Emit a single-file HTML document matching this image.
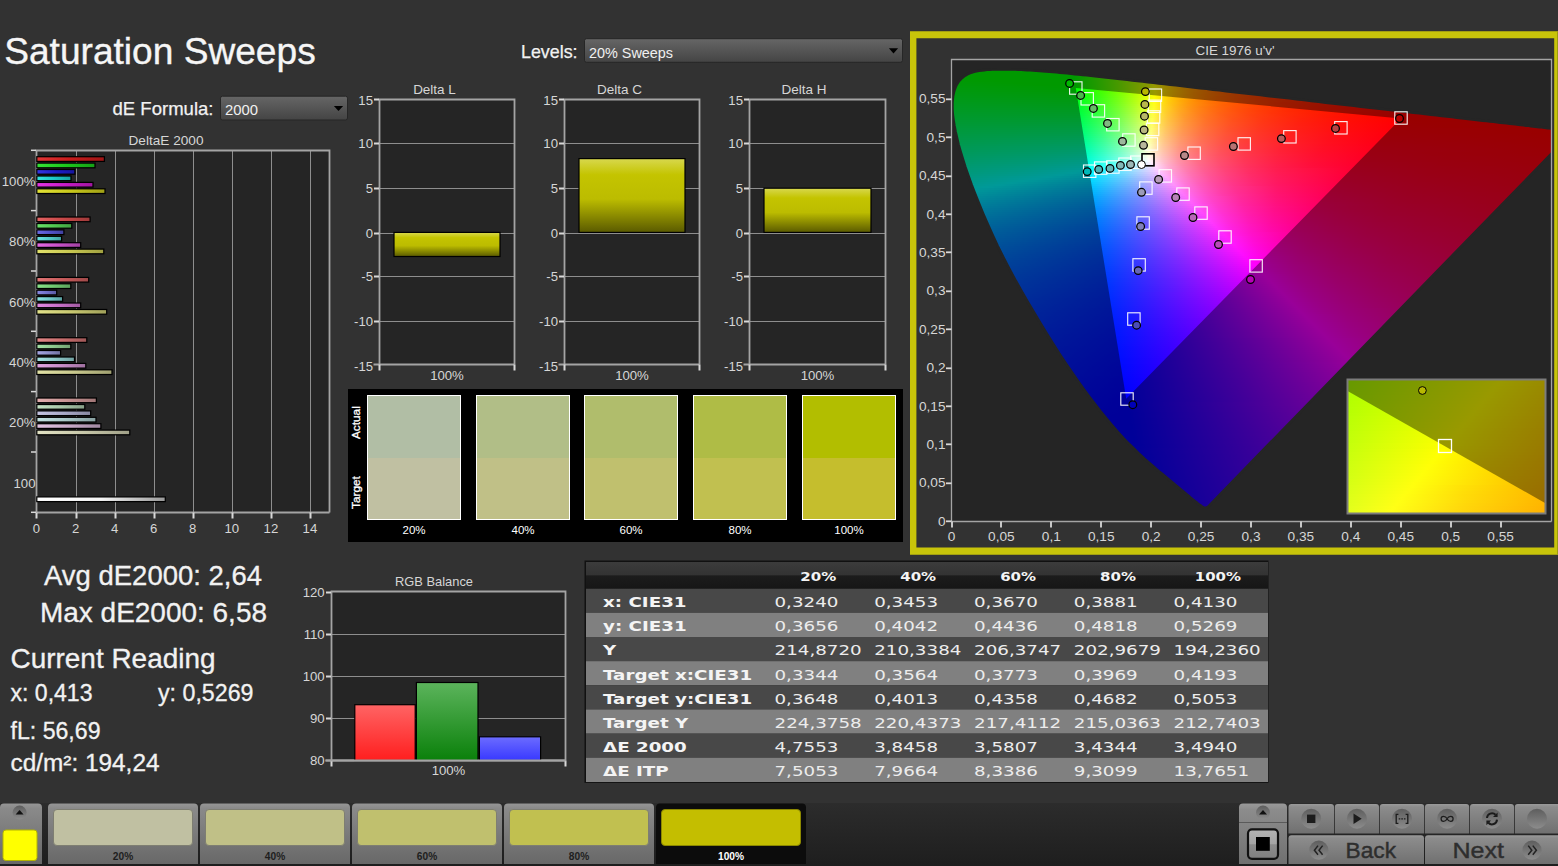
<!DOCTYPE html>
<html lang="en"><head><meta charset="utf-8"><title>Saturation Sweeps</title>
<style>
html,body{margin:0;padding:0;background:#323232;overflow:hidden}
body{width:1558px;height:866px}
svg{display:block;font-family:"Liberation Sans", sans-serif}
</style></head><body>
<svg width="1558" height="866" viewBox="0 0 1558 866">
<defs><linearGradient id="dd" x1="0" y1="0" x2="0" y2="1"><stop offset="0" stop-color="#666"/><stop offset=".5" stop-color="#555"/><stop offset="1" stop-color="#444"/></linearGradient><linearGradient id="b0" x1="0" y1="0" x2="1" y2="0"><stop offset="0" stop-color="#e23636"/><stop offset=".5" stop-color="#c81c1c"/><stop offset="1" stop-color="#a01616"/></linearGradient><linearGradient id="b1" x1="0" y1="0" x2="1" y2="0"><stop offset="0" stop-color="#36e236"/><stop offset=".5" stop-color="#1cc81c"/><stop offset="1" stop-color="#16a016"/></linearGradient><linearGradient id="b2" x1="0" y1="0" x2="1" y2="0"><stop offset="0" stop-color="#3636e2"/><stop offset=".5" stop-color="#1c1cc8"/><stop offset="1" stop-color="#1616a0"/></linearGradient><linearGradient id="b3" x1="0" y1="0" x2="1" y2="0"><stop offset="0" stop-color="#36e2e2"/><stop offset=".5" stop-color="#1cc8c8"/><stop offset="1" stop-color="#16a0a0"/></linearGradient><linearGradient id="b4" x1="0" y1="0" x2="1" y2="0"><stop offset="0" stop-color="#e236e2"/><stop offset=".5" stop-color="#c81cc8"/><stop offset="1" stop-color="#a016a0"/></linearGradient><linearGradient id="b5" x1="0" y1="0" x2="1" y2="0"><stop offset="0" stop-color="#e2e236"/><stop offset=".5" stop-color="#c8c81c"/><stop offset="1" stop-color="#a0a016"/></linearGradient><linearGradient id="b6" x1="0" y1="0" x2="1" y2="0"><stop offset="0" stop-color="#e26262"/><stop offset=".5" stop-color="#c84848"/><stop offset="1" stop-color="#a03a3a"/></linearGradient><linearGradient id="b7" x1="0" y1="0" x2="1" y2="0"><stop offset="0" stop-color="#6be26b"/><stop offset=".5" stop-color="#51c851"/><stop offset="1" stop-color="#41a041"/></linearGradient><linearGradient id="b8" x1="0" y1="0" x2="1" y2="0"><stop offset="0" stop-color="#6b6be2"/><stop offset=".5" stop-color="#5151c8"/><stop offset="1" stop-color="#4141a0"/></linearGradient><linearGradient id="b9" x1="0" y1="0" x2="1" y2="0"><stop offset="0" stop-color="#6be2e2"/><stop offset=".5" stop-color="#51c8c8"/><stop offset="1" stop-color="#41a0a0"/></linearGradient><linearGradient id="b10" x1="0" y1="0" x2="1" y2="0"><stop offset="0" stop-color="#e26be2"/><stop offset=".5" stop-color="#c851c8"/><stop offset="1" stop-color="#a041a0"/></linearGradient><linearGradient id="b11" x1="0" y1="0" x2="1" y2="0"><stop offset="0" stop-color="#e2e26b"/><stop offset=".5" stop-color="#c8c851"/><stop offset="1" stop-color="#a0a041"/></linearGradient><linearGradient id="b12" x1="0" y1="0" x2="1" y2="0"><stop offset="0" stop-color="#e27676"/><stop offset=".5" stop-color="#c85c5c"/><stop offset="1" stop-color="#a04a4a"/></linearGradient><linearGradient id="b13" x1="0" y1="0" x2="1" y2="0"><stop offset="0" stop-color="#8ae28a"/><stop offset=".5" stop-color="#70c870"/><stop offset="1" stop-color="#5aa05a"/></linearGradient><linearGradient id="b14" x1="0" y1="0" x2="1" y2="0"><stop offset="0" stop-color="#8a8ae2"/><stop offset=".5" stop-color="#7070c8"/><stop offset="1" stop-color="#5a5aa0"/></linearGradient><linearGradient id="b15" x1="0" y1="0" x2="1" y2="0"><stop offset="0" stop-color="#8ae2e2"/><stop offset=".5" stop-color="#70c8c8"/><stop offset="1" stop-color="#5aa0a0"/></linearGradient><linearGradient id="b16" x1="0" y1="0" x2="1" y2="0"><stop offset="0" stop-color="#e28ae2"/><stop offset=".5" stop-color="#c870c8"/><stop offset="1" stop-color="#a05aa0"/></linearGradient><linearGradient id="b17" x1="0" y1="0" x2="1" y2="0"><stop offset="0" stop-color="#e2e28a"/><stop offset=".5" stop-color="#c8c870"/><stop offset="1" stop-color="#a0a05a"/></linearGradient><linearGradient id="b18" x1="0" y1="0" x2="1" y2="0"><stop offset="0" stop-color="#e28888"/><stop offset=".5" stop-color="#c86e6e"/><stop offset="1" stop-color="#a05858"/></linearGradient><linearGradient id="b19" x1="0" y1="0" x2="1" y2="0"><stop offset="0" stop-color="#a6e2a6"/><stop offset=".5" stop-color="#8dc88d"/><stop offset="1" stop-color="#71a071"/></linearGradient><linearGradient id="b20" x1="0" y1="0" x2="1" y2="0"><stop offset="0" stop-color="#a6a6e2"/><stop offset=".5" stop-color="#8d8dc8"/><stop offset="1" stop-color="#7171a0"/></linearGradient><linearGradient id="b21" x1="0" y1="0" x2="1" y2="0"><stop offset="0" stop-color="#a6e2e2"/><stop offset=".5" stop-color="#8dc8c8"/><stop offset="1" stop-color="#71a0a0"/></linearGradient><linearGradient id="b22" x1="0" y1="0" x2="1" y2="0"><stop offset="0" stop-color="#e2a6e2"/><stop offset=".5" stop-color="#c88dc8"/><stop offset="1" stop-color="#a071a0"/></linearGradient><linearGradient id="b23" x1="0" y1="0" x2="1" y2="0"><stop offset="0" stop-color="#e2e2a6"/><stop offset=".5" stop-color="#c8c88d"/><stop offset="1" stop-color="#a0a071"/></linearGradient><linearGradient id="b24" x1="0" y1="0" x2="1" y2="0"><stop offset="0" stop-color="#e2aeae"/><stop offset=".5" stop-color="#c89494"/><stop offset="1" stop-color="#a07676"/></linearGradient><linearGradient id="b25" x1="0" y1="0" x2="1" y2="0"><stop offset="0" stop-color="#c4e2c4"/><stop offset=".5" stop-color="#aac8aa"/><stop offset="1" stop-color="#88a088"/></linearGradient><linearGradient id="b26" x1="0" y1="0" x2="1" y2="0"><stop offset="0" stop-color="#c4c4e2"/><stop offset=".5" stop-color="#aaaac8"/><stop offset="1" stop-color="#8888a0"/></linearGradient><linearGradient id="b27" x1="0" y1="0" x2="1" y2="0"><stop offset="0" stop-color="#c4e2e2"/><stop offset=".5" stop-color="#aac8c8"/><stop offset="1" stop-color="#88a0a0"/></linearGradient><linearGradient id="b28" x1="0" y1="0" x2="1" y2="0"><stop offset="0" stop-color="#e2c4e2"/><stop offset=".5" stop-color="#c8aac8"/><stop offset="1" stop-color="#a088a0"/></linearGradient><linearGradient id="b29" x1="0" y1="0" x2="1" y2="0"><stop offset="0" stop-color="#e2e2c4"/><stop offset=".5" stop-color="#c8c8aa"/><stop offset="1" stop-color="#a0a088"/></linearGradient><linearGradient id="bw" x1="0" y1="0" x2="1" y2="0"><stop offset="0" stop-color="#fff"/><stop offset=".5" stop-color="#f4f4f4"/><stop offset="1" stop-color="#9a9a9a"/></linearGradient><linearGradient id="yb" x1="0" y1="0" x2="0" y2="1"><stop offset="0" stop-color="#d8d84e"/><stop offset=".22" stop-color="#c4c400"/><stop offset=".55" stop-color="#bcbc00"/><stop offset="1" stop-color="#5a5a00"/></linearGradient><clipPath id="plotclip"><rect x="952" y="60" width="599.5" height="461"/></clipPath><clipPath id="locus" clip-path="url(#plotclip)"><polygon points="1207.5,507.3 1207.4,507.3 1207.4,507.3 1207.4,507.3 1207.3,507.3 1207.3,507.3 1207.2,507.3 1207.2,507.4 1207.2,507.4 1207.1,507.5 1207.0,507.5 1206.9,507.4 1206.8,507.4 1206.7,507.4 1206.7,507.4 1206.6,507.5 1206.6,507.5 1206.5,507.6 1206.5,507.7 1206.4,507.7 1206.4,507.8 1206.3,507.8 1206.2,507.8 1206.1,507.8 1206.0,507.8 1205.9,507.8 1205.7,507.8 1205.6,507.8 1205.4,507.8 1205.3,507.8 1205.1,507.8 1205.0,507.8 1204.8,507.8 1204.6,507.8 1204.5,507.7 1204.3,507.7 1204.1,507.6 1203.8,507.6 1203.6,507.4 1203.2,507.3 1202.8,507.0 1202.4,506.8 1201.9,506.5 1201.4,506.1 1200.8,505.7 1200.3,505.3 1199.6,504.9 1199.0,504.4 1198.3,503.8 1197.5,503.3 1196.7,502.6 1195.8,501.9 1194.9,501.2 1193.9,500.4 1192.8,499.6 1191.7,498.6 1190.6,497.7 1189.4,496.6 1188.1,495.5 1186.8,494.4 1185.4,493.2 1183.9,492.0 1182.4,490.7 1180.8,489.4 1179.1,488.0 1177.3,486.5 1175.4,484.9 1173.4,483.2 1171.3,481.5 1169.1,479.7 1166.8,477.8 1164.4,475.8 1162.0,473.8 1159.4,471.7 1156.7,469.4 1154.0,467.1 1151.1,464.6 1148.1,462.0 1144.9,459.2 1141.7,456.2 1138.4,453.1 1135.0,449.8 1131.4,446.3 1127.7,442.6 1123.8,438.6 1119.7,434.1 1115.3,429.1 1110.6,423.6 1105.6,417.5 1100.3,411.0 1094.9,404.0 1089.3,396.7 1083.6,388.9 1077.7,380.7 1071.7,372.1 1065.5,363.0 1059.2,353.5 1052.9,343.5 1046.5,333.3 1040.1,322.7 1033.7,312.0 1027.3,301.1 1021.0,290.1 1014.8,279.1 1008.8,267.9 1003.1,256.8 997.6,245.8 992.5,234.9 987.8,224.3 983.3,213.9 979.1,203.8 975.2,194.1 971.6,184.7 968.4,175.7 965.4,167.2 962.9,159.2 960.6,151.6 958.6,144.5 957.0,137.9 955.6,131.7 954.5,126.0 953.6,120.6 952.9,115.6 952.5,111.0 952.4,106.8 952.4,102.9 952.7,99.2 953.1,95.8 953.8,92.6 954.6,89.7 955.6,87.0 956.8,84.5 958.2,82.3 959.7,80.3 961.4,78.5 963.3,76.9 965.2,75.5 967.3,74.3 969.5,73.3 971.7,72.5 974.1,71.7 976.5,71.2 979.0,70.7 981.6,70.4 984.2,70.1 986.9,69.8 989.7,69.7 992.5,69.5 995.3,69.5 998.2,69.4 1001.0,69.4 1003.8,69.4 1006.7,69.4 1009.5,69.4 1012.3,69.5 1015.2,69.5 1018.1,69.6 1021.1,69.8 1024.0,69.9 1027.1,70.1 1030.1,70.2 1033.2,70.4 1036.4,70.7 1039.6,70.9 1042.8,71.1 1046.1,71.4 1049.5,71.7 1052.9,72.0 1056.4,72.3 1059.9,72.6 1063.5,73.0 1067.2,73.3 1071.0,73.7 1074.8,74.1 1078.7,74.5 1082.7,74.9 1086.8,75.3 1090.9,75.8 1095.1,76.2 1099.5,76.7 1103.9,77.2 1108.4,77.7 1113.0,78.2 1117.7,78.7 1122.5,79.2 1127.3,79.8 1132.3,80.4 1137.4,80.9 1142.6,81.5 1147.9,82.1 1153.3,82.7 1158.8,83.4 1164.4,84.0 1170.1,84.7 1175.9,85.3 1181.8,86.0 1187.8,86.7 1194.0,87.4 1200.2,88.1 1206.5,88.8 1212.9,89.6 1219.5,90.3 1226.1,91.1 1232.8,91.9 1239.6,92.6 1246.5,93.4 1253.5,94.2 1260.5,95.0 1267.6,95.9 1274.8,96.7 1282.0,97.5 1289.3,98.3 1296.6,99.2 1303.9,100.0 1311.3,100.9 1318.5,101.7 1325.7,102.6 1332.8,103.4 1339.9,104.2 1346.9,105.0 1353.9,105.8 1360.9,106.6 1367.9,107.4 1374.8,108.2 1381.6,109.0 1388.3,109.7 1394.8,110.5 1401.2,111.2 1407.4,111.9 1413.5,112.6 1419.4,113.3 1425.2,114.0 1430.9,114.6 1436.4,115.2 1441.8,115.9 1447.0,116.5 1452.0,117.0 1456.8,117.6 1461.5,118.1 1466.1,118.7 1470.4,119.2 1474.6,119.7 1478.7,120.1 1482.7,120.6 1486.5,121.0 1490.1,121.4 1493.6,121.8 1497.0,122.2 1500.3,122.6 1503.5,123.0 1506.7,123.3 1509.7,123.7 1512.7,124.0 1515.5,124.3 1518.3,124.7 1521.0,125.0 1523.6,125.3 1526.1,125.6 1528.6,125.8 1530.9,126.1 1533.1,126.4 1535.3,126.6 1537.4,126.9 1539.4,127.1 1541.3,127.3 1543.1,127.5 1544.8,127.7 1546.4,127.9 1547.8,128.1 1549.2,128.2 1550.6,128.4 1551.9,128.5 1553.1,128.7 1554.3,128.8 1555.4,128.9 1556.5,129.1 1557.5,129.2 1558.4,129.3 1559.3,129.4 1560.1,129.5 1560.9,129.6 1561.6,129.6 1562.2,129.7 1562.8,129.8 1563.3,129.8 1563.8,129.9 1564.3,130.0 1564.8,130.0 1565.3,130.1 1565.8,130.1 1566.2,130.2 1566.6,130.2 1567.0,130.3 1567.4,130.3 1567.8,130.4 1568.1,130.4 1568.5,130.4 1568.9,130.5 1569.3,130.5 1569.6,130.6 1570.0,130.6 1570.4,130.7 1570.7,130.7 1571.1,130.7 1571.4,130.8 1571.7,130.8 1572.0,130.8 1572.2,130.9 1572.3,130.9 1572.5,130.9 1572.6,130.9 1572.8,130.9 1572.9,130.9 1573.0,131.0 1573.1,131.0 1573.2,131.0 1573.2,131.0 1573.3,131.0 1573.4,131.0 1573.4,131.0 1573.4,131.0"/></clipPath><linearGradient id="cb" gradientUnits="userSpaceOnUse" x1="952" y1="0" x2="1552" y2="0"/><linearGradient id="c0" href="#cb"><stop offset=".0533" stop-color="#0f0"/><stop offset=".1250" stop-color="#0f0"/></linearGradient><linearGradient id="c1" href="#cb"><stop offset=".0333" stop-color="#0f0"/><stop offset=".1717" stop-color="#0f0"/></linearGradient><linearGradient id="c2" href="#cb"><stop offset=".0233" stop-color="#0f0"/><stop offset=".2017" stop-color="#0f0"/><stop offset=".2050" stop-color="#04ff00"/></linearGradient><linearGradient id="c3" href="#cb"><stop offset=".0183" stop-color="#0f0"/><stop offset=".2017" stop-color="#0f0"/><stop offset=".2367" stop-color="#3f0"/></linearGradient><linearGradient id="c4" href="#cb"><stop offset=".0133" stop-color="#0f0"/><stop offset=".2033" stop-color="#0f0"/><stop offset=".2367" stop-color="#3f0"/><stop offset=".2683" stop-color="#69ff00"/></linearGradient><linearGradient id="c5" href="#cb"><stop offset=".0100" stop-color="#00ff03"/><stop offset=".0467" stop-color="#0f0"/><stop offset=".2033" stop-color="#0f0"/><stop offset=".2517" stop-color="#4bff00"/><stop offset=".2983" stop-color="#a2ff00"/></linearGradient><linearGradient id="c6" href="#cb"><stop offset=".0083" stop-color="#00ff07"/><stop offset=".0817" stop-color="#0f0"/><stop offset=".2050" stop-color="#01ff00"/><stop offset=".2383" stop-color="#34ff00"/><stop offset=".2700" stop-color="#6bff00"/><stop offset=".2983" stop-color="#a2ff00"/><stop offset=".3267" stop-color="#e0ff00"/></linearGradient><linearGradient id="c7" href="#cb"><stop offset=".0067" stop-color="#00ff0b"/><stop offset=".1167" stop-color="#0f0"/><stop offset=".2050" stop-color="#0f0"/><stop offset=".2417" stop-color="#39ff00"/><stop offset=".2767" stop-color="#78ff00"/><stop offset=".3083" stop-color="#b7ff00"/><stop offset=".3383" stop-color="#fcff00"/><stop offset=".3400" stop-color="#fffe00"/><stop offset=".3567" stop-color="#ffda00"/></linearGradient><linearGradient id="c8" href="#cb"><stop offset=".0050" stop-color="#00ff0e"/><stop offset=".1533" stop-color="#0f0"/><stop offset=".2050" stop-color="#0f0"/><stop offset=".2383" stop-color="#3f0"/><stop offset=".2750" stop-color="#74ff00"/><stop offset=".3050" stop-color="#b0ff00"/><stop offset=".3400" stop-color="#fffd00"/><stop offset=".3617" stop-color="#ffd000"/><stop offset=".3850" stop-color="#ffab00"/></linearGradient><linearGradient id="c9" href="#cb"><stop offset=".0033" stop-color="#00ff12"/><stop offset=".2067" stop-color="#01ff00"/><stop offset=".2433" stop-color="#3bff00"/><stop offset=".2767" stop-color="#7f0"/><stop offset=".3083" stop-color="#b8ff00"/><stop offset=".3383" stop-color="#fdff00"/><stop offset=".3567" stop-color="#ffd900"/><stop offset=".3733" stop-color="#ffbc00"/><stop offset=".3933" stop-color="#ffa000"/><stop offset=".4150" stop-color="#f80"/></linearGradient><linearGradient id="c10" href="#cb"><stop offset=".0017" stop-color="#00ff16"/><stop offset=".2058" stop-color="#00ff02"/><stop offset=".2058" stop-color="#00ff02"/><stop offset=".2242" stop-color="#1aff00"/><stop offset=".2242" stop-color="#1cff00"/><stop offset=".2550" stop-color="#4fff00"/><stop offset=".2850" stop-color="#87ff00"/><stop offset=".3117" stop-color="#bfff00"/><stop offset=".3383" stop-color="#feff00"/><stop offset=".3600" stop-color="#ffd100"/><stop offset=".3833" stop-color="#ffac00"/><stop offset=".4117" stop-color="#ff8a00"/><stop offset=".4433" stop-color="#ff6e00"/></linearGradient><linearGradient id="c11" href="#cb"><stop offset=".0000" stop-color="#00ff19"/><stop offset=".2075" stop-color="#00ff07"/><stop offset=".2075" stop-color="#02ff07"/><stop offset=".2592" stop-color="#5f0"/><stop offset=".2592" stop-color="#58ff00"/><stop offset=".3000" stop-color="#a6ff00"/><stop offset=".3383" stop-color="#ff0"/><stop offset=".3633" stop-color="#ffcb00"/><stop offset=".3933" stop-color="#ff9e00"/><stop offset=".4283" stop-color="#ff7900"/><stop offset=".4717" stop-color="#ff5900"/></linearGradient><linearGradient id="c12" href="#cb"><stop offset=".0000" stop-color="#00ff1d"/><stop offset=".2075" stop-color="#00ff0c"/><stop offset=".2075" stop-color="#01ff0c"/><stop offset=".2533" stop-color="#4bff06"/><stop offset=".2958" stop-color="#9cff00"/><stop offset=".2958" stop-color="#9fff00"/><stop offset=".3383" stop-color="#fffe00"/><stop offset=".3533" stop-color="#fd0"/><stop offset=".3683" stop-color="#ffc100"/><stop offset=".4033" stop-color="#ff9100"/><stop offset=".4483" stop-color="#ff6800"/><stop offset=".5017" stop-color="#ff4800"/></linearGradient><linearGradient id="c13" href="#cb"><stop offset=".0000" stop-color="#00ff20"/><stop offset=".2075" stop-color="#0f1"/><stop offset=".2075" stop-color="#00ff10"/><stop offset=".2417" stop-color="#36ff0d"/><stop offset=".2733" stop-color="#70ff09"/><stop offset=".3017" stop-color="#aaff05"/><stop offset=".3308" stop-color="#ecff00"/><stop offset=".3308" stop-color="#f0ff00"/><stop offset=".3383" stop-color="#fffe00"/><stop offset=".3533" stop-color="#ffdc00"/><stop offset=".3717" stop-color="#fb0"/><stop offset=".3917" stop-color="#ff9e00"/><stop offset=".4150" stop-color="#ff8400"/><stop offset=".4667" stop-color="#ff5b00"/><stop offset=".5300" stop-color="#ff3b00"/></linearGradient><linearGradient id="c14" href="#cb"><stop offset=".0000" stop-color="#00ff24"/><stop offset=".2092" stop-color="#00ff15"/><stop offset=".2092" stop-color="#02ff15"/><stop offset=".2450" stop-color="#3bff11"/><stop offset=".2767" stop-color="#76ff0e"/><stop offset=".3083" stop-color="#b9ff09"/><stop offset=".3367" stop-color="#fdff05"/><stop offset=".3675" stop-color="#ffc200"/><stop offset=".3675" stop-color="#ffbf00"/><stop offset=".4033" stop-color="#ff9000"/><stop offset=".4450" stop-color="#ff6900"/><stop offset=".4967" stop-color="#ff4900"/><stop offset=".5600" stop-color="#ff2f00"/></linearGradient><linearGradient id="c15" href="#cb"><stop offset=".0000" stop-color="#00ff28"/><stop offset=".2092" stop-color="#00ff1a"/><stop offset=".2092" stop-color="#01ff1a"/><stop offset=".2450" stop-color="#3bff17"/><stop offset=".2767" stop-color="#76ff13"/><stop offset=".3083" stop-color="#b9ff0f"/><stop offset=".3367" stop-color="#feff0b"/><stop offset=".3517" stop-color="#ffde08"/><stop offset=".3667" stop-color="#ffc105"/><stop offset=".4025" stop-color="#ff9100"/><stop offset=".4025" stop-color="#ff8f00"/><stop offset=".4383" stop-color="#ff6e00"/><stop offset=".4800" stop-color="#ff5200"/><stop offset=".5300" stop-color="#ff3900"/><stop offset=".5883" stop-color="#ff2500"/></linearGradient><linearGradient id="c16" href="#cb"><stop offset=".0000" stop-color="#00ff2b"/><stop offset=".2092" stop-color="#00ff1f"/><stop offset=".2092" stop-color="#00ff1f"/><stop offset=".2450" stop-color="#3aff1c"/><stop offset=".2767" stop-color="#76ff19"/><stop offset=".3083" stop-color="#baff15"/><stop offset=".3367" stop-color="#ffff12"/><stop offset=".3567" stop-color="#ffd30c"/><stop offset=".3800" stop-color="#ffac08"/><stop offset=".4067" stop-color="#ff8a04"/><stop offset=".4375" stop-color="#ff6e00"/><stop offset=".4375" stop-color="#ff6d00"/><stop offset=".4733" stop-color="#f50"/><stop offset=".5150" stop-color="#ff3f00"/><stop offset=".6167" stop-color="#ff1d00"/></linearGradient><linearGradient id="c17" href="#cb"><stop offset=".0000" stop-color="#00ff2f"/><stop offset=".2108" stop-color="#00ff24"/><stop offset=".2108" stop-color="#02ff24"/><stop offset=".2467" stop-color="#3dff21"/><stop offset=".2783" stop-color="#79ff1e"/><stop offset=".3083" stop-color="#baff1b"/><stop offset=".3367" stop-color="#ffff18"/><stop offset=".3617" stop-color="#ffc810"/><stop offset=".3933" stop-color="#ff990a"/><stop offset=".4300" stop-color="#ff7304"/><stop offset=".4742" stop-color="#ff5400"/><stop offset=".4742" stop-color="#ff5300"/><stop offset=".5500" stop-color="#ff3000"/><stop offset=".6467" stop-color="#ff1500"/></linearGradient><linearGradient id="c18" href="#cb"><stop offset=".0000" stop-color="#0f3"/><stop offset=".2108" stop-color="#00ff29"/><stop offset=".2108" stop-color="#01ff29"/><stop offset=".2450" stop-color="#39ff27"/><stop offset=".2767" stop-color="#76ff24"/><stop offset=".3050" stop-color="#b3ff22"/><stop offset=".3367" stop-color="#fffe1e"/><stop offset=".3517" stop-color="#ffdb19"/><stop offset=".3667" stop-color="#ffbf14"/><stop offset=".3850" stop-color="#ffa310"/><stop offset=".4050" stop-color="#ff8b0c"/><stop offset=".4517" stop-color="#ff6105"/><stop offset=".5092" stop-color="#ff4100"/><stop offset=".5092" stop-color="#ff4000"/><stop offset=".5833" stop-color="#ff2500"/><stop offset=".6750" stop-color="#ff0f00"/></linearGradient><linearGradient id="c19" href="#cb"><stop offset=".0000" stop-color="#00ff37"/><stop offset=".2108" stop-color="#00ff2e"/><stop offset=".2108" stop-color="#00ff2e"/><stop offset=".2450" stop-color="#39ff2c"/><stop offset=".2767" stop-color="#75ff2a"/><stop offset=".3050" stop-color="#b3ff28"/><stop offset=".3367" stop-color="#fffd25"/><stop offset=".3533" stop-color="#ffd71e"/><stop offset=".3717" stop-color="#ffb618"/><stop offset=".3917" stop-color="#ff9913"/><stop offset=".4150" stop-color="#ff7f0e"/><stop offset=".4417" stop-color="#ff680a"/><stop offset=".4717" stop-color="#ff5406"/><stop offset=".5442" stop-color="#ff3200"/><stop offset=".5442" stop-color="#ff3100"/><stop offset=".6167" stop-color="#ff1b00"/><stop offset=".7050" stop-color="#ff0900"/></linearGradient><linearGradient id="c20" href="#cb"><stop offset=".0000" stop-color="#00ff3b"/><stop offset=".2125" stop-color="#0f3"/><stop offset=".2125" stop-color="#02ff33"/><stop offset=".2467" stop-color="#3bff32"/><stop offset=".2767" stop-color="#75ff30"/><stop offset=".3033" stop-color="#afff2e"/><stop offset=".3350" stop-color="#fdff2c"/><stop offset=".3367" stop-color="#fffc2b"/><stop offset=".3550" stop-color="#ffd223"/><stop offset=".3750" stop-color="#ffb01c"/><stop offset=".3983" stop-color="#ff9016"/><stop offset=".4267" stop-color="#ff7410"/><stop offset=".4583" stop-color="#ff5b0b"/><stop offset=".4933" stop-color="#ff4707"/><stop offset=".5808" stop-color="#ff2500"/><stop offset=".5808" stop-color="#ff2400"/><stop offset=".6517" stop-color="#ff1300"/><stop offset=".7333" stop-color="#ff0400"/></linearGradient><linearGradient id="c21" href="#cb"><stop offset=".0000" stop-color="#00ff3e"/><stop offset=".2125" stop-color="#00ff39"/><stop offset=".2125" stop-color="#01ff39"/><stop offset=".2467" stop-color="#3bff37"/><stop offset=".2783" stop-color="#79ff36"/><stop offset=".3083" stop-color="#bbff34"/><stop offset=".3350" stop-color="#feff33"/><stop offset=".3550" stop-color="#ffd229"/><stop offset=".3783" stop-color="#ffaa20"/><stop offset=".4050" stop-color="#ff8818"/><stop offset=".4350" stop-color="#ff6c12"/><stop offset=".4700" stop-color="#ff530d"/><stop offset=".5117" stop-color="#ff3d08"/><stop offset=".5600" stop-color="#ff2a04"/><stop offset=".6158" stop-color="#ff1b00"/><stop offset=".6158" stop-color="#ff1a00"/><stop offset=".7633" stop-color="#f00"/></linearGradient><linearGradient id="c22" href="#cb"><stop offset=".0000" stop-color="#00ff42"/><stop offset=".2125" stop-color="#00ff3e"/><stop offset=".2125" stop-color="#00ff3e"/><stop offset=".2467" stop-color="#3aff3d"/><stop offset=".2783" stop-color="#78ff3c"/><stop offset=".3067" stop-color="#b7ff3b"/><stop offset=".3350" stop-color="#ffff3a"/><stop offset=".3567" stop-color="#ffcd2e"/><stop offset=".3817" stop-color="#ffa424"/><stop offset=".4100" stop-color="#ff821b"/><stop offset=".4450" stop-color="#ff6314"/><stop offset=".4850" stop-color="#ff4a0e"/><stop offset=".5317" stop-color="#ff3408"/><stop offset=".5867" stop-color="#ff2204"/><stop offset=".6525" stop-color="#ff1200"/><stop offset=".6525" stop-color="#f10"/><stop offset=".7567" stop-color="#f00"/><stop offset=".7917" stop-color="#f00"/></linearGradient><linearGradient id="c23" href="#cb"><stop offset=".0000" stop-color="#00ff46"/><stop offset=".2142" stop-color="#00ff43"/><stop offset=".2142" stop-color="#02ff43"/><stop offset=".2483" stop-color="#3dff43"/><stop offset=".2783" stop-color="#78ff42"/><stop offset=".3067" stop-color="#b8ff42"/><stop offset=".3350" stop-color="#fffe41"/><stop offset=".3583" stop-color="#ffc933"/><stop offset=".3850" stop-color="#ff9e27"/><stop offset=".4167" stop-color="#ff7a1e"/><stop offset=".4533" stop-color="#ff5c16"/><stop offset=".4983" stop-color="#ff420f"/><stop offset=".5500" stop-color="#ff2d09"/><stop offset=".6133" stop-color="#ff1a04"/><stop offset=".6875" stop-color="#ff0a00"/><stop offset=".6875" stop-color="#ff0a00"/><stop offset=".7533" stop-color="#f00"/><stop offset=".8200" stop-color="#f00"/></linearGradient><linearGradient id="c24" href="#cb"><stop offset=".0000" stop-color="#00ff4a"/><stop offset=".2142" stop-color="#00ff49"/><stop offset=".2142" stop-color="#01ff49"/><stop offset=".2467" stop-color="#39ff49"/><stop offset=".2767" stop-color="#74ff48"/><stop offset=".3033" stop-color="#b0ff48"/><stop offset=".3350" stop-color="#fffd47"/><stop offset=".3583" stop-color="#ffc838"/><stop offset=".3867" stop-color="#ff9b2b"/><stop offset=".4200" stop-color="#ff7621"/><stop offset=".4617" stop-color="#ff5617"/><stop offset=".5100" stop-color="#ff3c10"/><stop offset=".5683" stop-color="#ff260a"/><stop offset=".6383" stop-color="#ff1304"/><stop offset=".7225" stop-color="#ff0400"/><stop offset=".7225" stop-color="#ff0400"/><stop offset=".7517" stop-color="#f00"/><stop offset=".8500" stop-color="#f00"/></linearGradient><linearGradient id="c25" href="#cb"><stop offset=".0000" stop-color="#00ff4e"/><stop offset=".2142" stop-color="#00ff4f"/><stop offset=".2142" stop-color="#00ff4f"/><stop offset=".2467" stop-color="#38ff4f"/><stop offset=".2767" stop-color="#74ff4f"/><stop offset=".3033" stop-color="#b0ff4f"/><stop offset=".3333" stop-color="#fdff4f"/><stop offset=".3350" stop-color="#fffc4e"/><stop offset=".3467" stop-color="#ffe045"/><stop offset=".3600" stop-color="#ffc43d"/><stop offset=".3900" stop-color="#ff962f"/><stop offset=".4250" stop-color="#ff7123"/><stop offset=".4683" stop-color="#ff5119"/><stop offset=".5200" stop-color="#ff3711"/><stop offset=".5817" stop-color="#ff210b"/><stop offset=".6567" stop-color="#ff0f05"/><stop offset=".7475" stop-color="#ff0001"/><stop offset=".7475" stop-color="#f00"/><stop offset=".8783" stop-color="#f00"/></linearGradient><linearGradient id="c26" href="#cb"><stop offset=".0000" stop-color="#00ff52"/><stop offset=".2158" stop-color="#00ff54"/><stop offset=".2158" stop-color="#02ff54"/><stop offset=".2483" stop-color="#3bff55"/><stop offset=".2767" stop-color="#74ff55"/><stop offset=".3067" stop-color="#b9ff56"/><stop offset=".3333" stop-color="#feff56"/><stop offset=".3350" stop-color="#fffb55"/><stop offset=".3467" stop-color="#ffdf4c"/><stop offset=".3600" stop-color="#ffc343"/><stop offset=".3883" stop-color="#ff9734"/><stop offset=".4233" stop-color="#ff7128"/><stop offset=".4667" stop-color="#ff511d"/><stop offset=".5183" stop-color="#ff3714"/><stop offset=".5800" stop-color="#ff210d"/><stop offset=".6533" stop-color="#ff0f07"/><stop offset=".7442" stop-color="#ff0002"/><stop offset=".7442" stop-color="#ff0002"/><stop offset=".9083" stop-color="#f00"/></linearGradient><linearGradient id="c27" href="#cb"><stop offset=".0000" stop-color="#00ff56"/><stop offset=".2158" stop-color="#00ff5a"/><stop offset=".2158" stop-color="#01ff5a"/><stop offset=".2483" stop-color="#3aff5b"/><stop offset=".2783" stop-color="#77ff5c"/><stop offset=".3067" stop-color="#b9ff5d"/><stop offset=".3333" stop-color="#ffff5e"/><stop offset=".3450" stop-color="#ffe253"/><stop offset=".3583" stop-color="#ffc64a"/><stop offset=".3867" stop-color="#ff993a"/><stop offset=".4217" stop-color="#ff722c"/><stop offset=".4633" stop-color="#ff5321"/><stop offset=".5150" stop-color="#ff3817"/><stop offset=".5767" stop-color="#ff2110"/><stop offset=".6500" stop-color="#ff0f09"/><stop offset=".7408" stop-color="#ff0004"/><stop offset=".7408" stop-color="#ff0004"/><stop offset=".9367" stop-color="#f00"/></linearGradient><linearGradient id="c28" href="#cb"><stop offset=".0017" stop-color="#00ff5a"/><stop offset=".2158" stop-color="#00ff60"/><stop offset=".2158" stop-color="#01ff60"/><stop offset=".2483" stop-color="#3aff61"/><stop offset=".2783" stop-color="#77ff62"/><stop offset=".3050" stop-color="#b5ff64"/><stop offset=".3333" stop-color="#fffe65"/><stop offset=".3450" stop-color="#ffe15a"/><stop offset=".3583" stop-color="#ffc54f"/><stop offset=".3867" stop-color="#ff983e"/><stop offset=".4217" stop-color="#ff7130"/><stop offset=".4633" stop-color="#ff5224"/><stop offset=".5133" stop-color="#ff381a"/><stop offset=".5750" stop-color="#ff2112"/><stop offset=".6483" stop-color="#ff0f0b"/><stop offset=".7375" stop-color="#ff0006"/><stop offset=".7375" stop-color="#ff0005"/><stop offset=".9650" stop-color="#f00"/></linearGradient><linearGradient id="c29" href="#cb"><stop offset=".0017" stop-color="#00ff5f"/><stop offset=".2175" stop-color="#0f6"/><stop offset=".2175" stop-color="#02ff66"/><stop offset=".2500" stop-color="#3cff67"/><stop offset=".2783" stop-color="#77ff69"/><stop offset=".3050" stop-color="#b5ff6b"/><stop offset=".3333" stop-color="#fffd6c"/><stop offset=".3567" stop-color="#ffc757"/><stop offset=".3850" stop-color="#f94"/><stop offset=".4200" stop-color="#ff7235"/><stop offset=".4617" stop-color="#ff5228"/><stop offset=".5117" stop-color="#ff381d"/><stop offset=".5717" stop-color="#ff2215"/><stop offset=".6450" stop-color="#ff0f0d"/><stop offset=".7342" stop-color="#ff0007"/><stop offset=".7342" stop-color="#ff0007"/><stop offset=".9000" stop-color="#f00"/><stop offset=".9950" stop-color="#f00"/></linearGradient><linearGradient id="c30" href="#cb"><stop offset=".0017" stop-color="#00ff63"/><stop offset=".2175" stop-color="#00ff6c"/><stop offset=".2175" stop-color="#02ff6c"/><stop offset=".2483" stop-color="#39ff6e"/><stop offset=".2767" stop-color="#73ff70"/><stop offset=".3017" stop-color="#adff72"/><stop offset=".3333" stop-color="#fffd74"/><stop offset=".3567" stop-color="#ffc65d"/><stop offset=".3850" stop-color="#ff9849"/><stop offset=".4200" stop-color="#ff7139"/><stop offset=".4617" stop-color="#ff512b"/><stop offset=".5117" stop-color="#ff3720"/><stop offset=".5717" stop-color="#ff2117"/><stop offset=".6433" stop-color="#ff0f0f"/><stop offset=".7308" stop-color="#ff0009"/><stop offset=".7308" stop-color="#ff0009"/><stop offset="1.0000" stop-color="#f00"/></linearGradient><linearGradient id="c31" href="#cb"><stop offset=".0033" stop-color="#00ff67"/><stop offset=".2175" stop-color="#00ff72"/><stop offset=".2175" stop-color="#01ff72"/><stop offset=".2483" stop-color="#38ff74"/><stop offset=".2767" stop-color="#73ff77"/><stop offset=".3050" stop-color="#b6ff7a"/><stop offset=".3317" stop-color="#feff7d"/><stop offset=".3333" stop-color="#fffc7b"/><stop offset=".3450" stop-color="#ffde6e"/><stop offset=".3567" stop-color="#ffc563"/><stop offset=".3850" stop-color="#ff974e"/><stop offset=".4183" stop-color="#ff723d"/><stop offset=".4600" stop-color="#ff512f"/><stop offset=".5100" stop-color="#ff3723"/><stop offset=".5683" stop-color="#ff211a"/><stop offset=".6400" stop-color="#ff0f11"/><stop offset=".7275" stop-color="#ff000b"/><stop offset=".7275" stop-color="#ff000b"/><stop offset="1.0000" stop-color="#f00"/></linearGradient><linearGradient id="c32" href="#cb"><stop offset=".0033" stop-color="#00ff6b"/><stop offset=".2192" stop-color="#00ff78"/><stop offset=".2192" stop-color="#03ff78"/><stop offset=".2517" stop-color="#3eff7b"/><stop offset=".2800" stop-color="#7aff7e"/><stop offset=".3067" stop-color="#baff81"/><stop offset=".3317" stop-color="#feff85"/><stop offset=".3550" stop-color="#ffc76a"/><stop offset=".3833" stop-color="#ff9854"/><stop offset=".4167" stop-color="#ff7242"/><stop offset=".4583" stop-color="#ff5233"/><stop offset=".5067" stop-color="#ff3827"/><stop offset=".5667" stop-color="#ff211c"/><stop offset=".6383" stop-color="#ff0f14"/><stop offset=".7242" stop-color="#ff000d"/><stop offset=".7242" stop-color="#ff000c"/><stop offset="1.0000" stop-color="#f00"/></linearGradient><linearGradient id="c33" href="#cb"><stop offset=".0050" stop-color="#00ff70"/><stop offset=".2192" stop-color="#00ff7e"/><stop offset=".2192" stop-color="#02ff7e"/><stop offset=".2500" stop-color="#3aff82"/><stop offset=".2783" stop-color="#76ff85"/><stop offset=".3050" stop-color="#b6ff89"/><stop offset=".3317" stop-color="#ffff8c"/><stop offset=".3433" stop-color="#ffe07d"/><stop offset=".3550" stop-color="#ffc671"/><stop offset=".3833" stop-color="#ff9759"/><stop offset=".4167" stop-color="#ff7146"/><stop offset=".4567" stop-color="#ff5237"/><stop offset=".5050" stop-color="#ff382a"/><stop offset=".5633" stop-color="#ff221f"/><stop offset=".6350" stop-color="#ff0f16"/><stop offset=".7208" stop-color="#ff000e"/><stop offset=".7208" stop-color="#ff000e"/><stop offset="1.0000" stop-color="#ff0001"/></linearGradient><linearGradient id="c34" href="#cb"><stop offset=".0050" stop-color="#00ff74"/><stop offset=".2192" stop-color="#00ff85"/><stop offset=".2192" stop-color="#01ff85"/><stop offset=".2500" stop-color="#39ff88"/><stop offset=".2783" stop-color="#76ff8c"/><stop offset=".3033" stop-color="#b2ff90"/><stop offset=".3317" stop-color="#fffe94"/><stop offset=".3433" stop-color="#ffdf84"/><stop offset=".3550" stop-color="#ffc577"/><stop offset=".3817" stop-color="#ff9960"/><stop offset=".4150" stop-color="#ff724c"/><stop offset=".4550" stop-color="#ff523b"/><stop offset=".5033" stop-color="#ff382d"/><stop offset=".5617" stop-color="#f22"/><stop offset=".6317" stop-color="#ff0f18"/><stop offset=".7175" stop-color="#ff0010"/><stop offset=".7175" stop-color="#ff0010"/><stop offset="1.0000" stop-color="#ff0002"/></linearGradient><linearGradient id="c35" href="#cb"><stop offset=".0050" stop-color="#00ff78"/><stop offset=".2208" stop-color="#00ff8b"/><stop offset=".2208" stop-color="#03ff8b"/><stop offset=".2517" stop-color="#3cff90"/><stop offset=".2783" stop-color="#76ff94"/><stop offset=".3033" stop-color="#b3ff98"/><stop offset=".3317" stop-color="#fffd9c"/><stop offset=".3433" stop-color="#ffde8b"/><stop offset=".3550" stop-color="#ffc47d"/><stop offset=".3817" stop-color="#ff9865"/><stop offset=".4150" stop-color="#ff7150"/><stop offset=".4550" stop-color="#ff513e"/><stop offset=".5033" stop-color="#ff3730"/><stop offset=".5600" stop-color="#ff2224"/><stop offset=".6300" stop-color="#ff0f1a"/><stop offset=".7142" stop-color="#ff0012"/><stop offset=".7142" stop-color="#ff0012"/><stop offset="1.0000" stop-color="#ff0003"/></linearGradient><linearGradient id="c36" href="#cb"><stop offset=".0067" stop-color="#00ff7d"/><stop offset=".2208" stop-color="#00ff92"/><stop offset=".2208" stop-color="#02ff92"/><stop offset=".2500" stop-color="#38ff96"/><stop offset=".2767" stop-color="#72ff9b"/><stop offset=".3000" stop-color="#aaff9f"/><stop offset=".3300" stop-color="#fdffa6"/><stop offset=".3317" stop-color="#fffca4"/><stop offset=".3433" stop-color="#ffdd92"/><stop offset=".3550" stop-color="#ffc384"/><stop offset=".3817" stop-color="#ff976a"/><stop offset=".4150" stop-color="#ff7054"/><stop offset=".4533" stop-color="#ff5243"/><stop offset=".5017" stop-color="#ff3733"/><stop offset=".5583" stop-color="#ff2127"/><stop offset=".6267" stop-color="#ff0f1d"/><stop offset=".7108" stop-color="#ff0014"/><stop offset=".7108" stop-color="#ff0014"/><stop offset="1.0000" stop-color="#ff0004"/></linearGradient><linearGradient id="c37" href="#cb"><stop offset=".0067" stop-color="#00ff81"/><stop offset=".2208" stop-color="#00ff98"/><stop offset=".2208" stop-color="#01ff99"/><stop offset=".2517" stop-color="#3bff9e"/><stop offset=".2800" stop-color="#79ffa3"/><stop offset=".3050" stop-color="#b8ffa8"/><stop offset=".3300" stop-color="#feffae"/><stop offset=".3533" stop-color="#ffc68c"/><stop offset=".3800" stop-color="#ff9871"/><stop offset=".4133" stop-color="#ff7159"/><stop offset=".4517" stop-color="#ff5247"/><stop offset=".4983" stop-color="#ff3837"/><stop offset=".5550" stop-color="#ff222a"/><stop offset=".6233" stop-color="#ff101f"/><stop offset=".7075" stop-color="#ff0016"/><stop offset=".7075" stop-color="#ff0016"/><stop offset="1.0000" stop-color="#ff0005"/></linearGradient><linearGradient id="c38" href="#cb"><stop offset=".0083" stop-color="#00ff86"/><stop offset=".2225" stop-color="#00ff9f"/><stop offset=".2225" stop-color="#03ffa0"/><stop offset=".2533" stop-color="#3effa5"/><stop offset=".2800" stop-color="#79ffab"/><stop offset=".3050" stop-color="#b8ffb0"/><stop offset=".3300" stop-color="#ffffb7"/><stop offset=".3517" stop-color="#ffc895"/><stop offset=".3783" stop-color="#ff9a78"/><stop offset=".4100" stop-color="#ff7360"/><stop offset=".4500" stop-color="#ff524b"/><stop offset=".4967" stop-color="#ff383b"/><stop offset=".5533" stop-color="#ff222d"/><stop offset=".6217" stop-color="#ff0f21"/><stop offset=".7042" stop-color="#ff0018"/><stop offset=".7042" stop-color="#ff0018"/><stop offset="1.0000" stop-color="#ff0006"/></linearGradient><linearGradient id="c39" href="#cb"><stop offset=".0100" stop-color="#00ff8b"/><stop offset=".2225" stop-color="#00ffa6"/><stop offset=".2225" stop-color="#02ffa6"/><stop offset=".2517" stop-color="#3affac"/><stop offset=".2783" stop-color="#75ffb2"/><stop offset=".3033" stop-color="#b4ffb8"/><stop offset=".3300" stop-color="#fffebf"/><stop offset=".3400" stop-color="#ffe2ad"/><stop offset=".3517" stop-color="#ffc79c"/><stop offset=".3783" stop-color="#ff987d"/><stop offset=".4100" stop-color="#ff7264"/><stop offset=".4500" stop-color="#ff514f"/><stop offset=".4967" stop-color="#ff373e"/><stop offset=".5533" stop-color="#ff212f"/><stop offset=".6200" stop-color="#ff0f24"/><stop offset=".7025" stop-color="#ff001a"/><stop offset=".7025" stop-color="#ff001a"/><stop offset="1.0000" stop-color="#ff0007"/></linearGradient><linearGradient id="c40" href="#cb"><stop offset=".0100" stop-color="#00ff8f"/><stop offset=".1250" stop-color="#00ff9d"/><stop offset=".2225" stop-color="#00ffad"/><stop offset=".2225" stop-color="#01ffad"/><stop offset=".2517" stop-color="#39ffb3"/><stop offset=".2783" stop-color="#75ffba"/><stop offset=".3017" stop-color="#b0ffc0"/><stop offset=".3300" stop-color="#fffdc8"/><stop offset=".3400" stop-color="#ffe1b5"/><stop offset=".3517" stop-color="#ffc6a2"/><stop offset=".3783" stop-color="#ff9783"/><stop offset=".4100" stop-color="#ff7169"/><stop offset=".4483" stop-color="#ff5253"/><stop offset=".4950" stop-color="#ff3741"/><stop offset=".5500" stop-color="#ff2132"/><stop offset=".6167" stop-color="#ff0f26"/><stop offset=".6992" stop-color="#ff001c"/><stop offset=".6992" stop-color="#ff001c"/><stop offset="1.0000" stop-color="#ff0008"/></linearGradient><linearGradient id="c41" href="#cb"><stop offset=".0117" stop-color="#00ff94"/><stop offset=".1267" stop-color="#00ffa3"/><stop offset=".2242" stop-color="#00ffb4"/><stop offset=".2242" stop-color="#03ffb5"/><stop offset=".2517" stop-color="#38ffbb"/><stop offset=".2783" stop-color="#75ffc2"/><stop offset=".3000" stop-color="#abffc8"/><stop offset=".3283" stop-color="#fdffd2"/><stop offset=".3300" stop-color="#fffcd0"/><stop offset=".3400" stop-color="#ffe0bc"/><stop offset=".3517" stop-color="#ffc5a9"/><stop offset=".3783" stop-color="#ff9688"/><stop offset=".4100" stop-color="#ff706d"/><stop offset=".4483" stop-color="#ff5157"/><stop offset=".4933" stop-color="#ff3745"/><stop offset=".5483" stop-color="#ff2135"/><stop offset=".6150" stop-color="#ff0f28"/><stop offset=".6958" stop-color="#ff001e"/><stop offset=".6958" stop-color="#ff001e"/><stop offset="1.0000" stop-color="#ff0009"/></linearGradient><linearGradient id="c42" href="#cb"><stop offset=".0117" stop-color="#0f9"/><stop offset=".1267" stop-color="#00ffa9"/><stop offset=".2242" stop-color="#0fb"/><stop offset=".2242" stop-color="#02ffbc"/><stop offset=".2517" stop-color="#38ffc3"/><stop offset=".2783" stop-color="#74ffca"/><stop offset=".3033" stop-color="#b5ffd2"/><stop offset=".3283" stop-color="#feffdb"/><stop offset=".3300" stop-color="#fffbd9"/><stop offset=".3400" stop-color="#ffdfc4"/><stop offset=".3517" stop-color="#ffc4b0"/><stop offset=".3783" stop-color="#ff958e"/><stop offset=".4100" stop-color="#ff6f72"/><stop offset=".4467" stop-color="#ff515c"/><stop offset=".4917" stop-color="#ff3748"/><stop offset=".5467" stop-color="#ff2138"/><stop offset=".6117" stop-color="#ff0f2b"/><stop offset=".6925" stop-color="#ff0020"/><stop offset=".6925" stop-color="#ff0020"/><stop offset=".8267" stop-color="#ff0014"/><stop offset="1.0000" stop-color="#ff000a"/></linearGradient><linearGradient id="c43" href="#cb"><stop offset=".0133" stop-color="#00ff9e"/><stop offset=".1283" stop-color="#00ffaf"/><stop offset=".2242" stop-color="#00ffc3"/><stop offset=".2242" stop-color="#01ffc3"/><stop offset=".2533" stop-color="#3bffcb"/><stop offset=".2800" stop-color="#78ffd3"/><stop offset=".3050" stop-color="#baffdc"/><stop offset=".3283" stop-color="#ffffe5"/><stop offset=".3383" stop-color="#ffe2cf"/><stop offset=".3500" stop-color="#ffc6ba"/><stop offset=".3750" stop-color="#ff9997"/><stop offset=".4067" stop-color="#ff7279"/><stop offset=".4433" stop-color="#ff5261"/><stop offset=".4883" stop-color="#ff384d"/><stop offset=".5433" stop-color="#ff223c"/><stop offset=".6083" stop-color="#ff0f2e"/><stop offset=".6892" stop-color="#f02"/><stop offset=".6892" stop-color="#f02"/><stop offset=".8250" stop-color="#ff0015"/><stop offset="1.0000" stop-color="#ff000b"/></linearGradient><linearGradient id="c44" href="#cb"><stop offset=".0133" stop-color="#00ffa3"/><stop offset=".1283" stop-color="#00ffb5"/><stop offset=".2242" stop-color="#00ffca"/><stop offset=".2242" stop-color="#00ffca"/><stop offset=".2533" stop-color="#3affd3"/><stop offset=".2800" stop-color="#78ffdb"/><stop offset=".3033" stop-color="#b5ffe4"/><stop offset=".3283" stop-color="#fffeee"/><stop offset=".3383" stop-color="#ffe1d7"/><stop offset=".3500" stop-color="#ffc5c1"/><stop offset=".3750" stop-color="#ff989d"/><stop offset=".4067" stop-color="#ff717e"/><stop offset=".4433" stop-color="#ff5265"/><stop offset=".4883" stop-color="#ff3750"/><stop offset=".5417" stop-color="#ff213f"/><stop offset=".6067" stop-color="#ff0f30"/><stop offset=".6858" stop-color="#ff0024"/><stop offset=".6858" stop-color="#ff0024"/><stop offset=".8233" stop-color="#ff0017"/><stop offset=".9983" stop-color="#ff000d"/></linearGradient><linearGradient id="c45" href="#cb"><stop offset=".0150" stop-color="#00ffa8"/><stop offset=".1300" stop-color="#0fb"/><stop offset=".2258" stop-color="#00ffd2"/><stop offset=".2258" stop-color="#02ffd2"/><stop offset=".2533" stop-color="#39ffdb"/><stop offset=".2800" stop-color="#78ffe4"/><stop offset=".3017" stop-color="#b1ffed"/><stop offset=".3283" stop-color="#fffdf7"/><stop offset=".3383" stop-color="#ffe0df"/><stop offset=".3500" stop-color="#ffc4c8"/><stop offset=".3750" stop-color="#ff97a3"/><stop offset=".4050" stop-color="#ff7284"/><stop offset=".4417" stop-color="#ff526a"/><stop offset=".4867" stop-color="#ff3754"/><stop offset=".5400" stop-color="#ff2142"/><stop offset=".6050" stop-color="#ff0f33"/><stop offset=".6825" stop-color="#ff0026"/><stop offset=".6825" stop-color="#ff0026"/><stop offset=".8183" stop-color="#ff0018"/><stop offset=".9950" stop-color="#ff000e"/></linearGradient><linearGradient id="c46" href="#cb"><stop offset=".0167" stop-color="#00ffad"/><stop offset=".1300" stop-color="#00ffc1"/><stop offset=".2258" stop-color="#00ffd9"/><stop offset=".2258" stop-color="#01ffda"/><stop offset=".2517" stop-color="#35ffe2"/><stop offset=".2750" stop-color="#6bffeb"/><stop offset=".2983" stop-color="#a8fff5"/><stop offset=".3200" stop-color="#e7ffff"/><stop offset=".3283" stop-color="#fefbff"/><stop offset=".3300" stop-color="#fff7fc"/><stop offset=".3400" stop-color="#ffdbe4"/><stop offset=".3517" stop-color="#ffc0cc"/><stop offset=".3767" stop-color="#ff94a7"/><stop offset=".4067" stop-color="#ff6f87"/><stop offset=".4433" stop-color="#ff506d"/><stop offset=".4867" stop-color="#ff3657"/><stop offset=".5400" stop-color="#ff2144"/><stop offset=".6033" stop-color="#ff0f35"/><stop offset=".6792" stop-color="#ff0029"/><stop offset=".6792" stop-color="#ff0028"/><stop offset=".8150" stop-color="#ff001a"/><stop offset=".9917" stop-color="#ff000f"/></linearGradient><linearGradient id="c47" href="#cb"><stop offset=".0167" stop-color="#00ffb2"/><stop offset=".1300" stop-color="#00ffc7"/><stop offset=".2258" stop-color="#00ffe1"/><stop offset=".2258" stop-color="#00ffe2"/><stop offset=".2650" stop-color="#53fff0"/><stop offset=".3000" stop-color="#adffff"/><stop offset=".3317" stop-color="#fef0ff"/><stop offset=".3333" stop-color="#ffecfc"/><stop offset=".3550" stop-color="#ffb8cd"/><stop offset=".3800" stop-color="#ff8ea8"/><stop offset=".4100" stop-color="#ff6b89"/><stop offset=".4450" stop-color="#ff4e70"/><stop offset=".4883" stop-color="#ff3559"/><stop offset=".5400" stop-color="#ff2047"/><stop offset=".6017" stop-color="#ff0e38"/><stop offset=".6758" stop-color="#ff002b"/><stop offset=".6758" stop-color="#ff002b"/><stop offset=".8117" stop-color="#ff001c"/><stop offset=".9883" stop-color="#ff0010"/></linearGradient><linearGradient id="c48" href="#cb"><stop offset=".0183" stop-color="#00ffb8"/><stop offset=".1317" stop-color="#00ffce"/><stop offset=".2275" stop-color="#00ffe9"/><stop offset=".2275" stop-color="#02ffea"/><stop offset=".2550" stop-color="#3bfff4"/><stop offset=".2800" stop-color="#7ff"/><stop offset=".3350" stop-color="#fee5ff"/><stop offset=".3367" stop-color="#ffe2fc"/><stop offset=".3583" stop-color="#ffb0cf"/><stop offset=".3833" stop-color="#f8a"/><stop offset=".4133" stop-color="#ff668b"/><stop offset=".4483" stop-color="#ff4b71"/><stop offset=".4900" stop-color="#ff335c"/><stop offset=".5400" stop-color="#ff1f4a"/><stop offset=".6000" stop-color="#ff0e3a"/><stop offset=".6725" stop-color="#ff002d"/><stop offset=".6725" stop-color="#ff002d"/><stop offset=".8083" stop-color="#ff001d"/><stop offset=".9850" stop-color="#f01"/></linearGradient><linearGradient id="c49" href="#cb"><stop offset=".0200" stop-color="#00ffbd"/><stop offset=".1333" stop-color="#00ffd5"/><stop offset=".2275" stop-color="#00fff1"/><stop offset=".2275" stop-color="#01fff2"/><stop offset=".2617" stop-color="#4afeff"/><stop offset=".3000" stop-color="#a1edff"/><stop offset=".3383" stop-color="#fedbff"/><stop offset=".3400" stop-color="#ffd8fc"/><stop offset=".3600" stop-color="#ffacd3"/><stop offset=".3850" stop-color="#ff85ae"/><stop offset=".4150" stop-color="#ff648e"/><stop offset=".4500" stop-color="#ff4874"/><stop offset=".4917" stop-color="#ff315e"/><stop offset=".5400" stop-color="#ff1e4c"/><stop offset=".5983" stop-color="#ff0e3d"/><stop offset=".6692" stop-color="#ff0030"/><stop offset=".6692" stop-color="#ff002f"/><stop offset=".8050" stop-color="#ff001f"/><stop offset=".9817" stop-color="#ff0013"/></linearGradient><linearGradient id="c50" href="#cb"><stop offset=".0200" stop-color="#00ffc2"/><stop offset=".1333" stop-color="#00ffdb"/><stop offset=".2275" stop-color="#00fff9"/><stop offset=".2275" stop-color="#00fffa"/><stop offset=".2517" stop-color="#31faff"/><stop offset=".2967" stop-color="#94e6ff"/><stop offset=".3417" stop-color="#fed1ff"/><stop offset=".3433" stop-color="#ffcefc"/><stop offset=".3633" stop-color="#ffa5d3"/><stop offset=".3883" stop-color="#ff80af"/><stop offset=".4167" stop-color="#ff6191"/><stop offset=".4517" stop-color="#ff4777"/><stop offset=".4917" stop-color="#ff3162"/><stop offset=".5400" stop-color="#ff1e4f"/><stop offset=".6658" stop-color="#ff0032"/><stop offset=".6658" stop-color="#ff0032"/><stop offset=".8017" stop-color="#ff0021"/><stop offset=".9783" stop-color="#ff0014"/></linearGradient><linearGradient id="c51" href="#cb"><stop offset=".0217" stop-color="#00ffc8"/><stop offset=".1200" stop-color="#00ffde"/><stop offset=".2200" stop-color="#0ff"/><stop offset=".2292" stop-color="#00fcff"/><stop offset=".2292" stop-color="#02fbff"/><stop offset=".2817" stop-color="#6ee5ff"/><stop offset=".3450" stop-color="#fec8ff"/><stop offset=".3467" stop-color="#ffc5fc"/><stop offset=".3667" stop-color="#ff9ed4"/><stop offset=".3917" stop-color="#ff7ab0"/><stop offset=".4200" stop-color="#ff5d93"/><stop offset=".4550" stop-color="#ff4379"/><stop offset=".4950" stop-color="#ff2e63"/><stop offset=".5417" stop-color="#ff1c51"/><stop offset=".6625" stop-color="#ff0035"/><stop offset=".6625" stop-color="#ff0034"/><stop offset=".7983" stop-color="#ff0023"/><stop offset=".9750" stop-color="#ff0015"/></linearGradient><linearGradient id="c52" href="#cb"><stop offset=".0233" stop-color="#00ffcd"/><stop offset=".1183" stop-color="#00ffe4"/><stop offset=".2000" stop-color="#0ff"/><stop offset=".2292" stop-color="#00f4ff"/><stop offset=".2292" stop-color="#01f3ff"/><stop offset=".2833" stop-color="#6eddff"/><stop offset=".3483" stop-color="#febfff"/><stop offset=".3500" stop-color="#ffbdfc"/><stop offset=".3700" stop-color="#ff97d5"/><stop offset=".3950" stop-color="#ff75b2"/><stop offset=".4233" stop-color="#ff5995"/><stop offset=".4567" stop-color="#ff427c"/><stop offset=".4950" stop-color="#ff2d66"/><stop offset=".5417" stop-color="#ff1c54"/><stop offset=".6592" stop-color="#ff0037"/><stop offset=".6592" stop-color="#ff0037"/><stop offset=".7950" stop-color="#ff0024"/><stop offset=".9717" stop-color="#ff0016"/></linearGradient><linearGradient id="c53" href="#cb"><stop offset=".0233" stop-color="#00ffd3"/><stop offset=".1067" stop-color="#00ffe7"/><stop offset=".1800" stop-color="#0ff"/><stop offset=".2292" stop-color="#00ecff"/><stop offset=".2292" stop-color="#00ecff"/><stop offset=".2850" stop-color="#6ed5ff"/><stop offset=".3517" stop-color="#feb7ff"/><stop offset=".3533" stop-color="#ffb4fc"/><stop offset=".3733" stop-color="#ff91d6"/><stop offset=".3983" stop-color="#ff71b3"/><stop offset=".4267" stop-color="#ff5696"/><stop offset=".4583" stop-color="#ff407e"/><stop offset=".4967" stop-color="#ff2c69"/><stop offset=".5417" stop-color="#ff1b57"/><stop offset=".6558" stop-color="#ff003a"/><stop offset=".6558" stop-color="#ff0039"/><stop offset=".7917" stop-color="#ff0026"/><stop offset=".9683" stop-color="#ff0018"/></linearGradient><linearGradient id="c54" href="#cb"><stop offset=".0250" stop-color="#00ffd9"/><stop offset=".1600" stop-color="#0ff"/><stop offset=".2308" stop-color="#00e5ff"/><stop offset=".2308" stop-color="#02e4ff"/><stop offset=".2883" stop-color="#71cdff"/><stop offset=".3567" stop-color="#ffacfd"/><stop offset=".3767" stop-color="#ff8bd7"/><stop offset=".4017" stop-color="#ff6cb4"/><stop offset=".4300" stop-color="#ff5298"/><stop offset=".4617" stop-color="#ff3d80"/><stop offset=".5000" stop-color="#ff2a6a"/><stop offset=".5433" stop-color="#ff1a59"/><stop offset=".6525" stop-color="#ff003c"/><stop offset=".6525" stop-color="#ff003c"/><stop offset=".7883" stop-color="#ff0028"/><stop offset=".9650" stop-color="#ff0019"/></linearGradient><linearGradient id="c55" href="#cb"><stop offset=".0267" stop-color="#00ffdf"/><stop offset=".1400" stop-color="#0ff"/><stop offset=".2308" stop-color="#00deff"/><stop offset=".2308" stop-color="#01ddff"/><stop offset=".2900" stop-color="#70c5ff"/><stop offset=".3600" stop-color="#ffa5fd"/><stop offset=".3800" stop-color="#ff85d8"/><stop offset=".4033" stop-color="#ff69b8"/><stop offset=".4317" stop-color="#ff509a"/><stop offset=".4633" stop-color="#ff3b82"/><stop offset=".5000" stop-color="#ff296e"/><stop offset=".5417" stop-color="#ff1a5c"/><stop offset=".6492" stop-color="#ff003f"/><stop offset=".6492" stop-color="#ff003e"/><stop offset=".7850" stop-color="#ff002a"/><stop offset=".9617" stop-color="#ff001a"/></linearGradient><linearGradient id="c56" href="#cb"><stop offset=".0267" stop-color="#00ffe4"/><stop offset=".1200" stop-color="#0ff"/><stop offset=".2308" stop-color="#00d7ff"/><stop offset=".2308" stop-color="#00d7ff"/><stop offset=".2917" stop-color="#70bfff"/><stop offset=".3633" stop-color="#ff9efd"/><stop offset=".3833" stop-color="#ff7fd8"/><stop offset=".4067" stop-color="#ff65b9"/><stop offset=".4333" stop-color="#ff4e9d"/><stop offset=".4650" stop-color="#ff3985"/><stop offset=".5000" stop-color="#ff2871"/><stop offset=".5417" stop-color="#ff195f"/><stop offset=".6458" stop-color="#ff0041"/><stop offset=".6458" stop-color="#ff0041"/><stop offset=".7800" stop-color="#ff002c"/><stop offset=".9583" stop-color="#ff001c"/></linearGradient><linearGradient id="c57" href="#cb"><stop offset=".0283" stop-color="#00ffea"/><stop offset=".1000" stop-color="#0ff"/><stop offset=".2325" stop-color="#00d0ff"/><stop offset=".2325" stop-color="#02d0ff"/><stop offset=".2950" stop-color="#73b7ff"/><stop offset=".3667" stop-color="#ff97fd"/><stop offset=".3867" stop-color="#ff7ad9"/><stop offset=".4100" stop-color="#ff60ba"/><stop offset=".4367" stop-color="#ff4a9f"/><stop offset=".4667" stop-color="#ff3788"/><stop offset=".5017" stop-color="#ff2773"/><stop offset=".5417" stop-color="#ff1861"/><stop offset=".6425" stop-color="#f04"/><stop offset=".6425" stop-color="#f04"/><stop offset=".7767" stop-color="#ff002e"/><stop offset=".9550" stop-color="#ff001d"/></linearGradient><linearGradient id="c58" href="#cb"><stop offset=".0300" stop-color="#00fff0"/><stop offset=".0800" stop-color="#0ff"/><stop offset=".2325" stop-color="#00caff"/><stop offset=".2325" stop-color="#01caff"/><stop offset=".2967" stop-color="#73b1ff"/><stop offset=".3700" stop-color="#ff90fd"/><stop offset=".3900" stop-color="#ff75da"/><stop offset=".4133" stop-color="#ff5cbb"/><stop offset=".4383" stop-color="#ff48a2"/><stop offset=".4683" stop-color="#ff358a"/><stop offset=".5033" stop-color="#ff2575"/><stop offset=".5417" stop-color="#ff1764"/><stop offset=".6392" stop-color="#ff0047"/><stop offset=".6392" stop-color="#ff0047"/><stop offset=".7733" stop-color="#ff0030"/><stop offset=".9517" stop-color="#ff001e"/></linearGradient><linearGradient id="c59" href="#cb"><stop offset=".0317" stop-color="#00fff7"/><stop offset=".0600" stop-color="#0ff"/><stop offset=".2325" stop-color="#00c5ff"/><stop offset=".2325" stop-color="#00c4ff"/><stop offset=".2983" stop-color="#72abff"/><stop offset=".3733" stop-color="#ff8afd"/><stop offset=".3933" stop-color="#ff70db"/><stop offset=".4150" stop-color="#ff5abe"/><stop offset=".4400" stop-color="#ff46a4"/><stop offset=".4700" stop-color="#ff348d"/><stop offset=".5417" stop-color="#ff1767"/><stop offset=".6358" stop-color="#ff004a"/><stop offset=".6358" stop-color="#ff0049"/><stop offset=".7700" stop-color="#ff0032"/><stop offset=".9483" stop-color="#ff0020"/></linearGradient><linearGradient id="c60" href="#cb"><stop offset=".0317" stop-color="#00fffd"/><stop offset=".1017" stop-color="#00ecff"/><stop offset=".2342" stop-color="#00beff"/><stop offset=".2342" stop-color="#02beff"/><stop offset=".3000" stop-color="#72a5ff"/><stop offset=".3767" stop-color="#ff84fd"/><stop offset=".3967" stop-color="#ff6bdb"/><stop offset=".4183" stop-color="#ff56bf"/><stop offset=".4433" stop-color="#ff43a6"/><stop offset=".4717" stop-color="#ff328f"/><stop offset=".5417" stop-color="#ff166a"/><stop offset=".6325" stop-color="#ff004d"/><stop offset=".6325" stop-color="#ff004c"/><stop offset=".7667" stop-color="#ff0034"/><stop offset=".9467" stop-color="#ff0021"/></linearGradient><linearGradient id="c61" href="#cb"><stop offset=".0333" stop-color="#00fbff"/><stop offset=".2342" stop-color="#00b9ff"/><stop offset=".2342" stop-color="#01b9ff"/><stop offset=".3017" stop-color="#729fff"/><stop offset=".3800" stop-color="#ff7efd"/><stop offset=".4000" stop-color="#ff66dc"/><stop offset=".4217" stop-color="#ff52c0"/><stop offset=".4467" stop-color="#ff3fa7"/><stop offset=".4733" stop-color="#ff3092"/><stop offset=".5417" stop-color="#ff156c"/><stop offset=".6292" stop-color="#ff0050"/><stop offset=".6292" stop-color="#ff004f"/><stop offset=".7633" stop-color="#ff0036"/><stop offset=".9433" stop-color="#f02"/></linearGradient><linearGradient id="c62" href="#cb"><stop offset=".0350" stop-color="#00f5ff"/><stop offset=".2342" stop-color="#00b4ff"/><stop offset=".2342" stop-color="#00b4ff"/><stop offset=".3050" stop-color="#7499ff"/><stop offset=".3833" stop-color="#ff78fd"/><stop offset=".4017" stop-color="#ff63df"/><stop offset=".4233" stop-color="#ff4fc3"/><stop offset=".4483" stop-color="#ff3da9"/><stop offset=".4750" stop-color="#ff2e94"/><stop offset=".5417" stop-color="#ff146f"/><stop offset=".6258" stop-color="#ff0053"/><stop offset=".6258" stop-color="#ff0052"/><stop offset=".7600" stop-color="#ff0038"/><stop offset=".9400" stop-color="#ff0024"/></linearGradient><linearGradient id="c63" href="#cb"><stop offset=".0367" stop-color="#00efff"/><stop offset=".2358" stop-color="#00afff"/><stop offset=".2358" stop-color="#02aeff"/><stop offset=".3067" stop-color="#7494ff"/><stop offset=".3867" stop-color="#ff73fd"/><stop offset=".4050" stop-color="#ff5fdf"/><stop offset=".4267" stop-color="#ff4cc4"/><stop offset=".4500" stop-color="#ff3bac"/><stop offset=".4767" stop-color="#ff2d97"/><stop offset=".5400" stop-color="#ff1473"/><stop offset=".6225" stop-color="#ff0056"/><stop offset=".6225" stop-color="#f05"/><stop offset=".7567" stop-color="#ff003a"/><stop offset=".9367" stop-color="#ff0025"/></linearGradient><linearGradient id="c64" href="#cb"><stop offset=".0367" stop-color="#00e9ff"/><stop offset=".2358" stop-color="#0af"/><stop offset=".2358" stop-color="#01a9ff"/><stop offset=".3083" stop-color="#738fff"/><stop offset=".3900" stop-color="#ff6efd"/><stop offset=".4083" stop-color="#ff5ae0"/><stop offset=".4300" stop-color="#ff48c5"/><stop offset=".4783" stop-color="#ff2b99"/><stop offset=".5400" stop-color="#ff1375"/><stop offset=".6192" stop-color="#ff0059"/><stop offset=".6192" stop-color="#ff0058"/><stop offset=".7533" stop-color="#ff003c"/><stop offset=".9333" stop-color="#ff0027"/></linearGradient><linearGradient id="c65" href="#cb"><stop offset=".0383" stop-color="#00e4ff"/><stop offset=".2358" stop-color="#00a5ff"/><stop offset=".2358" stop-color="#00a5ff"/><stop offset=".3100" stop-color="#738aff"/><stop offset=".3933" stop-color="#ff69fd"/><stop offset=".4117" stop-color="#ff56e1"/><stop offset=".4317" stop-color="#ff46c7"/><stop offset=".4800" stop-color="#ff299b"/><stop offset=".5400" stop-color="#ff1378"/><stop offset=".6175" stop-color="#ff005c"/><stop offset=".6175" stop-color="#ff005b"/><stop offset=".7517" stop-color="#ff003e"/><stop offset=".9300" stop-color="#ff0028"/></linearGradient><linearGradient id="c66" href="#cb"><stop offset=".0400" stop-color="#00deff"/><stop offset=".2375" stop-color="#00a1ff"/><stop offset=".2375" stop-color="#02a0ff"/><stop offset=".3133" stop-color="#7585ff"/><stop offset=".3967" stop-color="#ff64fd"/><stop offset=".4150" stop-color="#ff52e1"/><stop offset=".4350" stop-color="#ff42c8"/><stop offset=".4817" stop-color="#ff289e"/><stop offset=".5400" stop-color="#ff127b"/><stop offset=".6142" stop-color="#ff005f"/><stop offset=".6142" stop-color="#ff005e"/><stop offset=".7483" stop-color="#ff0040"/><stop offset=".9267" stop-color="#ff002a"/></linearGradient><linearGradient id="c67" href="#cb"><stop offset=".0417" stop-color="#00d9ff"/><stop offset=".2375" stop-color="#009cff"/><stop offset=".2375" stop-color="#019cff"/><stop offset=".3150" stop-color="#7581ff"/><stop offset=".4000" stop-color="#ff5ffd"/><stop offset=".4167" stop-color="#ff4fe4"/><stop offset=".4367" stop-color="#ff40cb"/><stop offset=".4833" stop-color="#ff26a0"/><stop offset=".5400" stop-color="#ff117e"/><stop offset=".6108" stop-color="#ff0062"/><stop offset=".6108" stop-color="#ff0062"/><stop offset=".7433" stop-color="#ff0042"/><stop offset=".9233" stop-color="#ff002b"/></linearGradient><linearGradient id="c68" href="#cb"><stop offset=".0433" stop-color="#00d4ff"/><stop offset=".2375" stop-color="#0098ff"/><stop offset=".2375" stop-color="#0198ff"/><stop offset=".3167" stop-color="#757cff"/><stop offset=".4033" stop-color="#ff5bfe"/><stop offset=".4400" stop-color="#ff3dcc"/><stop offset=".4850" stop-color="#ff24a2"/><stop offset=".5400" stop-color="#ff1081"/><stop offset=".6075" stop-color="#ff0065"/><stop offset=".6075" stop-color="#ff0065"/><stop offset=".7400" stop-color="#ff0045"/><stop offset=".9200" stop-color="#ff002d"/></linearGradient><linearGradient id="c69" href="#cb"><stop offset=".0450" stop-color="#00cfff"/><stop offset=".2392" stop-color="#0094ff"/><stop offset=".2392" stop-color="#0293ff"/><stop offset=".3200" stop-color="#77f"/><stop offset=".4067" stop-color="#ff56fe"/><stop offset=".4433" stop-color="#ff3acc"/><stop offset=".4867" stop-color="#ff23a5"/><stop offset=".5400" stop-color="#ff1084"/><stop offset=".6042" stop-color="#ff0069"/><stop offset=".6042" stop-color="#ff0068"/><stop offset=".6650" stop-color="#ff0057"/><stop offset=".7367" stop-color="#ff0047"/><stop offset=".9167" stop-color="#ff002e"/></linearGradient><linearGradient id="c70" href="#cb"><stop offset=".0450" stop-color="#00caff"/><stop offset=".2392" stop-color="#0090ff"/><stop offset=".2392" stop-color="#018fff"/><stop offset=".3217" stop-color="#7773ff"/><stop offset=".4100" stop-color="#ff52fe"/><stop offset=".4450" stop-color="#ff38cf"/><stop offset=".4867" stop-color="#ff22a8"/><stop offset=".5383" stop-color="#ff0f87"/><stop offset=".6008" stop-color="#ff006c"/><stop offset=".6008" stop-color="#ff006c"/><stop offset=".6617" stop-color="#ff0059"/><stop offset=".7333" stop-color="#ff0049"/><stop offset=".9133" stop-color="#ff0030"/></linearGradient><linearGradient id="c71" href="#cb"><stop offset=".0467" stop-color="#00c6ff"/><stop offset=".2392" stop-color="#008cff"/><stop offset=".2392" stop-color="#018cff"/><stop offset=".3233" stop-color="#766fff"/><stop offset=".4133" stop-color="#ff4efe"/><stop offset=".4467" stop-color="#ff35d1"/><stop offset=".4883" stop-color="#ff20ab"/><stop offset=".5383" stop-color="#ff0e8a"/><stop offset=".5975" stop-color="#ff0070"/><stop offset=".5975" stop-color="#ff006f"/><stop offset=".6583" stop-color="#ff005c"/><stop offset=".7300" stop-color="#ff004c"/><stop offset=".9100" stop-color="#ff0031"/></linearGradient><linearGradient id="c72" href="#cb"><stop offset=".0483" stop-color="#00c1ff"/><stop offset=".2408" stop-color="#08f"/><stop offset=".2408" stop-color="#0288ff"/><stop offset=".3250" stop-color="#766cff"/><stop offset=".4167" stop-color="#ff4afe"/><stop offset=".4500" stop-color="#ff32d2"/><stop offset=".4900" stop-color="#ff1fad"/><stop offset=".5367" stop-color="#ff0e8e"/><stop offset=".5942" stop-color="#ff0074"/><stop offset=".5942" stop-color="#ff0073"/><stop offset=".6550" stop-color="#ff005f"/><stop offset=".7267" stop-color="#ff004e"/><stop offset=".9067" stop-color="#f03"/></linearGradient><linearGradient id="c73" href="#cb"><stop offset=".0500" stop-color="#00bdff"/><stop offset=".2408" stop-color="#0085ff"/><stop offset=".2408" stop-color="#0184ff"/><stop offset=".3283" stop-color="#7867ff"/><stop offset=".4200" stop-color="#ff46fe"/><stop offset=".4533" stop-color="#ff2fd3"/><stop offset=".4917" stop-color="#ff1daf"/><stop offset=".5367" stop-color="#ff0d91"/><stop offset=".5908" stop-color="#f07"/><stop offset=".5908" stop-color="#f07"/><stop offset=".6517" stop-color="#ff0062"/><stop offset=".7233" stop-color="#ff0050"/><stop offset=".9033" stop-color="#ff0034"/></linearGradient><linearGradient id="c74" href="#cb"><stop offset=".0517" stop-color="#00b8ff"/><stop offset=".2408" stop-color="#0082ff"/><stop offset=".2408" stop-color="#0181ff"/><stop offset=".3300" stop-color="#7864ff"/><stop offset=".4233" stop-color="#ff42fe"/><stop offset=".4550" stop-color="#ff2ed5"/><stop offset=".4917" stop-color="#ff1cb3"/><stop offset=".5350" stop-color="#ff0d95"/><stop offset=".5875" stop-color="#ff007b"/><stop offset=".5875" stop-color="#ff007b"/><stop offset=".6483" stop-color="#ff0065"/><stop offset=".7200" stop-color="#ff0053"/><stop offset=".9000" stop-color="#ff0036"/></linearGradient><linearGradient id="c75" href="#cb"><stop offset=".0533" stop-color="#00b4ff"/><stop offset=".2425" stop-color="#007eff"/><stop offset=".2425" stop-color="#027dff"/><stop offset=".3317" stop-color="#7761ff"/><stop offset=".4267" stop-color="#ff3ffe"/><stop offset=".4567" stop-color="#ff2cd7"/><stop offset=".4933" stop-color="#ff1bb5"/><stop offset=".5350" stop-color="#ff0c98"/><stop offset=".5842" stop-color="#ff007f"/><stop offset=".5842" stop-color="#ff007f"/><stop offset=".6450" stop-color="#ff0068"/><stop offset=".7167" stop-color="#f05"/><stop offset=".8967" stop-color="#ff0038"/></linearGradient><linearGradient id="c76" href="#cb"><stop offset=".0533" stop-color="#00b1ff"/><stop offset=".2425" stop-color="#007bff"/><stop offset=".2425" stop-color="#017aff"/><stop offset=".3333" stop-color="#775dff"/><stop offset=".4300" stop-color="#ff3bfe"/><stop offset=".4600" stop-color="#ff29d8"/><stop offset=".4933" stop-color="#ff1ab8"/><stop offset=".5333" stop-color="#ff0c9c"/><stop offset=".5808" stop-color="#ff0083"/><stop offset=".5808" stop-color="#ff0083"/><stop offset=".6417" stop-color="#ff006c"/><stop offset=".7117" stop-color="#ff0058"/><stop offset=".7950" stop-color="#ff0048"/><stop offset=".8933" stop-color="#ff0039"/></linearGradient><linearGradient id="c77" href="#cb"><stop offset=".0550" stop-color="#00adff"/><stop offset=".2425" stop-color="#0078ff"/><stop offset=".2425" stop-color="#0177ff"/><stop offset=".3350" stop-color="#775aff"/><stop offset=".4333" stop-color="#ff38fe"/><stop offset=".4617" stop-color="#ff27da"/><stop offset=".4950" stop-color="#ff18ba"/><stop offset=".5333" stop-color="#ff0b9f"/><stop offset=".5775" stop-color="#ff0087"/><stop offset=".5775" stop-color="#ff0087"/><stop offset=".6383" stop-color="#ff006f"/><stop offset=".7083" stop-color="#ff005b"/><stop offset=".7917" stop-color="#ff004a"/><stop offset=".8900" stop-color="#ff003b"/></linearGradient><linearGradient id="c78" href="#cb"><stop offset=".0567" stop-color="#00a9ff"/><stop offset=".2442" stop-color="#0074ff"/><stop offset=".2442" stop-color="#0274ff"/><stop offset=".3383" stop-color="#7856ff"/><stop offset=".4367" stop-color="#ff34fe"/><stop offset=".4650" stop-color="#ff24db"/><stop offset=".4967" stop-color="#ff17bd"/><stop offset=".5317" stop-color="#ff0ba3"/><stop offset=".5742" stop-color="#ff008c"/><stop offset=".5742" stop-color="#ff008b"/><stop offset=".6350" stop-color="#ff0072"/><stop offset=".7067" stop-color="#ff005d"/><stop offset=".7900" stop-color="#ff004b"/><stop offset=".8883" stop-color="#ff003d"/></linearGradient><linearGradient id="c79" href="#cb"><stop offset=".0583" stop-color="#00a5ff"/><stop offset=".2442" stop-color="#0071ff"/><stop offset=".2442" stop-color="#0171ff"/><stop offset=".3400" stop-color="#7853ff"/><stop offset=".4400" stop-color="#ff31fe"/><stop offset=".4667" stop-color="#f2d"/><stop offset=".4967" stop-color="#ff16c0"/><stop offset=".5317" stop-color="#ff0aa6"/><stop offset=".5708" stop-color="#ff0090"/><stop offset=".5708" stop-color="#ff008f"/><stop offset=".6317" stop-color="#ff0076"/><stop offset=".7017" stop-color="#ff0060"/><stop offset=".7850" stop-color="#ff004e"/><stop offset=".8850" stop-color="#ff003e"/></linearGradient><linearGradient id="c80" href="#cb"><stop offset=".0600" stop-color="#00a1ff"/><stop offset=".2442" stop-color="#006fff"/><stop offset=".2442" stop-color="#016eff"/><stop offset=".3417" stop-color="#7850ff"/><stop offset=".4433" stop-color="#ff2efe"/><stop offset=".4683" stop-color="#ff21df"/><stop offset=".4983" stop-color="#ff14c2"/><stop offset=".5300" stop-color="#ff0aaa"/><stop offset=".5675" stop-color="#ff0094"/><stop offset=".5675" stop-color="#ff0093"/><stop offset=".6283" stop-color="#ff0079"/><stop offset=".6983" stop-color="#ff0063"/><stop offset=".7817" stop-color="#ff0050"/><stop offset=".8817" stop-color="#ff0040"/></linearGradient><linearGradient id="c81" href="#cb"><stop offset=".0617" stop-color="#009eff"/><stop offset=".2442" stop-color="#006cff"/><stop offset=".2442" stop-color="#006cff"/><stop offset=".3433" stop-color="#774dff"/><stop offset=".4467" stop-color="#ff2bfe"/><stop offset=".4717" stop-color="#ff1ee0"/><stop offset=".4983" stop-color="#ff13c6"/><stop offset=".5283" stop-color="#ff09ae"/><stop offset=".5642" stop-color="#f09"/><stop offset=".5642" stop-color="#ff0098"/><stop offset=".6250" stop-color="#ff007c"/><stop offset=".6950" stop-color="#f06"/><stop offset=".7783" stop-color="#ff0052"/><stop offset=".8783" stop-color="#ff0042"/></linearGradient><linearGradient id="c82" href="#cb"><stop offset=".0633" stop-color="#009aff"/><stop offset=".2458" stop-color="#0069ff"/><stop offset=".2458" stop-color="#0168ff"/><stop offset=".3467" stop-color="#794aff"/><stop offset=".4500" stop-color="#ff28fe"/><stop offset=".4733" stop-color="#ff1ce2"/><stop offset=".4983" stop-color="#ff12c9"/><stop offset=".5608" stop-color="#ff009e"/><stop offset=".5608" stop-color="#ff009d"/><stop offset=".6217" stop-color="#ff0080"/><stop offset=".6917" stop-color="#ff0068"/><stop offset=".7750" stop-color="#f05"/><stop offset=".8750" stop-color="#f04"/></linearGradient><linearGradient id="c83" href="#cb"><stop offset=".0650" stop-color="#0097ff"/><stop offset=".2458" stop-color="#06f"/><stop offset=".2458" stop-color="#0166ff"/><stop offset=".3483" stop-color="#7947ff"/><stop offset=".4533" stop-color="#ff25fe"/><stop offset=".4750" stop-color="#ff1be4"/><stop offset=".5000" stop-color="#ff11cb"/><stop offset=".5575" stop-color="#ff00a2"/><stop offset=".5575" stop-color="#ff00a1"/><stop offset=".6183" stop-color="#ff0084"/><stop offset=".6883" stop-color="#ff006b"/><stop offset=".7717" stop-color="#ff0057"/><stop offset=".8717" stop-color="#ff0045"/></linearGradient><linearGradient id="c84" href="#cb"><stop offset=".0667" stop-color="#0094ff"/><stop offset=".2458" stop-color="#0064ff"/><stop offset=".2458" stop-color="#0064ff"/><stop offset=".3500" stop-color="#7945ff"/><stop offset=".4567" stop-color="#ff22fe"/><stop offset=".5000" stop-color="#ff10cf"/><stop offset=".5542" stop-color="#ff00a7"/><stop offset=".5542" stop-color="#ff00a6"/><stop offset=".6150" stop-color="#ff0087"/><stop offset=".6850" stop-color="#ff006e"/><stop offset=".7683" stop-color="#ff0059"/><stop offset=".8683" stop-color="#ff0047"/></linearGradient><linearGradient id="c85" href="#cb"><stop offset=".0667" stop-color="#0091ff"/><stop offset=".2475" stop-color="#0061ff"/><stop offset=".2475" stop-color="#0161ff"/><stop offset=".3533" stop-color="#7a42ff"/><stop offset=".4600" stop-color="#ff20fe"/><stop offset=".5017" stop-color="#ff0ed1"/><stop offset=".5508" stop-color="#ff00ac"/><stop offset=".5508" stop-color="#ff00ab"/><stop offset=".6117" stop-color="#ff008b"/><stop offset=".6817" stop-color="#ff0071"/><stop offset=".7650" stop-color="#ff005b"/><stop offset=".8650" stop-color="#ff0049"/></linearGradient><linearGradient id="c86" href="#cb"><stop offset=".0683" stop-color="#008eff"/><stop offset=".2475" stop-color="#005fff"/><stop offset=".2475" stop-color="#015eff"/><stop offset=".3550" stop-color="#7a3fff"/><stop offset=".4633" stop-color="#ff1dfe"/><stop offset=".5017" stop-color="#ff0dd5"/><stop offset=".5475" stop-color="#ff00b1"/><stop offset=".5475" stop-color="#ff00b0"/><stop offset=".6067" stop-color="#ff0090"/><stop offset=".6767" stop-color="#ff0075"/><stop offset=".7617" stop-color="#ff005e"/><stop offset=".8617" stop-color="#ff004b"/></linearGradient><linearGradient id="c87" href="#cb"><stop offset=".0700" stop-color="#008aff"/><stop offset=".2475" stop-color="#005dff"/><stop offset=".2475" stop-color="#005cff"/><stop offset=".3567" stop-color="#7a3dff"/><stop offset=".4667" stop-color="#ff1afe"/><stop offset=".5017" stop-color="#ff0dd8"/><stop offset=".5442" stop-color="#ff00b7"/><stop offset=".5442" stop-color="#ff00b5"/><stop offset=".6033" stop-color="#ff0094"/><stop offset=".6733" stop-color="#ff0078"/><stop offset=".7583" stop-color="#ff0060"/><stop offset=".8583" stop-color="#ff004d"/></linearGradient><linearGradient id="c88" href="#cb"><stop offset=".0717" stop-color="#0087ff"/><stop offset=".2492" stop-color="#005aff"/><stop offset=".2492" stop-color="#0159ff"/><stop offset=".3583" stop-color="#793bff"/><stop offset=".4700" stop-color="#ff18fe"/><stop offset=".5033" stop-color="#ff0bda"/><stop offset=".5408" stop-color="#ff00bc"/><stop offset=".5408" stop-color="#f0b"/><stop offset=".6000" stop-color="#ff0098"/><stop offset=".6700" stop-color="#ff007b"/><stop offset=".7533" stop-color="#ff0063"/><stop offset=".8550" stop-color="#ff004f"/></linearGradient><linearGradient id="c89" href="#cb"><stop offset=".0733" stop-color="#0084ff"/><stop offset=".2492" stop-color="#0058ff"/><stop offset=".2492" stop-color="#0157ff"/><stop offset=".3617" stop-color="#7b38ff"/><stop offset=".4733" stop-color="#ff15fe"/><stop offset=".5033" stop-color="#ff0ade"/><stop offset=".5375" stop-color="#ff00c1"/><stop offset=".5375" stop-color="#ff00c0"/><stop offset=".5967" stop-color="#ff009c"/><stop offset=".6667" stop-color="#ff007e"/><stop offset=".7500" stop-color="#f06"/><stop offset=".8517" stop-color="#ff0051"/></linearGradient><linearGradient id="c90" href="#cb"><stop offset=".0750" stop-color="#0082ff"/><stop offset=".2492" stop-color="#0056ff"/><stop offset=".2492" stop-color="#05f"/><stop offset=".3650" stop-color="#7c35ff"/><stop offset=".4750" stop-color="#fe13ff"/><stop offset=".5067" stop-color="#ff08de"/><stop offset=".5342" stop-color="#ff00c7"/><stop offset=".5342" stop-color="#ff00c6"/><stop offset=".5933" stop-color="#ff00a0"/><stop offset=".6633" stop-color="#ff0082"/><stop offset=".7467" stop-color="#ff0068"/><stop offset=".8483" stop-color="#ff0053"/></linearGradient><linearGradient id="c91" href="#cb"><stop offset=".0767" stop-color="#007fff"/><stop offset=".2508" stop-color="#0053ff"/><stop offset=".2508" stop-color="#0153ff"/><stop offset=".3667" stop-color="#7c33ff"/><stop offset=".4783" stop-color="#fe11ff"/><stop offset=".5325" stop-color="#f0c"/><stop offset=".5325" stop-color="#ff00ca"/><stop offset=".5900" stop-color="#ff00a5"/><stop offset=".6600" stop-color="#ff0085"/><stop offset=".7433" stop-color="#ff006b"/><stop offset=".8450" stop-color="#f05"/></linearGradient><linearGradient id="c92" href="#cb"><stop offset=".0783" stop-color="#007cff"/><stop offset=".2508" stop-color="#0051ff"/><stop offset=".2508" stop-color="#0151ff"/><stop offset=".3683" stop-color="#7c31ff"/><stop offset=".4817" stop-color="#fd0fff"/><stop offset=".5292" stop-color="#ff00d2"/><stop offset=".5292" stop-color="#ff00d0"/><stop offset=".5867" stop-color="#ff00a9"/><stop offset=".6567" stop-color="#f08"/><stop offset=".7400" stop-color="#ff006d"/><stop offset=".8417" stop-color="#ff0057"/></linearGradient><linearGradient id="c93" href="#cb"><stop offset=".0800" stop-color="#0079ff"/><stop offset=".2508" stop-color="#004fff"/><stop offset=".2508" stop-color="#004fff"/><stop offset=".3700" stop-color="#7b2fff"/><stop offset=".4850" stop-color="#fd0dff"/><stop offset=".5258" stop-color="#ff00d8"/><stop offset=".5258" stop-color="#ff00d6"/><stop offset=".5833" stop-color="#ff00ae"/><stop offset=".6533" stop-color="#ff008c"/><stop offset=".7367" stop-color="#ff0070"/><stop offset=".8383" stop-color="#ff0059"/></linearGradient><linearGradient id="c94" href="#cb"><stop offset=".0817" stop-color="#07f"/><stop offset=".2525" stop-color="#004dff"/><stop offset=".2525" stop-color="#014dff"/><stop offset=".3733" stop-color="#7d2cff"/><stop offset=".4883" stop-color="#fd0aff"/><stop offset=".5225" stop-color="#ff00de"/><stop offset=".5225" stop-color="#f0d"/><stop offset=".5800" stop-color="#ff00b3"/><stop offset=".6500" stop-color="#ff008f"/><stop offset=".7333" stop-color="#ff0073"/><stop offset=".8350" stop-color="#ff005b"/></linearGradient><linearGradient id="c95" href="#cb"><stop offset=".0833" stop-color="#0074ff"/><stop offset=".2525" stop-color="#004bff"/><stop offset=".2525" stop-color="#014bff"/><stop offset=".3750" stop-color="#7d2aff"/><stop offset=".4917" stop-color="#fd08ff"/><stop offset=".5192" stop-color="#ff00e5"/><stop offset=".5192" stop-color="#ff00e3"/><stop offset=".5767" stop-color="#ff00b7"/><stop offset=".6467" stop-color="#ff0093"/><stop offset=".7300" stop-color="#ff0075"/><stop offset=".8317" stop-color="#ff005d"/></linearGradient><linearGradient id="c96" href="#cb"><stop offset=".0850" stop-color="#0071ff"/><stop offset=".2525" stop-color="#0049ff"/><stop offset=".2525" stop-color="#0049ff"/><stop offset=".3767" stop-color="#7c28ff"/><stop offset=".4950" stop-color="#fd06ff"/><stop offset=".5158" stop-color="#ff00eb"/><stop offset=".5158" stop-color="#ff00ea"/><stop offset=".5733" stop-color="#ff00bc"/><stop offset=".6433" stop-color="#ff0097"/><stop offset=".7283" stop-color="#ff0078"/><stop offset=".8300" stop-color="#ff005f"/></linearGradient><linearGradient id="c97" href="#cb"><stop offset=".0867" stop-color="#006fff"/><stop offset=".2542" stop-color="#0047ff"/><stop offset=".2542" stop-color="#0147ff"/><stop offset=".3800" stop-color="#7e26ff"/><stop offset=".4983" stop-color="#fd04ff"/><stop offset=".5125" stop-color="#ff00f2"/><stop offset=".5125" stop-color="#ff00f0"/><stop offset=".5700" stop-color="#ff00c1"/><stop offset=".6400" stop-color="#ff009a"/><stop offset=".7250" stop-color="#ff007a"/><stop offset=".8267" stop-color="#ff0061"/></linearGradient><linearGradient id="c98" href="#cb"><stop offset=".0883" stop-color="#006dff"/><stop offset=".2542" stop-color="#0045ff"/><stop offset=".2542" stop-color="#0145ff"/><stop offset=".3817" stop-color="#7d24ff"/><stop offset=".5017" stop-color="#fd02ff"/><stop offset=".5092" stop-color="#ff00f9"/><stop offset=".5092" stop-color="#ff00f7"/><stop offset=".5667" stop-color="#ff00c7"/><stop offset=".6350" stop-color="#ff009f"/><stop offset=".7200" stop-color="#ff007e"/><stop offset=".8233" stop-color="#ff0063"/></linearGradient><linearGradient id="c99" href="#cb"><stop offset=".0900" stop-color="#006aff"/><stop offset=".2542" stop-color="#04f"/><stop offset=".2542" stop-color="#0043ff"/><stop offset=".3833" stop-color="#7d22ff"/><stop offset=".5058" stop-color="#fd00ff"/><stop offset=".5058" stop-color="#f0f"/><stop offset=".5333" stop-color="#ff00e4"/><stop offset=".5633" stop-color="#f0c"/><stop offset=".6317" stop-color="#ff00a3"/><stop offset=".7167" stop-color="#ff0081"/><stop offset=".8200" stop-color="#ff0065"/></linearGradient><linearGradient id="c100" href="#cb"><stop offset=".0917" stop-color="#0068ff"/><stop offset=".2558" stop-color="#0042ff"/><stop offset=".2558" stop-color="#0141ff"/><stop offset=".3817" stop-color="#7921ff"/><stop offset=".5025" stop-color="#f600ff"/><stop offset=".5025" stop-color="#f800ff"/><stop offset=".5100" stop-color="#f0f"/><stop offset=".5400" stop-color="#ff00e2"/><stop offset=".5750" stop-color="#ff00c6"/><stop offset=".6367" stop-color="#ff00a3"/><stop offset=".7183" stop-color="#ff0082"/><stop offset=".8167" stop-color="#ff0067"/></linearGradient><linearGradient id="c101" href="#cb"><stop offset=".0933" stop-color="#06f"/><stop offset=".2558" stop-color="#0040ff"/><stop offset=".2558" stop-color="#0140ff"/><stop offset=".3800" stop-color="#7621ff"/><stop offset=".4992" stop-color="#ef00ff"/><stop offset=".4992" stop-color="#f100ff"/><stop offset=".5133" stop-color="#f0f"/><stop offset=".5417" stop-color="#ff00e3"/><stop offset=".5717" stop-color="#f0c"/><stop offset=".6433" stop-color="#ff00a2"/><stop offset=".7200" stop-color="#ff0083"/><stop offset=".8133" stop-color="#ff006a"/></linearGradient><linearGradient id="c102" href="#cb"><stop offset=".0967" stop-color="#0063ff"/><stop offset=".2558" stop-color="#003fff"/><stop offset=".2558" stop-color="#003eff"/><stop offset=".3783" stop-color="#7220ff"/><stop offset=".4958" stop-color="#e800ff"/><stop offset=".4958" stop-color="#ea00ff"/><stop offset=".5167" stop-color="#f0f"/><stop offset=".5450" stop-color="#ff00e4"/><stop offset=".5750" stop-color="#f0c"/><stop offset=".6483" stop-color="#ff00a2"/><stop offset=".7217" stop-color="#ff0085"/><stop offset=".8100" stop-color="#ff006c"/></linearGradient><linearGradient id="c103" href="#cb"><stop offset=".0983" stop-color="#0061ff"/><stop offset=".2575" stop-color="#003dff"/><stop offset=".2575" stop-color="#013cff"/><stop offset=".3767" stop-color="#6f1fff"/><stop offset=".4925" stop-color="#e200ff"/><stop offset=".4925" stop-color="#e300ff"/><stop offset=".5200" stop-color="#f0f"/><stop offset=".5733" stop-color="#ff00d0"/><stop offset=".6367" stop-color="#f0a"/><stop offset=".7133" stop-color="#ff0089"/><stop offset=".8067" stop-color="#ff006e"/></linearGradient><linearGradient id="c104" href="#cb"><stop offset=".1000" stop-color="#005fff"/><stop offset=".2575" stop-color="#003bff"/><stop offset=".2575" stop-color="#013bff"/><stop offset=".3750" stop-color="#6c1eff"/><stop offset=".4892" stop-color="#db00ff"/><stop offset=".4892" stop-color="#d0f"/><stop offset=".5233" stop-color="#f0f"/><stop offset=".5750" stop-color="#ff00d2"/><stop offset=".6383" stop-color="#ff00ab"/><stop offset=".7133" stop-color="#ff008b"/><stop offset=".8033" stop-color="#ff0071"/></linearGradient><linearGradient id="c105" href="#cb"><stop offset=".1017" stop-color="#005dff"/><stop offset=".2575" stop-color="#003aff"/><stop offset=".2575" stop-color="#0039ff"/><stop offset=".3733" stop-color="#681dff"/><stop offset=".4858" stop-color="#d500ff"/><stop offset=".4858" stop-color="#d600ff"/><stop offset=".5267" stop-color="#f0f"/><stop offset=".5783" stop-color="#ff00d2"/><stop offset=".6400" stop-color="#ff00ad"/><stop offset=".7133" stop-color="#ff008d"/><stop offset=".8000" stop-color="#ff0073"/></linearGradient><linearGradient id="c106" href="#cb"><stop offset=".1033" stop-color="#005aff"/><stop offset=".2592" stop-color="#0038ff"/><stop offset=".2592" stop-color="#0138ff"/><stop offset=".3733" stop-color="#671cff"/><stop offset=".4825" stop-color="#cf00ff"/><stop offset=".4825" stop-color="#d000ff"/><stop offset=".5300" stop-color="#f0f"/><stop offset=".5800" stop-color="#ff00d4"/><stop offset=".6400" stop-color="#ff00af"/><stop offset=".7117" stop-color="#ff0090"/><stop offset=".7967" stop-color="#ff0076"/></linearGradient><linearGradient id="c107" href="#cb"><stop offset=".1050" stop-color="#0058ff"/><stop offset=".2592" stop-color="#0037ff"/><stop offset=".2592" stop-color="#0136ff"/><stop offset=".3717" stop-color="#641cff"/><stop offset=".4792" stop-color="#c800ff"/><stop offset=".4792" stop-color="#ca00ff"/><stop offset=".5333" stop-color="#f0f"/><stop offset=".5833" stop-color="#ff00d4"/><stop offset=".6417" stop-color="#ff00b0"/><stop offset=".7117" stop-color="#ff0092"/><stop offset=".7933" stop-color="#ff0078"/></linearGradient><linearGradient id="c108" href="#cb"><stop offset=".1067" stop-color="#0056ff"/><stop offset=".2592" stop-color="#0035ff"/><stop offset=".2592" stop-color="#0035ff"/><stop offset=".3700" stop-color="#611bff"/><stop offset=".4758" stop-color="#c300ff"/><stop offset=".4758" stop-color="#c400ff"/><stop offset=".5367" stop-color="#f0f"/><stop offset=".5850" stop-color="#ff00d6"/><stop offset=".6433" stop-color="#ff00b2"/><stop offset=".7100" stop-color="#ff0094"/><stop offset=".7900" stop-color="#ff007b"/></linearGradient><linearGradient id="c109" href="#cb"><stop offset=".1083" stop-color="#05f"/><stop offset=".2608" stop-color="#0034ff"/><stop offset=".2608" stop-color="#0133ff"/><stop offset=".3683" stop-color="#5e1aff"/><stop offset=".4725" stop-color="#bd00ff"/><stop offset=".4725" stop-color="#be00ff"/><stop offset=".5400" stop-color="#f0f"/><stop offset=".5883" stop-color="#ff00d6"/><stop offset=".6433" stop-color="#ff00b4"/><stop offset=".7100" stop-color="#ff0096"/><stop offset=".7867" stop-color="#ff007d"/></linearGradient><linearGradient id="c110" href="#cb"><stop offset=".1100" stop-color="#0053ff"/><stop offset=".2608" stop-color="#0032ff"/><stop offset=".2608" stop-color="#0132ff"/><stop offset=".3667" stop-color="#5b19ff"/><stop offset=".4692" stop-color="#b700ff"/><stop offset=".4692" stop-color="#b900ff"/><stop offset=".5433" stop-color="#f0f"/><stop offset=".5900" stop-color="#ff00d8"/><stop offset=".6450" stop-color="#ff00b6"/><stop offset=".7083" stop-color="#f09"/><stop offset=".7833" stop-color="#ff0080"/></linearGradient><linearGradient id="c111" href="#cb"><stop offset=".1117" stop-color="#0051ff"/><stop offset=".2608" stop-color="#0031ff"/><stop offset=".2608" stop-color="#0031ff"/><stop offset=".3650" stop-color="#5819ff"/><stop offset=".4658" stop-color="#b200ff"/><stop offset=".4658" stop-color="#b300ff"/><stop offset=".5467" stop-color="#f0f"/><stop offset=".5933" stop-color="#ff00d8"/><stop offset=".6467" stop-color="#ff00b7"/><stop offset=".7083" stop-color="#ff009b"/><stop offset=".7800" stop-color="#ff0082"/></linearGradient><linearGradient id="c112" href="#cb"><stop offset=".1150" stop-color="#004fff"/><stop offset=".2625" stop-color="#002fff"/><stop offset=".2625" stop-color="#012fff"/><stop offset=".4625" stop-color="#ac00ff"/><stop offset=".4625" stop-color="#ae00ff"/><stop offset=".5500" stop-color="#f0f"/><stop offset=".5950" stop-color="#ff00da"/><stop offset=".6467" stop-color="#ff00b9"/><stop offset=".7067" stop-color="#ff009d"/><stop offset=".7767" stop-color="#ff0085"/></linearGradient><linearGradient id="c113" href="#cb"><stop offset=".1167" stop-color="#004dff"/><stop offset=".2625" stop-color="#002eff"/><stop offset=".2625" stop-color="#012eff"/><stop offset=".4592" stop-color="#a700ff"/><stop offset=".4592" stop-color="#a900ff"/><stop offset=".5533" stop-color="#f0f"/><stop offset=".5967" stop-color="#ff00db"/><stop offset=".6483" stop-color="#f0b"/><stop offset=".7067" stop-color="#ff009f"/><stop offset=".7733" stop-color="#f08"/></linearGradient><linearGradient id="c114" href="#cb"><stop offset=".1183" stop-color="#004bff"/><stop offset=".2625" stop-color="#002dff"/><stop offset=".2625" stop-color="#002dff"/><stop offset=".4558" stop-color="#a200ff"/><stop offset=".4558" stop-color="#a300ff"/><stop offset=".5567" stop-color="#f0f"/><stop offset=".6000" stop-color="#ff00db"/><stop offset=".6483" stop-color="#ff00bd"/><stop offset=".7050" stop-color="#ff00a2"/><stop offset=".7700" stop-color="#ff008a"/></linearGradient><linearGradient id="c115" href="#cb"><stop offset=".1200" stop-color="#0049ff"/><stop offset=".2642" stop-color="#002bff"/><stop offset=".2642" stop-color="#012bff"/><stop offset=".4525" stop-color="#9d00ff"/><stop offset=".4525" stop-color="#9e00ff"/><stop offset=".5600" stop-color="#f0f"/><stop offset=".6017" stop-color="#f0d"/><stop offset=".6500" stop-color="#ff00be"/><stop offset=".7050" stop-color="#ff00a4"/><stop offset=".7683" stop-color="#ff008d"/></linearGradient><linearGradient id="c116" href="#cb"><stop offset=".1217" stop-color="#0047ff"/><stop offset=".2642" stop-color="#002aff"/><stop offset=".2642" stop-color="#012aff"/><stop offset=".4508" stop-color="#90f"/><stop offset=".4508" stop-color="#9b00ff"/><stop offset=".5633" stop-color="#f0f"/><stop offset=".6050" stop-color="#f0d"/><stop offset=".6517" stop-color="#ff00c0"/><stop offset=".7050" stop-color="#ff00a6"/><stop offset=".7650" stop-color="#ff008f"/></linearGradient><linearGradient id="c117" href="#cb"><stop offset=".1233" stop-color="#0046ff"/><stop offset=".2642" stop-color="#0029ff"/><stop offset=".2642" stop-color="#0029ff"/><stop offset=".4475" stop-color="#9500ff"/><stop offset=".4475" stop-color="#9600ff"/><stop offset=".5667" stop-color="#f0f"/><stop offset=".6067" stop-color="#ff00df"/><stop offset=".6517" stop-color="#ff00c2"/><stop offset=".7033" stop-color="#ff00a9"/><stop offset=".7617" stop-color="#ff0092"/></linearGradient><linearGradient id="c118" href="#cb"><stop offset=".1250" stop-color="#04f"/><stop offset=".2642" stop-color="#0028ff"/><stop offset=".2642" stop-color="#0028ff"/><stop offset=".4442" stop-color="#9000ff"/><stop offset=".4442" stop-color="#9100ff"/><stop offset=".5700" stop-color="#f0f"/><stop offset=".6100" stop-color="#ff00df"/><stop offset=".6533" stop-color="#ff00c4"/><stop offset=".7033" stop-color="#ff00ab"/><stop offset=".7583" stop-color="#ff0095"/></linearGradient><linearGradient id="c119" href="#cb"><stop offset=".1283" stop-color="#0042ff"/><stop offset=".2658" stop-color="#0027ff"/><stop offset=".2658" stop-color="#0126ff"/><stop offset=".4408" stop-color="#8b00ff"/><stop offset=".4408" stop-color="#8d00ff"/><stop offset=".5733" stop-color="#f0f"/><stop offset=".6117" stop-color="#ff00e0"/><stop offset=".6533" stop-color="#ff00c6"/><stop offset=".7017" stop-color="#ff00ad"/><stop offset=".7550" stop-color="#ff0098"/></linearGradient><linearGradient id="c120" href="#cb"><stop offset=".1300" stop-color="#0041ff"/><stop offset=".2658" stop-color="#0025ff"/><stop offset=".2658" stop-color="#0025ff"/><stop offset=".4375" stop-color="#8700ff"/><stop offset=".4375" stop-color="#80f"/><stop offset=".5767" stop-color="#f0f"/><stop offset=".6133" stop-color="#ff00e2"/><stop offset=".6550" stop-color="#ff00c7"/><stop offset=".7517" stop-color="#ff009b"/></linearGradient><linearGradient id="c121" href="#cb"><stop offset=".1317" stop-color="#003fff"/><stop offset=".2658" stop-color="#0024ff"/><stop offset=".2658" stop-color="#0024ff"/><stop offset=".4342" stop-color="#8200ff"/><stop offset=".4342" stop-color="#8400ff"/><stop offset=".5800" stop-color="#f0f"/><stop offset=".6167" stop-color="#ff00e2"/><stop offset=".6550" stop-color="#ff00ca"/><stop offset=".7483" stop-color="#ff009e"/></linearGradient><linearGradient id="c122" href="#cb"><stop offset=".1333" stop-color="#003dff"/><stop offset=".2675" stop-color="#0023ff"/><stop offset=".2675" stop-color="#0123ff"/><stop offset=".4308" stop-color="#7e00ff"/><stop offset=".4308" stop-color="#7f00ff"/><stop offset=".5833" stop-color="#f0f"/><stop offset=".6183" stop-color="#ff00e4"/><stop offset=".6567" stop-color="#ff00cb"/><stop offset=".7450" stop-color="#ff00a1"/></linearGradient><linearGradient id="c123" href="#cb"><stop offset=".1350" stop-color="#003cff"/><stop offset=".2675" stop-color="#02f"/><stop offset=".2675" stop-color="#02f"/><stop offset=".4275" stop-color="#7a00ff"/><stop offset=".4275" stop-color="#7b00ff"/><stop offset=".5867" stop-color="#f0f"/><stop offset=".6567" stop-color="#ff00cd"/><stop offset=".7417" stop-color="#ff00a4"/></linearGradient><linearGradient id="c124" href="#cb"><stop offset=".1383" stop-color="#003aff"/><stop offset=".2675" stop-color="#0021ff"/><stop offset=".2675" stop-color="#0021ff"/><stop offset=".4242" stop-color="#7600ff"/><stop offset=".4242" stop-color="#70f"/><stop offset=".5900" stop-color="#f0f"/><stop offset=".6583" stop-color="#ff00cf"/><stop offset=".7383" stop-color="#ff00a8"/></linearGradient><linearGradient id="c125" href="#cb"><stop offset=".1400" stop-color="#0039ff"/><stop offset=".2692" stop-color="#0020ff"/><stop offset=".2692" stop-color="#011fff"/><stop offset=".4208" stop-color="#7100ff"/><stop offset=".4208" stop-color="#7300ff"/><stop offset=".5933" stop-color="#f0f"/><stop offset=".6583" stop-color="#ff00d1"/><stop offset=".7350" stop-color="#ff00ab"/></linearGradient><linearGradient id="c126" href="#cb"><stop offset=".1417" stop-color="#0037ff"/><stop offset=".2692" stop-color="#001fff"/><stop offset=".2692" stop-color="#011eff"/><stop offset=".4175" stop-color="#6d00ff"/><stop offset=".4175" stop-color="#6f00ff"/><stop offset=".5967" stop-color="#f0f"/><stop offset=".6583" stop-color="#ff00d3"/><stop offset=".7317" stop-color="#ff00ae"/></linearGradient><linearGradient id="c127" href="#cb"><stop offset=".1433" stop-color="#0036ff"/><stop offset=".2692" stop-color="#001eff"/><stop offset=".2692" stop-color="#001eff"/><stop offset=".4142" stop-color="#6a00ff"/><stop offset=".4142" stop-color="#6b00ff"/><stop offset=".6000" stop-color="#f0f"/><stop offset=".6600" stop-color="#ff00d5"/><stop offset=".7283" stop-color="#ff00b2"/></linearGradient><linearGradient id="c128" href="#cb"><stop offset=".1450" stop-color="#0034ff"/><stop offset=".2708" stop-color="#001dff"/><stop offset=".2708" stop-color="#011cff"/><stop offset=".4108" stop-color="#60f"/><stop offset=".4108" stop-color="#6700ff"/><stop offset=".6033" stop-color="#f0f"/><stop offset=".6600" stop-color="#ff00d7"/><stop offset=".7250" stop-color="#ff00b5"/></linearGradient><linearGradient id="c129" href="#cb"><stop offset=".1483" stop-color="#03f"/><stop offset=".2708" stop-color="#001cff"/><stop offset=".2708" stop-color="#011bff"/><stop offset=".4075" stop-color="#6200ff"/><stop offset=".4075" stop-color="#6300ff"/><stop offset=".6067" stop-color="#f0f"/><stop offset=".6600" stop-color="#ff00d9"/><stop offset=".7217" stop-color="#ff00b8"/></linearGradient><linearGradient id="c130" href="#cb"><stop offset=".1500" stop-color="#0031ff"/><stop offset=".2708" stop-color="#001bff"/><stop offset=".2708" stop-color="#001aff"/><stop offset=".4042" stop-color="#5e00ff"/><stop offset=".4042" stop-color="#5f00ff"/><stop offset=".6100" stop-color="#f0f"/><stop offset=".6617" stop-color="#ff00db"/><stop offset=".7183" stop-color="#ff00bc"/></linearGradient><linearGradient id="c131" href="#cb"><stop offset=".1517" stop-color="#0030ff"/><stop offset=".2725" stop-color="#001aff"/><stop offset=".2725" stop-color="#0119ff"/><stop offset=".4008" stop-color="#5b00ff"/><stop offset=".4008" stop-color="#5c00ff"/><stop offset=".6133" stop-color="#f0f"/><stop offset=".6617" stop-color="#f0d"/><stop offset=".7150" stop-color="#ff00c0"/></linearGradient><linearGradient id="c132" href="#cb"><stop offset=".1533" stop-color="#002fff"/><stop offset=".2725" stop-color="#0019ff"/><stop offset=".2725" stop-color="#0118ff"/><stop offset=".3975" stop-color="#5700ff"/><stop offset=".3975" stop-color="#5800ff"/><stop offset=".6167" stop-color="#f0f"/><stop offset=".6617" stop-color="#ff00df"/><stop offset=".7117" stop-color="#ff00c3"/></linearGradient><linearGradient id="c133" href="#cb"><stop offset=".1550" stop-color="#002dff"/><stop offset=".2725" stop-color="#0018ff"/><stop offset=".2725" stop-color="#0018ff"/><stop offset=".3942" stop-color="#5400ff"/><stop offset=".3942" stop-color="#50f"/><stop offset=".6200" stop-color="#f0f"/><stop offset=".6633" stop-color="#ff00e0"/><stop offset=".7100" stop-color="#ff00c6"/></linearGradient><linearGradient id="c134" href="#cb"><stop offset=".1583" stop-color="#002cff"/><stop offset=".2742" stop-color="#0017ff"/><stop offset=".2742" stop-color="#0116ff"/><stop offset=".3908" stop-color="#5000ff"/><stop offset=".3908" stop-color="#5100ff"/><stop offset=".6233" stop-color="#f0f"/><stop offset=".6633" stop-color="#ff00e3"/><stop offset=".7067" stop-color="#ff00ca"/></linearGradient><linearGradient id="c135" href="#cb"><stop offset=".1600" stop-color="#002bff"/><stop offset=".2742" stop-color="#0016ff"/><stop offset=".2742" stop-color="#0116ff"/><stop offset=".3875" stop-color="#4d00ff"/><stop offset=".3875" stop-color="#4e00ff"/><stop offset=".5100" stop-color="#a600ff"/><stop offset=".6267" stop-color="#f0f"/><stop offset=".7033" stop-color="#ff00ce"/></linearGradient><linearGradient id="c136" href="#cb"><stop offset=".1617" stop-color="#0029ff"/><stop offset=".2742" stop-color="#0015ff"/><stop offset=".2742" stop-color="#0015ff"/><stop offset=".3842" stop-color="#4900ff"/><stop offset=".3842" stop-color="#4b00ff"/><stop offset=".5100" stop-color="#a400ff"/><stop offset=".6300" stop-color="#f0f"/><stop offset=".7000" stop-color="#ff00d2"/></linearGradient><linearGradient id="c137" href="#cb"><stop offset=".1633" stop-color="#0028ff"/><stop offset=".2758" stop-color="#0014ff"/><stop offset=".2758" stop-color="#0114ff"/><stop offset=".3808" stop-color="#4600ff"/><stop offset=".3808" stop-color="#4700ff"/><stop offset=".5100" stop-color="#a200ff"/><stop offset=".6333" stop-color="#f0f"/><stop offset=".6967" stop-color="#ff00d6"/></linearGradient><linearGradient id="c138" href="#cb"><stop offset=".1667" stop-color="#0027ff"/><stop offset=".2758" stop-color="#0013ff"/><stop offset=".2758" stop-color="#0113ff"/><stop offset=".3775" stop-color="#4300ff"/><stop offset=".3775" stop-color="#40f"/><stop offset=".5100" stop-color="#a000ff"/><stop offset=".6367" stop-color="#f0f"/><stop offset=".6933" stop-color="#ff00da"/></linearGradient><linearGradient id="c139" href="#cb"><stop offset=".1683" stop-color="#0025ff"/><stop offset=".2758" stop-color="#0013ff"/><stop offset=".2758" stop-color="#0012ff"/><stop offset=".3742" stop-color="#4000ff"/><stop offset=".3742" stop-color="#4100ff"/><stop offset=".5100" stop-color="#9f00ff"/><stop offset=".6400" stop-color="#f0f"/><stop offset=".6900" stop-color="#ff00de"/></linearGradient><linearGradient id="c140" href="#cb"><stop offset=".1700" stop-color="#0024ff"/><stop offset=".2775" stop-color="#0012ff"/><stop offset=".2775" stop-color="#0111ff"/><stop offset=".3708" stop-color="#3d00ff"/><stop offset=".3708" stop-color="#3e00ff"/><stop offset=".5100" stop-color="#9d00ff"/><stop offset=".6433" stop-color="#f0f"/><stop offset=".6867" stop-color="#ff00e2"/></linearGradient><linearGradient id="c141" href="#cb"><stop offset=".1733" stop-color="#0023ff"/><stop offset=".2775" stop-color="#01f"/><stop offset=".2775" stop-color="#0110ff"/><stop offset=".3675" stop-color="#3a00ff"/><stop offset=".3675" stop-color="#3b00ff"/><stop offset=".5100" stop-color="#9b00ff"/><stop offset=".6467" stop-color="#f0f"/><stop offset=".6833" stop-color="#ff00e6"/></linearGradient><linearGradient id="c142" href="#cb"><stop offset=".1750" stop-color="#02f"/><stop offset=".2775" stop-color="#0010ff"/><stop offset=".2775" stop-color="#0010ff"/><stop offset=".3658" stop-color="#3800ff"/><stop offset=".3658" stop-color="#3900ff"/><stop offset=".5100" stop-color="#9a00ff"/><stop offset=".6500" stop-color="#f0f"/><stop offset=".6800" stop-color="#ff00eb"/></linearGradient><linearGradient id="c143" href="#cb"><stop offset=".1767" stop-color="#0021ff"/><stop offset=".2792" stop-color="#000fff"/><stop offset=".2792" stop-color="#010fff"/><stop offset=".3625" stop-color="#3500ff"/><stop offset=".3625" stop-color="#3600ff"/><stop offset=".5100" stop-color="#9800ff"/><stop offset=".6533" stop-color="#f0f"/><stop offset=".6767" stop-color="#ff00ef"/></linearGradient><linearGradient id="c144" href="#cb"><stop offset=".1783" stop-color="#0020ff"/><stop offset=".2792" stop-color="#000eff"/><stop offset=".2792" stop-color="#010eff"/><stop offset=".3592" stop-color="#3200ff"/><stop offset=".3592" stop-color="#30f"/><stop offset=".5100" stop-color="#9700ff"/><stop offset=".6567" stop-color="#f0f"/><stop offset=".6733" stop-color="#ff00f4"/></linearGradient><linearGradient id="c145" href="#cb"><stop offset=".1817" stop-color="#001eff"/><stop offset=".2792" stop-color="#000eff"/><stop offset=".2792" stop-color="#000dff"/><stop offset=".3558" stop-color="#2f00ff"/><stop offset=".3558" stop-color="#3000ff"/><stop offset=".5117" stop-color="#9600ff"/><stop offset=".6600" stop-color="#f0f"/><stop offset=".6700" stop-color="#ff00f8"/></linearGradient><linearGradient id="c146" href="#cb"><stop offset=".1833" stop-color="#001dff"/><stop offset=".2808" stop-color="#000dff"/><stop offset=".2808" stop-color="#010cff"/><stop offset=".3525" stop-color="#2c00ff"/><stop offset=".3525" stop-color="#2d00ff"/><stop offset=".4917" stop-color="#8700ff"/><stop offset=".6667" stop-color="#ff00fd"/></linearGradient><linearGradient id="c147" href="#cb"><stop offset=".1850" stop-color="#001cff"/><stop offset=".2808" stop-color="#000cff"/><stop offset=".2808" stop-color="#010cff"/><stop offset=".3492" stop-color="#2a00ff"/><stop offset=".3492" stop-color="#2b00ff"/><stop offset=".5100" stop-color="#9200ff"/><stop offset=".6633" stop-color="#fc00ff"/></linearGradient><linearGradient id="c148" href="#cb"><stop offset=".1883" stop-color="#001bff"/><stop offset=".2808" stop-color="#000bff"/><stop offset=".2808" stop-color="#000bff"/><stop offset=".3458" stop-color="#2700ff"/><stop offset=".3458" stop-color="#2800ff"/><stop offset=".5067" stop-color="#8e00ff"/><stop offset=".6600" stop-color="#f700ff"/></linearGradient><linearGradient id="c149" href="#cb"><stop offset=".1900" stop-color="#001aff"/><stop offset=".2825" stop-color="#000aff"/><stop offset=".2825" stop-color="#010aff"/><stop offset=".3425" stop-color="#2400ff"/><stop offset=".3425" stop-color="#2500ff"/><stop offset=".5033" stop-color="#8b00ff"/><stop offset=".6567" stop-color="#f300ff"/></linearGradient><linearGradient id="c150" href="#cb"><stop offset=".1917" stop-color="#0019ff"/><stop offset=".2825" stop-color="#000aff"/><stop offset=".2825" stop-color="#010aff"/><stop offset=".3392" stop-color="#20f"/><stop offset=".3392" stop-color="#2300ff"/><stop offset=".5000" stop-color="#8700ff"/><stop offset=".6533" stop-color="#e0f"/></linearGradient><linearGradient id="c151" href="#cb"><stop offset=".1950" stop-color="#0018ff"/><stop offset=".2825" stop-color="#0009ff"/><stop offset=".2825" stop-color="#0009ff"/><stop offset=".3358" stop-color="#1f00ff"/><stop offset=".3358" stop-color="#2000ff"/><stop offset=".4967" stop-color="#8400ff"/><stop offset=".6517" stop-color="#eb00ff"/></linearGradient><linearGradient id="c152" href="#cb"><stop offset=".1967" stop-color="#0017ff"/><stop offset=".2842" stop-color="#0008ff"/><stop offset=".2842" stop-color="#0108ff"/><stop offset=".3325" stop-color="#1d00ff"/><stop offset=".3325" stop-color="#1e00ff"/><stop offset=".4933" stop-color="#8000ff"/><stop offset=".6483" stop-color="#e600ff"/></linearGradient><linearGradient id="c153" href="#cb"><stop offset=".1983" stop-color="#0016ff"/><stop offset=".2842" stop-color="#0008ff"/><stop offset=".2842" stop-color="#0107ff"/><stop offset=".3292" stop-color="#1a00ff"/><stop offset=".3292" stop-color="#1b00ff"/><stop offset=".4900" stop-color="#7d00ff"/><stop offset=".6450" stop-color="#e200ff"/></linearGradient><linearGradient id="c154" href="#cb"><stop offset=".2017" stop-color="#0014ff"/><stop offset=".2842" stop-color="#0007ff"/><stop offset=".2842" stop-color="#0007ff"/><stop offset=".3258" stop-color="#1800ff"/><stop offset=".3258" stop-color="#1900ff"/><stop offset=".4867" stop-color="#7a00ff"/><stop offset=".6417" stop-color="#de00ff"/></linearGradient><linearGradient id="c155" href="#cb"><stop offset=".2033" stop-color="#0013ff"/><stop offset=".2842" stop-color="#0006ff"/><stop offset=".2842" stop-color="#0006ff"/><stop offset=".3225" stop-color="#1500ff"/><stop offset=".3225" stop-color="#1600ff"/><stop offset=".4833" stop-color="#7600ff"/><stop offset=".6383" stop-color="#da00ff"/></linearGradient><linearGradient id="c156" href="#cb"><stop offset=".2067" stop-color="#0012ff"/><stop offset=".2858" stop-color="#0006ff"/><stop offset=".2858" stop-color="#0105ff"/><stop offset=".3192" stop-color="#1300ff"/><stop offset=".3192" stop-color="#1400ff"/><stop offset=".4800" stop-color="#7300ff"/><stop offset=".6350" stop-color="#d600ff"/></linearGradient><linearGradient id="c157" href="#cb"><stop offset=".2083" stop-color="#01f"/><stop offset=".2858" stop-color="#0005ff"/><stop offset=".2858" stop-color="#0005ff"/><stop offset=".3158" stop-color="#1000ff"/><stop offset=".3158" stop-color="#10f"/><stop offset=".4767" stop-color="#7000ff"/><stop offset=".6317" stop-color="#d100ff"/></linearGradient><linearGradient id="c158" href="#cb"><stop offset=".2117" stop-color="#0010ff"/><stop offset=".2858" stop-color="#0004ff"/><stop offset=".2858" stop-color="#0004ff"/><stop offset=".3125" stop-color="#0e00ff"/><stop offset=".3125" stop-color="#0f00ff"/><stop offset=".4733" stop-color="#6d00ff"/><stop offset=".6283" stop-color="#cd00ff"/></linearGradient><linearGradient id="c159" href="#cb"><stop offset=".2133" stop-color="#000fff"/><stop offset=".2875" stop-color="#0004ff"/><stop offset=".2875" stop-color="#0103ff"/><stop offset=".3092" stop-color="#0c00ff"/><stop offset=".3092" stop-color="#0d00ff"/><stop offset=".4700" stop-color="#6a00ff"/><stop offset=".6250" stop-color="#c900ff"/></linearGradient><linearGradient id="c160" href="#cb"><stop offset=".2150" stop-color="#000eff"/><stop offset=".2875" stop-color="#0003ff"/><stop offset=".2875" stop-color="#0003ff"/><stop offset=".3058" stop-color="#0a00ff"/><stop offset=".3058" stop-color="#0b00ff"/><stop offset=".4667" stop-color="#6700ff"/><stop offset=".6217" stop-color="#c600ff"/></linearGradient><linearGradient id="c161" href="#cb"><stop offset=".2183" stop-color="#000dff"/><stop offset=".2875" stop-color="#0003ff"/><stop offset=".2875" stop-color="#0002ff"/><stop offset=".3025" stop-color="#0700ff"/><stop offset=".3025" stop-color="#0800ff"/><stop offset=".4633" stop-color="#6400ff"/><stop offset=".6183" stop-color="#c200ff"/></linearGradient><linearGradient id="c162" href="#cb"><stop offset=".2200" stop-color="#000cff"/><stop offset=".2892" stop-color="#0002ff"/><stop offset=".2892" stop-color="#0102ff"/><stop offset=".2992" stop-color="#0500ff"/><stop offset=".2992" stop-color="#0600ff"/><stop offset=".4600" stop-color="#6100ff"/><stop offset=".6150" stop-color="#be00ff"/></linearGradient><linearGradient id="c163" href="#cb"><stop offset=".2233" stop-color="#000bff"/><stop offset=".2892" stop-color="#0001ff"/><stop offset=".2892" stop-color="#0001ff"/><stop offset=".2958" stop-color="#0300ff"/><stop offset=".2958" stop-color="#0400ff"/><stop offset=".4567" stop-color="#5e00ff"/><stop offset=".6117" stop-color="#ba00ff"/></linearGradient><linearGradient id="c164" href="#cb"><stop offset=".2250" stop-color="#000aff"/><stop offset=".2892" stop-color="#0001ff"/><stop offset=".2892" stop-color="#00f"/><stop offset=".2925" stop-color="#0100ff"/><stop offset=".2925" stop-color="#0200ff"/><stop offset=".4533" stop-color="#5b00ff"/><stop offset=".6083" stop-color="#b700ff"/></linearGradient><linearGradient id="c165" href="#cb"><stop offset=".2283" stop-color="#0009ff"/><stop offset=".2917" stop-color="#0100ff"/><stop offset=".4500" stop-color="#5800ff"/><stop offset=".6050" stop-color="#b300ff"/></linearGradient><linearGradient id="c166" href="#cb"><stop offset=".2300" stop-color="#0009ff"/><stop offset=".2917" stop-color="#00f"/><stop offset=".4483" stop-color="#5600ff"/><stop offset=".6017" stop-color="#b000ff"/></linearGradient><linearGradient id="c167" href="#cb"><stop offset=".2333" stop-color="#0008ff"/><stop offset=".2917" stop-color="#00f"/><stop offset=".5983" stop-color="#ac00ff"/></linearGradient><linearGradient id="c168" href="#cb"><stop offset=".2350" stop-color="#0007ff"/><stop offset=".2933" stop-color="#0100ff"/><stop offset=".5950" stop-color="#a900ff"/></linearGradient><linearGradient id="c169" href="#cb"><stop offset=".2383" stop-color="#0006ff"/><stop offset=".2933" stop-color="#00f"/><stop offset=".5933" stop-color="#a600ff"/></linearGradient><linearGradient id="c170" href="#cb"><stop offset=".2400" stop-color="#0005ff"/><stop offset=".2933" stop-color="#00f"/><stop offset=".5900" stop-color="#a300ff"/></linearGradient><linearGradient id="c171" href="#cb"><stop offset=".2433" stop-color="#0004ff"/><stop offset=".2950" stop-color="#0100ff"/><stop offset=".5867" stop-color="#a000ff"/></linearGradient><linearGradient id="c172" href="#cb"><stop offset=".2467" stop-color="#0003ff"/><stop offset=".2950" stop-color="#00f"/><stop offset=".5833" stop-color="#9c00ff"/></linearGradient><linearGradient id="c173" href="#cb"><stop offset=".2483" stop-color="#0002ff"/><stop offset=".2950" stop-color="#00f"/><stop offset=".5800" stop-color="#90f"/></linearGradient><linearGradient id="c174" href="#cb"><stop offset=".2517" stop-color="#0001ff"/><stop offset=".2967" stop-color="#0100ff"/><stop offset=".5767" stop-color="#9600ff"/></linearGradient><linearGradient id="c175" href="#cb"><stop offset=".2533" stop-color="#0001ff"/><stop offset=".2967" stop-color="#00f"/><stop offset=".5733" stop-color="#9300ff"/></linearGradient><linearGradient id="c176" href="#cb"><stop offset=".2567" stop-color="#00f"/><stop offset=".2967" stop-color="#00f"/><stop offset=".5700" stop-color="#9000ff"/></linearGradient><linearGradient id="c177" href="#cb"><stop offset=".2600" stop-color="#00f"/><stop offset=".2983" stop-color="#0100ff"/><stop offset=".5667" stop-color="#8d00ff"/></linearGradient><linearGradient id="c178" href="#cb"><stop offset=".2617" stop-color="#00f"/><stop offset=".2983" stop-color="#00f"/><stop offset=".5633" stop-color="#8a00ff"/></linearGradient><linearGradient id="c179" href="#cb"><stop offset=".2650" stop-color="#00f"/><stop offset=".2983" stop-color="#00f"/><stop offset=".5600" stop-color="#8700ff"/></linearGradient><linearGradient id="c180" href="#cb"><stop offset=".2683" stop-color="#00f"/><stop offset=".3000" stop-color="#0100ff"/><stop offset=".5567" stop-color="#8400ff"/></linearGradient><linearGradient id="c181" href="#cb"><stop offset=".2717" stop-color="#00f"/><stop offset=".3000" stop-color="#00f"/><stop offset=".5533" stop-color="#8100ff"/></linearGradient><linearGradient id="c182" href="#cb"><stop offset=".2733" stop-color="#00f"/><stop offset=".3000" stop-color="#00f"/><stop offset=".5500" stop-color="#7e00ff"/></linearGradient><linearGradient id="c183" href="#cb"><stop offset=".2767" stop-color="#00f"/><stop offset=".3017" stop-color="#0100ff"/><stop offset=".5467" stop-color="#7c00ff"/></linearGradient><linearGradient id="c184" href="#cb"><stop offset=".2800" stop-color="#00f"/><stop offset=".3017" stop-color="#00f"/><stop offset=".5433" stop-color="#7900ff"/></linearGradient><linearGradient id="c185" href="#cb"><stop offset=".2833" stop-color="#00f"/><stop offset=".3017" stop-color="#00f"/><stop offset=".5400" stop-color="#7600ff"/></linearGradient><linearGradient id="c186" href="#cb"><stop offset=".2867" stop-color="#00f"/><stop offset=".3033" stop-color="#0100ff"/><stop offset=".5367" stop-color="#7300ff"/></linearGradient><linearGradient id="c187" href="#cb"><stop offset=".2900" stop-color="#00f"/><stop offset=".3033" stop-color="#0100ff"/><stop offset=".5350" stop-color="#7200ff"/></linearGradient><linearGradient id="c188" href="#cb"><stop offset=".2933" stop-color="#00f"/><stop offset=".3033" stop-color="#00f"/><stop offset=".5317" stop-color="#6f00ff"/></linearGradient><linearGradient id="c189" href="#cb"><stop offset=".2967" stop-color="#00f"/><stop offset=".3267" stop-color="#0b00ff"/><stop offset=".5283" stop-color="#6c00ff"/></linearGradient><linearGradient id="c190" href="#cb"><stop offset=".3000" stop-color="#00f"/><stop offset=".5250" stop-color="#6a00ff"/></linearGradient><linearGradient id="c191" href="#cb"><stop offset=".3033" stop-color="#00f"/><stop offset=".5217" stop-color="#6700ff"/></linearGradient><linearGradient id="c192" href="#cb"><stop offset=".3067" stop-color="#0100ff"/><stop offset=".5183" stop-color="#6500ff"/></linearGradient><linearGradient id="c193" href="#cb"><stop offset=".3100" stop-color="#0200ff"/><stop offset=".5150" stop-color="#6200ff"/></linearGradient><linearGradient id="c194" href="#cb"><stop offset=".3133" stop-color="#0300ff"/><stop offset=".5117" stop-color="#6000ff"/></linearGradient><linearGradient id="c195" href="#cb"><stop offset=".3167" stop-color="#0500ff"/><stop offset=".5083" stop-color="#5e00ff"/></linearGradient><linearGradient id="c196" href="#cb"><stop offset=".3200" stop-color="#0600ff"/><stop offset=".5050" stop-color="#5b00ff"/></linearGradient><linearGradient id="c197" href="#cb"><stop offset=".3250" stop-color="#0800ff"/><stop offset=".5017" stop-color="#5900ff"/></linearGradient><linearGradient id="c198" href="#cb"><stop offset=".3283" stop-color="#0900ff"/><stop offset=".4983" stop-color="#5700ff"/></linearGradient><linearGradient id="c199" href="#cb"><stop offset=".3317" stop-color="#0a00ff"/><stop offset=".4950" stop-color="#5400ff"/></linearGradient><linearGradient id="c200" href="#cb"><stop offset=".3367" stop-color="#0c00ff"/><stop offset=".4917" stop-color="#5200ff"/></linearGradient><linearGradient id="c201" href="#cb"><stop offset=".3400" stop-color="#0d00ff"/><stop offset=".4883" stop-color="#5000ff"/></linearGradient><linearGradient id="c202" href="#cb"><stop offset=".3433" stop-color="#0e00ff"/><stop offset=".4850" stop-color="#4e00ff"/></linearGradient><linearGradient id="c203" href="#cb"><stop offset=".3483" stop-color="#1000ff"/><stop offset=".4817" stop-color="#4c00ff"/></linearGradient><linearGradient id="c204" href="#cb"><stop offset=".3517" stop-color="#10f"/><stop offset=".4783" stop-color="#4900ff"/></linearGradient><linearGradient id="c205" href="#cb"><stop offset=".3567" stop-color="#1300ff"/><stop offset=".4767" stop-color="#4800ff"/></linearGradient><linearGradient id="c206" href="#cb"><stop offset=".3600" stop-color="#1400ff"/><stop offset=".4733" stop-color="#4600ff"/></linearGradient><linearGradient id="c207" href="#cb"><stop offset=".3633" stop-color="#1500ff"/><stop offset=".4700" stop-color="#40f"/></linearGradient><linearGradient id="c208" href="#cb"><stop offset=".3683" stop-color="#1700ff"/><stop offset=".4667" stop-color="#4200ff"/></linearGradient><linearGradient id="c209" href="#cb"><stop offset=".3717" stop-color="#1800ff"/><stop offset=".4633" stop-color="#4000ff"/></linearGradient><linearGradient id="c210" href="#cb"><stop offset=".3767" stop-color="#1a00ff"/><stop offset=".4600" stop-color="#3e00ff"/></linearGradient><linearGradient id="c211" href="#cb"><stop offset=".3800" stop-color="#1b00ff"/><stop offset=".4567" stop-color="#3c00ff"/></linearGradient><linearGradient id="c212" href="#cb"><stop offset=".3833" stop-color="#1c00ff"/><stop offset=".4533" stop-color="#3a00ff"/></linearGradient><linearGradient id="c213" href="#cb"><stop offset=".3883" stop-color="#1e00ff"/><stop offset=".4500" stop-color="#3800ff"/></linearGradient><linearGradient id="c214" href="#cb"><stop offset=".3917" stop-color="#1f00ff"/><stop offset=".4467" stop-color="#3600ff"/></linearGradient><linearGradient id="c215" href="#cb"><stop offset=".3950" stop-color="#2000ff"/><stop offset=".4433" stop-color="#3400ff"/></linearGradient><linearGradient id="c216" href="#cb"><stop offset=".4000" stop-color="#20f"/><stop offset=".4400" stop-color="#3200ff"/></linearGradient><linearGradient id="c217" href="#cb"><stop offset=".4033" stop-color="#2300ff"/><stop offset=".4367" stop-color="#3000ff"/></linearGradient><linearGradient id="c218" href="#cb"><stop offset=".4083" stop-color="#2400ff"/><stop offset=".4333" stop-color="#2e00ff"/></linearGradient><linearGradient id="c219" href="#cb"><stop offset=".4133" stop-color="#2600ff"/><stop offset=".4300" stop-color="#2d00ff"/></linearGradient><linearGradient id="ib" gradientUnits="userSpaceOnUse" x1="1348" y1="0" x2="1545" y2="0"/><linearGradient id="i0" href="#ib"><stop offset=".0000" stop-color="#acff00"/><stop offset=".7766" stop-color="#ff0"/><stop offset="1.0000" stop-color="#ffe700"/></linearGradient><linearGradient id="i1" href="#ib"><stop offset=".0000" stop-color="#adff00"/><stop offset=".7614" stop-color="#ff0"/><stop offset="1.0000" stop-color="#ffe600"/></linearGradient><linearGradient id="i2" href="#ib"><stop offset=".0000" stop-color="#aeff00"/><stop offset=".7462" stop-color="#ff0"/><stop offset="1.0000" stop-color="#ffe400"/></linearGradient><linearGradient id="i3" href="#ib"><stop offset=".0000" stop-color="#afff00"/><stop offset=".7360" stop-color="#ff0"/><stop offset="1.0000" stop-color="#ffe300"/></linearGradient><linearGradient id="i4" href="#ib"><stop offset=".0000" stop-color="#b0ff00"/><stop offset=".0178" stop-color="#b2ff00"/><stop offset=".0178" stop-color="#b2ff00"/><stop offset=".7208" stop-color="#ff0"/><stop offset="1.0000" stop-color="#ffe200"/></linearGradient><linearGradient id="i5" href="#ib"><stop offset=".0000" stop-color="#b1ff01"/><stop offset=".0482" stop-color="#b6ff00"/><stop offset=".0482" stop-color="#b7ff00"/><stop offset=".7107" stop-color="#ff0"/><stop offset="1.0000" stop-color="#ffe000"/></linearGradient><linearGradient id="i6" href="#ib"><stop offset=".0000" stop-color="#b3ff02"/><stop offset=".0736" stop-color="#baff00"/><stop offset=".0736" stop-color="#baff00"/><stop offset=".6954" stop-color="#ff0"/><stop offset="1.0000" stop-color="#ffdf00"/></linearGradient><linearGradient id="i7" href="#ib"><stop offset=".0000" stop-color="#b4ff02"/><stop offset=".0990" stop-color="#beff00"/><stop offset=".0990" stop-color="#beff00"/><stop offset=".6853" stop-color="#ff0"/><stop offset="1.0000" stop-color="#ffde00"/></linearGradient><linearGradient id="i8" href="#ib"><stop offset=".0000" stop-color="#b5ff03"/><stop offset=".1294" stop-color="#c2ff00"/><stop offset=".1294" stop-color="#c3ff00"/><stop offset=".6701" stop-color="#ff0"/><stop offset="1.0000" stop-color="#fd0"/></linearGradient><linearGradient id="i9" href="#ib"><stop offset=".0000" stop-color="#b6ff04"/><stop offset=".1548" stop-color="#c6ff00"/><stop offset=".1548" stop-color="#c7ff00"/><stop offset=".6599" stop-color="#ff0"/><stop offset="1.0000" stop-color="#ffdb00"/></linearGradient><linearGradient id="i10" href="#ib"><stop offset=".0000" stop-color="#b7ff04"/><stop offset=".1802" stop-color="#caff00"/><stop offset=".1802" stop-color="#cbff00"/><stop offset=".6447" stop-color="#ff0"/><stop offset="1.0000" stop-color="#ffda00"/></linearGradient><linearGradient id="i11" href="#ib"><stop offset=".0000" stop-color="#b8ff05"/><stop offset=".2056" stop-color="#ceff00"/><stop offset=".2056" stop-color="#cfff00"/><stop offset=".6345" stop-color="#ff0"/><stop offset="1.0000" stop-color="#ffd900"/></linearGradient><linearGradient id="i12" href="#ib"><stop offset=".0000" stop-color="#baff06"/><stop offset=".2360" stop-color="#d3ff00"/><stop offset=".2360" stop-color="#d3ff00"/><stop offset=".6193" stop-color="#ff0"/><stop offset="1.0000" stop-color="#ffd700"/></linearGradient><linearGradient id="i13" href="#ib"><stop offset=".0000" stop-color="#bbff06"/><stop offset=".2614" stop-color="#d7ff00"/><stop offset=".2614" stop-color="#d7ff00"/><stop offset=".6091" stop-color="#ff0"/><stop offset="1.0000" stop-color="#ffd600"/></linearGradient><linearGradient id="i14" href="#ib"><stop offset=".0000" stop-color="#bcff07"/><stop offset=".2868" stop-color="#dbff00"/><stop offset=".2868" stop-color="#dcff00"/><stop offset=".5939" stop-color="#ff0"/><stop offset="1.0000" stop-color="#ffd500"/></linearGradient><linearGradient id="i15" href="#ib"><stop offset=".0000" stop-color="#bdff08"/><stop offset=".3173" stop-color="#e0ff00"/><stop offset=".3173" stop-color="#e0ff00"/><stop offset=".5838" stop-color="#ff0"/><stop offset="1.0000" stop-color="#ffd400"/></linearGradient><linearGradient id="i16" href="#ib"><stop offset=".0000" stop-color="#beff08"/><stop offset=".3426" stop-color="#e4ff00"/><stop offset=".3426" stop-color="#e5ff00"/><stop offset=".5685" stop-color="#ff0"/><stop offset="1.0000" stop-color="#ffd200"/></linearGradient><linearGradient id="i17" href="#ib"><stop offset=".0000" stop-color="#c0ff09"/><stop offset=".3680" stop-color="#e9ff00"/><stop offset=".3680" stop-color="#e9ff00"/><stop offset=".5584" stop-color="#ff0"/><stop offset="1.0000" stop-color="#ffd100"/></linearGradient><linearGradient id="i18" href="#ib"><stop offset=".0000" stop-color="#c1ff0a"/><stop offset=".3934" stop-color="#edff00"/><stop offset=".3934" stop-color="#ef0"/><stop offset=".5431" stop-color="#ff0"/><stop offset="1.0000" stop-color="#ffd000"/></linearGradient><linearGradient id="i19" href="#ib"><stop offset=".0000" stop-color="#c2ff0a"/><stop offset=".4239" stop-color="#f2ff00"/><stop offset=".4239" stop-color="#f3ff00"/><stop offset=".5330" stop-color="#ff0"/><stop offset="1.0000" stop-color="#ffcf00"/></linearGradient><linearGradient id="i20" href="#ib"><stop offset=".0000" stop-color="#c3ff0b"/><stop offset=".4492" stop-color="#f6ff00"/><stop offset=".4492" stop-color="#f7ff00"/><stop offset=".5178" stop-color="#ff0"/><stop offset="1.0000" stop-color="#ffcd00"/></linearGradient><linearGradient id="i21" href="#ib"><stop offset=".0000" stop-color="#c5ff0c"/><stop offset=".4746" stop-color="#fbff00"/><stop offset=".4746" stop-color="#fcff00"/><stop offset=".5076" stop-color="#ff0"/><stop offset="1.0000" stop-color="#fc0"/></linearGradient><linearGradient id="i22" href="#ib"><stop offset=".0000" stop-color="#c6ff0c"/><stop offset=".5051" stop-color="#fffe00"/><stop offset=".5051" stop-color="#fffd00"/><stop offset="1.0000" stop-color="#ffcb00"/></linearGradient><linearGradient id="i23" href="#ib"><stop offset=".0000" stop-color="#c7ff0d"/><stop offset=".4772" stop-color="#ffff01"/><stop offset=".5305" stop-color="#fff900"/><stop offset=".5305" stop-color="#fff900"/><stop offset="1.0000" stop-color="#ffca00"/></linearGradient><linearGradient id="i24" href="#ib"><stop offset=".0000" stop-color="#c9ff0e"/><stop offset=".4619" stop-color="#ffff02"/><stop offset=".5558" stop-color="#fff500"/><stop offset=".5558" stop-color="#fff400"/><stop offset="1.0000" stop-color="#ffc900"/></linearGradient><linearGradient id="i25" href="#ib"><stop offset=".0000" stop-color="#caff0e"/><stop offset=".4518" stop-color="#ffff03"/><stop offset=".5812" stop-color="#fff000"/><stop offset=".5812" stop-color="#fff000"/><stop offset="1.0000" stop-color="#ffc700"/></linearGradient><linearGradient id="i26" href="#ib"><stop offset=".0000" stop-color="#cbff0f"/><stop offset=".4365" stop-color="#ffff05"/><stop offset=".6117" stop-color="#ffeb00"/><stop offset=".6117" stop-color="#ffeb00"/><stop offset="1.0000" stop-color="#ffc600"/></linearGradient><linearGradient id="i27" href="#ib"><stop offset=".0000" stop-color="#cdff10"/><stop offset=".4264" stop-color="#ffff05"/><stop offset=".6371" stop-color="#ffe700"/><stop offset=".6371" stop-color="#ffe700"/><stop offset="1.0000" stop-color="#ffc500"/></linearGradient><linearGradient id="i28" href="#ib"><stop offset=".0000" stop-color="#ceff11"/><stop offset=".4112" stop-color="#ffff07"/><stop offset=".6624" stop-color="#ffe300"/><stop offset=".6624" stop-color="#ffe300"/><stop offset="1.0000" stop-color="#ffc400"/></linearGradient><linearGradient id="i29" href="#ib"><stop offset=".0000" stop-color="#cfff11"/><stop offset=".4010" stop-color="#ffff08"/><stop offset=".6929" stop-color="#ffdf00"/><stop offset=".6929" stop-color="#ffde00"/><stop offset="1.0000" stop-color="#ffc300"/></linearGradient><linearGradient id="i30" href="#ib"><stop offset=".0000" stop-color="#d1ff12"/><stop offset=".3858" stop-color="#ffff09"/><stop offset=".7183" stop-color="#ffdb00"/><stop offset=".7183" stop-color="#ffda00"/><stop offset="1.0000" stop-color="#ffc100"/></linearGradient><linearGradient id="i31" href="#ib"><stop offset=".0000" stop-color="#d2ff13"/><stop offset=".3756" stop-color="#ffff0a"/><stop offset=".7437" stop-color="#ffd700"/><stop offset=".7437" stop-color="#ffd700"/><stop offset="1.0000" stop-color="#ffc000"/></linearGradient><linearGradient id="i32" href="#ib"><stop offset=".0000" stop-color="#d3ff14"/><stop offset=".3604" stop-color="#ffff0b"/><stop offset=".7741" stop-color="#ffd300"/><stop offset=".7741" stop-color="#ffd200"/><stop offset="1.0000" stop-color="#ffbf00"/></linearGradient><linearGradient id="i33" href="#ib"><stop offset=".0000" stop-color="#d5ff14"/><stop offset=".3503" stop-color="#ffff0c"/><stop offset=".7995" stop-color="#ffcf00"/><stop offset=".7995" stop-color="#ffcf00"/><stop offset="1.0000" stop-color="#ffbe00"/></linearGradient><linearGradient id="i34" href="#ib"><stop offset=".0000" stop-color="#d6ff15"/><stop offset=".3350" stop-color="#ffff0d"/><stop offset=".8249" stop-color="#fc0"/><stop offset=".8249" stop-color="#ffcb00"/><stop offset="1.0000" stop-color="#ffbd00"/></linearGradient><linearGradient id="i35" href="#ib"><stop offset=".0000" stop-color="#d8ff16"/><stop offset=".3249" stop-color="#ffff0e"/><stop offset=".5736" stop-color="#ffe207"/><stop offset=".8503" stop-color="#ffc800"/><stop offset=".8503" stop-color="#ffc800"/><stop offset="1.0000" stop-color="#fb0"/></linearGradient><linearGradient id="i36" href="#ib"><stop offset=".0000" stop-color="#d9ff17"/><stop offset=".3096" stop-color="#ffff0f"/><stop offset=".5838" stop-color="#ffe007"/><stop offset=".8807" stop-color="#ffc400"/><stop offset=".8807" stop-color="#ffc400"/><stop offset="1.0000" stop-color="#ffba00"/></linearGradient><linearGradient id="i37" href="#ib"><stop offset=".0000" stop-color="#daff17"/><stop offset=".2995" stop-color="#ffff10"/><stop offset=".5838" stop-color="#ffde08"/><stop offset=".9061" stop-color="#ffc100"/><stop offset=".9061" stop-color="#ffc100"/><stop offset="1.0000" stop-color="#ffb900"/></linearGradient><linearGradient id="i38" href="#ib"><stop offset=".0000" stop-color="#dcff18"/><stop offset=".2843" stop-color="#ff1"/><stop offset=".5888" stop-color="#ffdc08"/><stop offset=".9315" stop-color="#ffbe00"/><stop offset=".9315" stop-color="#ffbd00"/><stop offset="1.0000" stop-color="#ffb800"/></linearGradient><linearGradient id="i39" href="#ib"><stop offset=".0000" stop-color="#ddff19"/><stop offset=".2741" stop-color="#ffff12"/><stop offset=".5939" stop-color="#ffdb09"/><stop offset=".9619" stop-color="#ffba00"/><stop offset=".9619" stop-color="#ffba00"/><stop offset="1.0000" stop-color="#ffb700"/></linearGradient><linearGradient id="i40" href="#ib"><stop offset=".0000" stop-color="#dfff1a"/><stop offset=".2589" stop-color="#ffff14"/><stop offset=".5990" stop-color="#ffd909"/><stop offset=".9873" stop-color="#ffb700"/><stop offset=".9873" stop-color="#ffb700"/><stop offset="1.0000" stop-color="#ffb600"/></linearGradient><linearGradient id="i41" href="#ib"><stop offset=".0000" stop-color="#e0ff1b"/><stop offset=".2487" stop-color="#ffff15"/><stop offset=".5990" stop-color="#ffd70a"/><stop offset="1.0000" stop-color="#ffb500"/></linearGradient><linearGradient id="i42" href="#ib"><stop offset=".0000" stop-color="#e2ff1c"/><stop offset=".2335" stop-color="#ffff16"/><stop offset=".5939" stop-color="#ffd60b"/><stop offset="1.0000" stop-color="#ffb301"/></linearGradient><linearGradient id="i43" href="#ib"><stop offset=".0000" stop-color="#e3ff1c"/><stop offset=".2234" stop-color="#ffff17"/><stop offset=".5838" stop-color="#ffd60b"/><stop offset="1.0000" stop-color="#ffb201"/></linearGradient><linearGradient id="i44" href="#ib"><stop offset=".0000" stop-color="#e4ff1d"/><stop offset=".2132" stop-color="#ffff18"/><stop offset=".5787" stop-color="#ffd60c"/><stop offset="1.0000" stop-color="#ffb202"/></linearGradient><clipPath id="insclip"><rect x="1348" y="380" width="197" height="133"/></clipPath><linearGradient id="rr" x1="0" y1="0" x2="0" y2="1"><stop offset="0" stop-color="#ff6464"/><stop offset="1" stop-color="#ff1e1e"/></linearGradient><linearGradient id="rg" x1="0" y1="0" x2="0" y2="1"><stop offset="0" stop-color="#5cb45c"/><stop offset="1" stop-color="#0a800a"/></linearGradient><linearGradient id="rb" x1="0" y1="0" x2="0" y2="1"><stop offset="0" stop-color="#6c6cff"/><stop offset="1" stop-color="#3838ff"/></linearGradient><linearGradient id="th" x1="0" y1="0" x2="0" y2="1"><stop offset="0" stop-color="#3c3c3c"/><stop offset=".48" stop-color="#333"/><stop offset=".52" stop-color="#1c1c1c"/><stop offset="1" stop-color="#161616"/></linearGradient><linearGradient id="bbg" x1="0" y1="0" x2="0" y2="1"><stop offset="0" stop-color="#2c2c2c"/><stop offset="1" stop-color="#1e1e1e"/></linearGradient><linearGradient id="btn" x1="0" y1="0" x2="0" y2="1"><stop offset="0" stop-color="#969696"/><stop offset=".08" stop-color="#8a8a8a"/><stop offset="1" stop-color="#686868"/></linearGradient><linearGradient id="btn2" x1="0" y1="0" x2="0" y2="1"><stop offset="0" stop-color="#9a9a9a"/><stop offset=".1" stop-color="#8c8c8c"/><stop offset="1" stop-color="#707070"/></linearGradient><linearGradient id="circ" x1="0" y1="0" x2="0" y2="1"><stop offset="0" stop-color="#5e5e5e"/><stop offset="1" stop-color="#8c8c8c"/></linearGradient><linearGradient id="stp" x1="0" y1="0" x2="0" y2="1"><stop offset="0" stop-color="#b4b4b4"/><stop offset=".5" stop-color="#a4a4a4"/><stop offset=".52" stop-color="#8c8c8c"/><stop offset="1" stop-color="#808080"/></linearGradient></defs>
<rect width="1558" height="866" fill="#323232"/>
<text x="4.2" y="63.8" font-size="37.3" fill="#f6f6f6" textLength="311.5" lengthAdjust="spacingAndGlyphs" stroke="#f6f6f6" stroke-width=".35">Saturation Sweeps</text>
<text x="112.5" y="114.8" font-size="19" fill="#f2f2f2" textLength="101.0" lengthAdjust="spacingAndGlyphs" stroke="#f2f2f2" stroke-width=".25">dE Formula:</text>
<rect x="220.5" y="96.2" width="127" height="23.8" rx="2" fill="url(#dd)" stroke="#262626" stroke-width="1"/><text x="225.0" y="114.5" font-size="15.5" fill="#f0f0f0" textLength="33.0" lengthAdjust="spacingAndGlyphs">2000</text><path d="M333.9 105.9h9.2l-4.6 5.2z" fill="#000"/>
<text x="521.0" y="58.0" font-size="19" fill="#f2f2f2" textLength="56.5" lengthAdjust="spacingAndGlyphs" stroke="#f2f2f2" stroke-width=".25">Levels:</text>
<rect x="584.5" y="38.7" width="318" height="23.6" rx="2" fill="url(#dd)" stroke="#262626" stroke-width="1"/><text x="589.0" y="57.5" font-size="15.5" fill="#f0f0f0" textLength="84.0" lengthAdjust="spacingAndGlyphs">20% Sweeps</text><path d="M888.9 48.3h9.2l-4.6 5.2z" fill="#000"/>
<rect x="36.5" y="150.5" width="293.0" height="362.0" fill="#252525"/><path d="M76.5 150.5V512.5" stroke="#8e8e8e" stroke-width="1"/><path d="M115.5 150.5V512.5" stroke="#8e8e8e" stroke-width="1"/><path d="M154.5 150.5V512.5" stroke="#8e8e8e" stroke-width="1"/><path d="M193.5 150.5V512.5" stroke="#8e8e8e" stroke-width="1"/><path d="M232.5 150.5V512.5" stroke="#8e8e8e" stroke-width="1"/><path d="M271.5 150.5V512.5" stroke="#8e8e8e" stroke-width="1"/><path d="M310.5 150.5V512.5" stroke="#8e8e8e" stroke-width="1"/><path d="M36.5 512.5V150.5H329.5V512.5" stroke="#a4a4a4" stroke-width="1.8" fill="none"/><path d="M36.5 512.5H329.5" stroke="#a4a4a4" stroke-width="1.8" fill="none"/><text x="166.0" y="144.7" font-size="12.6" fill="#d6d6d6" text-anchor="middle" textLength="75.0" lengthAdjust="spacingAndGlyphs">DeltaE 2000</text><path d="M31.0 150.3H36.0" stroke="#d8d8d8" stroke-width="1.5"/><path d="M31.0 210.6H36.0" stroke="#d8d8d8" stroke-width="1.5"/><path d="M31.0 271.0H36.0" stroke="#d8d8d8" stroke-width="1.5"/><path d="M31.0 331.3H36.0" stroke="#d8d8d8" stroke-width="1.5"/><path d="M31.0 391.6H36.0" stroke="#d8d8d8" stroke-width="1.5"/><path d="M31.0 452.0H36.0" stroke="#d8d8d8" stroke-width="1.5"/><path d="M31.0 512.3H36.0" stroke="#d8d8d8" stroke-width="1.5"/><text x="35.5" y="186.0" font-size="12.2" fill="#d6d6d6" text-anchor="end" textLength="33.7" lengthAdjust="spacingAndGlyphs">100%</text><text x="35.5" y="246.3" font-size="12.2" fill="#d6d6d6" text-anchor="end" textLength="26.4" lengthAdjust="spacingAndGlyphs">80%</text><text x="35.5" y="306.6" font-size="12.2" fill="#d6d6d6" text-anchor="end" textLength="26.4" lengthAdjust="spacingAndGlyphs">60%</text><text x="35.5" y="367.0" font-size="12.2" fill="#d6d6d6" text-anchor="end" textLength="26.4" lengthAdjust="spacingAndGlyphs">40%</text><text x="35.5" y="427.3" font-size="12.2" fill="#d6d6d6" text-anchor="end" textLength="26.4" lengthAdjust="spacingAndGlyphs">20%</text><text x="35.5" y="487.6" font-size="12.2" fill="#d6d6d6" text-anchor="end" textLength="22.0" lengthAdjust="spacingAndGlyphs">100</text><path d="M36.5 512.5v6" stroke="#d8d8d8" stroke-width="2"/><text x="36.5" y="532.8" font-size="12.2" fill="#d6d6d6" text-anchor="middle" textLength="7.3" lengthAdjust="spacingAndGlyphs">0</text><path d="M76.5 512.5v6" stroke="#d8d8d8" stroke-width="2"/><text x="75.6" y="532.8" font-size="12.2" fill="#d6d6d6" text-anchor="middle" textLength="7.3" lengthAdjust="spacingAndGlyphs">2</text><path d="M115.5 512.5v6" stroke="#d8d8d8" stroke-width="2"/><text x="114.6" y="532.8" font-size="12.2" fill="#d6d6d6" text-anchor="middle" textLength="7.3" lengthAdjust="spacingAndGlyphs">4</text><path d="M154.5 512.5v6" stroke="#d8d8d8" stroke-width="2"/><text x="153.7" y="532.8" font-size="12.2" fill="#d6d6d6" text-anchor="middle" textLength="7.3" lengthAdjust="spacingAndGlyphs">6</text><path d="M193.5 512.5v6" stroke="#d8d8d8" stroke-width="2"/><text x="192.7" y="532.8" font-size="12.2" fill="#d6d6d6" text-anchor="middle" textLength="7.3" lengthAdjust="spacingAndGlyphs">8</text><path d="M232.5 512.5v6" stroke="#d8d8d8" stroke-width="2"/><text x="231.8" y="532.8" font-size="12.2" fill="#d6d6d6" text-anchor="middle" textLength="14.7" lengthAdjust="spacingAndGlyphs">10</text><path d="M271.5 512.5v6" stroke="#d8d8d8" stroke-width="2"/><text x="270.9" y="532.8" font-size="12.2" fill="#d6d6d6" text-anchor="middle" textLength="14.7" lengthAdjust="spacingAndGlyphs">12</text><path d="M310.5 512.5v6" stroke="#d8d8d8" stroke-width="2"/><text x="309.9" y="532.8" font-size="12.2" fill="#d6d6d6" text-anchor="middle" textLength="14.7" lengthAdjust="spacingAndGlyphs">14</text><rect x="36.8" y="156.7" width="67.6" height="4.7" fill="url(#b0)" stroke="#000" stroke-width="1.25"/><rect x="36.8" y="163.1" width="58.2" height="4.7" fill="url(#b1)" stroke="#000" stroke-width="1.25"/><rect x="36.8" y="169.5" width="38.1" height="4.7" fill="url(#b2)" stroke="#000" stroke-width="1.25"/><rect x="36.8" y="176.0" width="34.2" height="4.7" fill="url(#b3)" stroke="#000" stroke-width="1.25"/><rect x="36.8" y="182.4" width="56.2" height="4.7" fill="url(#b4)" stroke="#000" stroke-width="1.25"/><rect x="36.8" y="188.8" width="68.2" height="4.7" fill="url(#b5)" stroke="#000" stroke-width="1.25"/><rect x="36.8" y="217.0" width="53.3" height="4.7" fill="url(#b6)" stroke="#000" stroke-width="1.25"/><rect x="36.8" y="223.5" width="35.0" height="4.7" fill="url(#b7)" stroke="#000" stroke-width="1.25"/><rect x="36.8" y="229.9" width="27.1" height="4.7" fill="url(#b8)" stroke="#000" stroke-width="1.25"/><rect x="36.8" y="236.3" width="24.8" height="4.7" fill="url(#b9)" stroke="#000" stroke-width="1.25"/><rect x="36.8" y="242.7" width="43.9" height="4.7" fill="url(#b10)" stroke="#000" stroke-width="1.25"/><rect x="36.8" y="249.1" width="67.0" height="4.7" fill="url(#b11)" stroke="#000" stroke-width="1.25"/><rect x="36.8" y="277.4" width="51.9" height="4.7" fill="url(#b12)" stroke="#000" stroke-width="1.25"/><rect x="36.8" y="283.8" width="34.0" height="4.7" fill="url(#b13)" stroke="#000" stroke-width="1.25"/><rect x="36.8" y="290.2" width="19.9" height="4.7" fill="url(#b14)" stroke="#000" stroke-width="1.25"/><rect x="36.8" y="296.6" width="25.8" height="4.7" fill="url(#b15)" stroke="#000" stroke-width="1.25"/><rect x="36.8" y="303.0" width="43.9" height="4.7" fill="url(#b16)" stroke="#000" stroke-width="1.25"/><rect x="36.8" y="309.5" width="69.9" height="4.7" fill="url(#b17)" stroke="#000" stroke-width="1.25"/><rect x="36.8" y="337.7" width="50.0" height="4.7" fill="url(#b18)" stroke="#000" stroke-width="1.25"/><rect x="36.8" y="344.1" width="34.0" height="4.7" fill="url(#b19)" stroke="#000" stroke-width="1.25"/><rect x="36.8" y="350.5" width="23.8" height="4.7" fill="url(#b20)" stroke="#000" stroke-width="1.25"/><rect x="36.8" y="357.0" width="37.7" height="4.7" fill="url(#b21)" stroke="#000" stroke-width="1.25"/><rect x="36.8" y="363.4" width="49.0" height="4.7" fill="url(#b22)" stroke="#000" stroke-width="1.25"/><rect x="36.8" y="369.8" width="75.2" height="4.7" fill="url(#b23)" stroke="#000" stroke-width="1.25"/><rect x="36.8" y="398.0" width="59.6" height="4.7" fill="url(#b24)" stroke="#000" stroke-width="1.25"/><rect x="36.8" y="404.5" width="48.0" height="4.7" fill="url(#b25)" stroke="#000" stroke-width="1.25"/><rect x="36.8" y="410.9" width="53.9" height="4.7" fill="url(#b26)" stroke="#000" stroke-width="1.25"/><rect x="36.8" y="417.3" width="59.2" height="4.7" fill="url(#b27)" stroke="#000" stroke-width="1.25"/><rect x="36.8" y="423.7" width="64.1" height="4.7" fill="url(#b28)" stroke="#000" stroke-width="1.25"/><rect x="36.8" y="430.1" width="93.0" height="4.7" fill="url(#b29)" stroke="#000" stroke-width="1.25"/><rect x="36.8" y="496.9" width="128.5" height="4.7" fill="url(#bw)" stroke="#000" stroke-width="1.25"/>
<rect x="379.5" y="99.5" width="135.0" height="265.0" fill="#252525"/><path d="M379.5 143.5H514.5" stroke="#8e8e8e" stroke-width="1"/><path d="M379.5 188.5H514.5" stroke="#8e8e8e" stroke-width="1"/><path d="M379.5 233.5H514.5" stroke="#8e8e8e" stroke-width="1"/><path d="M379.5 276.5H514.5" stroke="#8e8e8e" stroke-width="1"/><path d="M379.5 321.5H514.5" stroke="#8e8e8e" stroke-width="1"/><path d="M379.5 364.5V99.5H514.5V364.5" stroke="#a4a4a4" stroke-width="1.8" fill="none"/><path d="M373.5 364.5H514.5" stroke="#a4a4a4" stroke-width="1.8" fill="none"/><path d="M379.5 364.5v6M514.5 364.5v6" stroke="#d8d8d8" stroke-width="2"/><path d="M374.0 99.5H379.0" stroke="#d8d8d8" stroke-width="2"/><text x="373.0" y="104.6" font-size="12.2" fill="#d6d6d6" text-anchor="end" textLength="14.7" lengthAdjust="spacingAndGlyphs">15</text><path d="M374.0 143.5H379.0" stroke="#d8d8d8" stroke-width="2"/><text x="373.0" y="148.1" font-size="12.2" fill="#d6d6d6" text-anchor="end" textLength="14.7" lengthAdjust="spacingAndGlyphs">10</text><path d="M374.0 188.5H379.0" stroke="#d8d8d8" stroke-width="2"/><text x="373.0" y="193.1" font-size="12.2" fill="#d6d6d6" text-anchor="end" textLength="7.3" lengthAdjust="spacingAndGlyphs">5</text><path d="M374.0 233.5H379.0" stroke="#d8d8d8" stroke-width="2"/><text x="373.0" y="238.1" font-size="12.2" fill="#d6d6d6" text-anchor="end" textLength="7.3" lengthAdjust="spacingAndGlyphs">0</text><path d="M374.0 276.5H379.0" stroke="#d8d8d8" stroke-width="2"/><text x="373.0" y="281.1" font-size="12.2" fill="#d6d6d6" text-anchor="end" textLength="11.7" lengthAdjust="spacingAndGlyphs">-5</text><path d="M374.0 321.5H379.0" stroke="#d8d8d8" stroke-width="2"/><text x="373.0" y="326.1" font-size="12.2" fill="#d6d6d6" text-anchor="end" textLength="19.0" lengthAdjust="spacingAndGlyphs">-10</text><text x="373.0" y="371.4" font-size="12.2" fill="#d6d6d6" text-anchor="end" textLength="19.0" lengthAdjust="spacingAndGlyphs">-15</text><text x="434.5" y="93.7" font-size="12.6" fill="#d6d6d6" text-anchor="middle" textLength="42.7" lengthAdjust="spacingAndGlyphs">Delta L</text><text x="447.0" y="379.6" font-size="12.2" fill="#d6d6d6" text-anchor="middle" textLength="33.7" lengthAdjust="spacingAndGlyphs">100%</text><rect x="394.0" y="232.4" width="106.0" height="24.1" fill="url(#yb)" stroke="#000" stroke-width="1.2"/>
<rect x="564.5" y="99.5" width="135.0" height="265.0" fill="#252525"/><path d="M564.5 143.5H699.5" stroke="#8e8e8e" stroke-width="1"/><path d="M564.5 188.5H699.5" stroke="#8e8e8e" stroke-width="1"/><path d="M564.5 233.5H699.5" stroke="#8e8e8e" stroke-width="1"/><path d="M564.5 276.5H699.5" stroke="#8e8e8e" stroke-width="1"/><path d="M564.5 321.5H699.5" stroke="#8e8e8e" stroke-width="1"/><path d="M564.5 364.5V99.5H699.5V364.5" stroke="#a4a4a4" stroke-width="1.8" fill="none"/><path d="M558.5 364.5H699.5" stroke="#a4a4a4" stroke-width="1.8" fill="none"/><path d="M564.5 364.5v6M699.5 364.5v6" stroke="#d8d8d8" stroke-width="2"/><path d="M559.0 99.5H564.0" stroke="#d8d8d8" stroke-width="2"/><text x="558.0" y="104.6" font-size="12.2" fill="#d6d6d6" text-anchor="end" textLength="14.7" lengthAdjust="spacingAndGlyphs">15</text><path d="M559.0 143.5H564.0" stroke="#d8d8d8" stroke-width="2"/><text x="558.0" y="148.1" font-size="12.2" fill="#d6d6d6" text-anchor="end" textLength="14.7" lengthAdjust="spacingAndGlyphs">10</text><path d="M559.0 188.5H564.0" stroke="#d8d8d8" stroke-width="2"/><text x="558.0" y="193.1" font-size="12.2" fill="#d6d6d6" text-anchor="end" textLength="7.3" lengthAdjust="spacingAndGlyphs">5</text><path d="M559.0 233.5H564.0" stroke="#d8d8d8" stroke-width="2"/><text x="558.0" y="238.1" font-size="12.2" fill="#d6d6d6" text-anchor="end" textLength="7.3" lengthAdjust="spacingAndGlyphs">0</text><path d="M559.0 276.5H564.0" stroke="#d8d8d8" stroke-width="2"/><text x="558.0" y="281.1" font-size="12.2" fill="#d6d6d6" text-anchor="end" textLength="11.7" lengthAdjust="spacingAndGlyphs">-5</text><path d="M559.0 321.5H564.0" stroke="#d8d8d8" stroke-width="2"/><text x="558.0" y="326.1" font-size="12.2" fill="#d6d6d6" text-anchor="end" textLength="19.0" lengthAdjust="spacingAndGlyphs">-10</text><text x="558.0" y="371.4" font-size="12.2" fill="#d6d6d6" text-anchor="end" textLength="19.0" lengthAdjust="spacingAndGlyphs">-15</text><text x="619.5" y="93.7" font-size="12.6" fill="#d6d6d6" text-anchor="middle" textLength="45.0" lengthAdjust="spacingAndGlyphs">Delta C</text><text x="632.0" y="379.6" font-size="12.2" fill="#d6d6d6" text-anchor="middle" textLength="33.7" lengthAdjust="spacingAndGlyphs">100%</text><rect x="579.0" y="158.6" width="106.0" height="73.8" fill="url(#yb)" stroke="#000" stroke-width="1.2"/>
<rect x="749.5" y="99.5" width="136.0" height="265.0" fill="#252525"/><path d="M749.5 143.5H885.5" stroke="#8e8e8e" stroke-width="1"/><path d="M749.5 188.5H885.5" stroke="#8e8e8e" stroke-width="1"/><path d="M749.5 233.5H885.5" stroke="#8e8e8e" stroke-width="1"/><path d="M749.5 276.5H885.5" stroke="#8e8e8e" stroke-width="1"/><path d="M749.5 321.5H885.5" stroke="#8e8e8e" stroke-width="1"/><path d="M749.5 364.5V99.5H885.5V364.5" stroke="#a4a4a4" stroke-width="1.8" fill="none"/><path d="M743.5 364.5H885.5" stroke="#a4a4a4" stroke-width="1.8" fill="none"/><path d="M749.5 364.5v6M885.5 364.5v6" stroke="#d8d8d8" stroke-width="2"/><path d="M744.0 99.5H749.0" stroke="#d8d8d8" stroke-width="2"/><text x="743.0" y="104.6" font-size="12.2" fill="#d6d6d6" text-anchor="end" textLength="14.7" lengthAdjust="spacingAndGlyphs">15</text><path d="M744.0 143.5H749.0" stroke="#d8d8d8" stroke-width="2"/><text x="743.0" y="148.1" font-size="12.2" fill="#d6d6d6" text-anchor="end" textLength="14.7" lengthAdjust="spacingAndGlyphs">10</text><path d="M744.0 188.5H749.0" stroke="#d8d8d8" stroke-width="2"/><text x="743.0" y="193.1" font-size="12.2" fill="#d6d6d6" text-anchor="end" textLength="7.3" lengthAdjust="spacingAndGlyphs">5</text><path d="M744.0 233.5H749.0" stroke="#d8d8d8" stroke-width="2"/><text x="743.0" y="238.1" font-size="12.2" fill="#d6d6d6" text-anchor="end" textLength="7.3" lengthAdjust="spacingAndGlyphs">0</text><path d="M744.0 276.5H749.0" stroke="#d8d8d8" stroke-width="2"/><text x="743.0" y="281.1" font-size="12.2" fill="#d6d6d6" text-anchor="end" textLength="11.7" lengthAdjust="spacingAndGlyphs">-5</text><path d="M744.0 321.5H749.0" stroke="#d8d8d8" stroke-width="2"/><text x="743.0" y="326.1" font-size="12.2" fill="#d6d6d6" text-anchor="end" textLength="19.0" lengthAdjust="spacingAndGlyphs">-10</text><text x="743.0" y="371.4" font-size="12.2" fill="#d6d6d6" text-anchor="end" textLength="19.0" lengthAdjust="spacingAndGlyphs">-15</text><text x="804.0" y="93.7" font-size="12.6" fill="#d6d6d6" text-anchor="middle" textLength="45.0" lengthAdjust="spacingAndGlyphs">Delta H</text><text x="817.5" y="379.6" font-size="12.2" fill="#d6d6d6" text-anchor="middle" textLength="33.7" lengthAdjust="spacingAndGlyphs">100%</text><rect x="764.0" y="188.2" width="107.0" height="44.2" fill="url(#yb)" stroke="#000" stroke-width="1.2"/>
<rect x="348" y="389" width="555" height="153" fill="#000"/><rect x="367.5" y="395.5" width="93" height="62.5" fill="#b1bea5"/><rect x="367.5" y="458" width="93" height="61.5" fill="#c0c0a2"/><rect x="367.5" y="395.5" width="93" height="124" fill="none" stroke="#fff" stroke-width="1"/><text x="414.0" y="534.3" font-size="11.5" fill="#fff" text-anchor="middle">20%</text><rect x="476.5" y="395.5" width="93" height="62.5" fill="#b1be87"/><rect x="476.5" y="458" width="93" height="61.5" fill="#c0c087"/><rect x="476.5" y="395.5" width="93" height="124" fill="none" stroke="#fff" stroke-width="1"/><text x="523.0" y="534.3" font-size="11.5" fill="#fff" text-anchor="middle">40%</text><rect x="584.5" y="395.5" width="93" height="62.5" fill="#b0bd6c"/><rect x="584.5" y="458" width="93" height="61.5" fill="#c0c06e"/><rect x="584.5" y="395.5" width="93" height="124" fill="none" stroke="#fff" stroke-width="1"/><text x="631.0" y="534.3" font-size="11.5" fill="#fff" text-anchor="middle">60%</text><rect x="693.5" y="395.5" width="93" height="62.5" fill="#afbc46"/><rect x="693.5" y="458" width="93" height="61.5" fill="#c1c050"/><rect x="693.5" y="395.5" width="93" height="124" fill="none" stroke="#fff" stroke-width="1"/><text x="740.0" y="534.3" font-size="11.5" fill="#fff" text-anchor="middle">80%</text><rect x="802.5" y="395.5" width="93" height="62.5" fill="#b2be00"/><rect x="802.5" y="458" width="93" height="61.5" fill="#c5be2d"/><rect x="802.5" y="395.5" width="93" height="124" fill="none" stroke="#fff" stroke-width="1"/><text x="849.0" y="534.3" font-size="11.5" fill="#fff" text-anchor="middle">100%</text><text transform="translate(359.5 439) rotate(-90)" font-size="11.8" fill="#fff" stroke="#fff" stroke-width=".3">Actual</text><text transform="translate(359.5 509) rotate(-90)" font-size="11.8" fill="#fff" stroke="#fff" stroke-width=".3">Target</text>
<path d="M910 31.2H1560V554.8H910ZM916.4 38.2V547.4H1554.2V38.2Z" fill="#c8c40a" fill-rule="evenodd"/><rect x="1557" y="31.2" width="1" height="523.6" fill="#9c9a14"/><rect x="951.5" y="59.5" width="600" height="461.5" fill="#252525"/><g clip-path="url(#locus)"><rect x="984" y="68" width="43" height="2" fill="url(#c0)"/><rect x="972" y="70" width="83" height="2" fill="url(#c1)"/><rect x="966" y="72" width="109" height="2" fill="url(#c2)"/><rect x="963" y="74" width="131" height="2" fill="url(#c3)"/><rect x="960" y="76" width="153" height="2" fill="url(#c4)"/><rect x="958" y="78" width="173" height="2" fill="url(#c5)"/><rect x="957" y="80" width="191" height="2" fill="url(#c6)"/><rect x="956" y="82" width="210" height="2" fill="url(#c7)"/><rect x="955" y="84" width="228" height="2" fill="url(#c8)"/><rect x="954" y="86" width="247" height="2" fill="url(#c9)"/><rect x="953" y="88" width="265" height="2" fill="url(#c10)"/><rect x="952" y="90" width="283" height="2" fill="url(#c11)"/><rect x="952" y="92" width="301" height="2" fill="url(#c12)"/><rect x="952" y="94" width="318" height="2" fill="url(#c13)"/><rect x="952" y="96" width="336" height="2" fill="url(#c14)"/><rect x="952" y="98" width="353" height="2" fill="url(#c15)"/><rect x="952" y="100" width="370" height="2" fill="url(#c16)"/><rect x="952" y="102" width="388" height="2" fill="url(#c17)"/><rect x="952" y="104" width="405" height="2" fill="url(#c18)"/><rect x="952" y="106" width="423" height="2" fill="url(#c19)"/><rect x="952" y="108" width="440" height="2" fill="url(#c20)"/><rect x="952" y="110" width="458" height="2" fill="url(#c21)"/><rect x="952" y="112" width="475" height="2" fill="url(#c22)"/><rect x="952" y="114" width="492" height="2" fill="url(#c23)"/><rect x="952" y="116" width="510" height="2" fill="url(#c24)"/><rect x="952" y="118" width="527" height="2" fill="url(#c25)"/><rect x="952" y="120" width="545" height="2" fill="url(#c26)"/><rect x="952" y="122" width="562" height="2" fill="url(#c27)"/><rect x="953" y="124" width="578" height="2" fill="url(#c28)"/><rect x="953" y="126" width="596" height="2" fill="url(#c29)"/><rect x="953" y="128" width="599" height="2" fill="url(#c30)"/><rect x="954" y="130" width="598" height="2" fill="url(#c31)"/><rect x="954" y="132" width="598" height="2" fill="url(#c32)"/><rect x="955" y="134" width="597" height="2" fill="url(#c33)"/><rect x="955" y="136" width="597" height="2" fill="url(#c34)"/><rect x="955" y="138" width="597" height="2" fill="url(#c35)"/><rect x="956" y="140" width="596" height="2" fill="url(#c36)"/><rect x="956" y="142" width="596" height="2" fill="url(#c37)"/><rect x="957" y="144" width="595" height="2" fill="url(#c38)"/><rect x="958" y="146" width="594" height="2" fill="url(#c39)"/><rect x="958" y="148" width="594" height="2" fill="url(#c40)"/><rect x="959" y="150" width="593" height="2" fill="url(#c41)"/><rect x="959" y="152" width="593" height="2" fill="url(#c42)"/><rect x="960" y="154" width="592" height="2" fill="url(#c43)"/><rect x="960" y="156" width="591" height="2" fill="url(#c44)"/><rect x="961" y="158" width="588" height="2" fill="url(#c45)"/><rect x="962" y="160" width="585" height="2" fill="url(#c46)"/><rect x="962" y="162" width="583" height="2" fill="url(#c47)"/><rect x="963" y="164" width="580" height="2" fill="url(#c48)"/><rect x="964" y="166" width="577" height="2" fill="url(#c49)"/><rect x="964" y="168" width="575" height="2" fill="url(#c50)"/><rect x="965" y="170" width="572" height="2" fill="url(#c51)"/><rect x="966" y="172" width="569" height="2" fill="url(#c52)"/><rect x="966" y="174" width="567" height="2" fill="url(#c53)"/><rect x="967" y="176" width="564" height="2" fill="url(#c54)"/><rect x="968" y="178" width="561" height="2" fill="url(#c55)"/><rect x="968" y="180" width="559" height="2" fill="url(#c56)"/><rect x="969" y="182" width="556" height="2" fill="url(#c57)"/><rect x="970" y="184" width="553" height="2" fill="url(#c58)"/><rect x="971" y="186" width="550" height="2" fill="url(#c59)"/><rect x="971" y="188" width="549" height="2" fill="url(#c60)"/><rect x="972" y="190" width="546" height="2" fill="url(#c61)"/><rect x="973" y="192" width="543" height="2" fill="url(#c62)"/><rect x="974" y="194" width="540" height="2" fill="url(#c63)"/><rect x="974" y="196" width="538" height="2" fill="url(#c64)"/><rect x="975" y="198" width="535" height="2" fill="url(#c65)"/><rect x="976" y="200" width="532" height="2" fill="url(#c66)"/><rect x="977" y="202" width="529" height="2" fill="url(#c67)"/><rect x="978" y="204" width="526" height="2" fill="url(#c68)"/><rect x="979" y="206" width="523" height="2" fill="url(#c69)"/><rect x="979" y="208" width="521" height="2" fill="url(#c70)"/><rect x="980" y="210" width="518" height="2" fill="url(#c71)"/><rect x="981" y="212" width="515" height="2" fill="url(#c72)"/><rect x="982" y="214" width="512" height="2" fill="url(#c73)"/><rect x="983" y="216" width="509" height="2" fill="url(#c74)"/><rect x="984" y="218" width="506" height="2" fill="url(#c75)"/><rect x="984" y="220" width="504" height="2" fill="url(#c76)"/><rect x="985" y="222" width="501" height="2" fill="url(#c77)"/><rect x="986" y="224" width="499" height="2" fill="url(#c78)"/><rect x="987" y="226" width="496" height="2" fill="url(#c79)"/><rect x="988" y="228" width="493" height="2" fill="url(#c80)"/><rect x="989" y="230" width="490" height="2" fill="url(#c81)"/><rect x="990" y="232" width="487" height="2" fill="url(#c82)"/><rect x="991" y="234" width="484" height="2" fill="url(#c83)"/><rect x="992" y="236" width="481" height="2" fill="url(#c84)"/><rect x="992" y="238" width="479" height="2" fill="url(#c85)"/><rect x="993" y="240" width="476" height="2" fill="url(#c86)"/><rect x="994" y="242" width="473" height="2" fill="url(#c87)"/><rect x="995" y="244" width="470" height="2" fill="url(#c88)"/><rect x="996" y="246" width="467" height="2" fill="url(#c89)"/><rect x="997" y="248" width="464" height="2" fill="url(#c90)"/><rect x="998" y="250" width="461" height="2" fill="url(#c91)"/><rect x="999" y="252" width="458" height="2" fill="url(#c92)"/><rect x="1000" y="254" width="455" height="2" fill="url(#c93)"/><rect x="1001" y="256" width="452" height="2" fill="url(#c94)"/><rect x="1002" y="258" width="449" height="2" fill="url(#c95)"/><rect x="1003" y="260" width="447" height="2" fill="url(#c96)"/><rect x="1004" y="262" width="444" height="2" fill="url(#c97)"/><rect x="1005" y="264" width="441" height="2" fill="url(#c98)"/><rect x="1006" y="266" width="438" height="2" fill="url(#c99)"/><rect x="1007" y="268" width="435" height="2" fill="url(#c100)"/><rect x="1008" y="270" width="432" height="2" fill="url(#c101)"/><rect x="1010" y="272" width="428" height="2" fill="url(#c102)"/><rect x="1011" y="274" width="425" height="2" fill="url(#c103)"/><rect x="1012" y="276" width="422" height="2" fill="url(#c104)"/><rect x="1013" y="278" width="419" height="2" fill="url(#c105)"/><rect x="1014" y="280" width="416" height="2" fill="url(#c106)"/><rect x="1015" y="282" width="413" height="2" fill="url(#c107)"/><rect x="1016" y="284" width="410" height="2" fill="url(#c108)"/><rect x="1017" y="286" width="407" height="2" fill="url(#c109)"/><rect x="1018" y="288" width="404" height="2" fill="url(#c110)"/><rect x="1019" y="290" width="401" height="2" fill="url(#c111)"/><rect x="1021" y="292" width="397" height="2" fill="url(#c112)"/><rect x="1022" y="294" width="394" height="2" fill="url(#c113)"/><rect x="1023" y="296" width="391" height="2" fill="url(#c114)"/><rect x="1024" y="298" width="389" height="2" fill="url(#c115)"/><rect x="1025" y="300" width="386" height="2" fill="url(#c116)"/><rect x="1026" y="302" width="383" height="2" fill="url(#c117)"/><rect x="1027" y="304" width="380" height="2" fill="url(#c118)"/><rect x="1029" y="306" width="376" height="2" fill="url(#c119)"/><rect x="1030" y="308" width="373" height="2" fill="url(#c120)"/><rect x="1031" y="310" width="370" height="2" fill="url(#c121)"/><rect x="1032" y="312" width="367" height="2" fill="url(#c122)"/><rect x="1033" y="314" width="364" height="2" fill="url(#c123)"/><rect x="1035" y="316" width="360" height="2" fill="url(#c124)"/><rect x="1036" y="318" width="357" height="2" fill="url(#c125)"/><rect x="1037" y="320" width="354" height="2" fill="url(#c126)"/><rect x="1038" y="322" width="351" height="2" fill="url(#c127)"/><rect x="1039" y="324" width="348" height="2" fill="url(#c128)"/><rect x="1041" y="326" width="344" height="2" fill="url(#c129)"/><rect x="1042" y="328" width="341" height="2" fill="url(#c130)"/><rect x="1043" y="330" width="338" height="2" fill="url(#c131)"/><rect x="1044" y="332" width="335" height="2" fill="url(#c132)"/><rect x="1045" y="334" width="333" height="2" fill="url(#c133)"/><rect x="1047" y="336" width="329" height="2" fill="url(#c134)"/><rect x="1048" y="338" width="326" height="2" fill="url(#c135)"/><rect x="1049" y="340" width="323" height="2" fill="url(#c136)"/><rect x="1050" y="342" width="320" height="2" fill="url(#c137)"/><rect x="1052" y="344" width="316" height="2" fill="url(#c138)"/><rect x="1053" y="346" width="313" height="2" fill="url(#c139)"/><rect x="1054" y="348" width="310" height="2" fill="url(#c140)"/><rect x="1056" y="350" width="306" height="2" fill="url(#c141)"/><rect x="1057" y="352" width="303" height="2" fill="url(#c142)"/><rect x="1058" y="354" width="300" height="2" fill="url(#c143)"/><rect x="1059" y="356" width="297" height="2" fill="url(#c144)"/><rect x="1061" y="358" width="293" height="2" fill="url(#c145)"/><rect x="1062" y="360" width="290" height="2" fill="url(#c146)"/><rect x="1063" y="362" width="287" height="2" fill="url(#c147)"/><rect x="1065" y="364" width="283" height="2" fill="url(#c148)"/><rect x="1066" y="366" width="280" height="2" fill="url(#c149)"/><rect x="1067" y="368" width="277" height="2" fill="url(#c150)"/><rect x="1069" y="370" width="274" height="2" fill="url(#c151)"/><rect x="1070" y="372" width="271" height="2" fill="url(#c152)"/><rect x="1071" y="374" width="268" height="2" fill="url(#c153)"/><rect x="1073" y="376" width="264" height="2" fill="url(#c154)"/><rect x="1074" y="378" width="261" height="2" fill="url(#c155)"/><rect x="1076" y="380" width="257" height="2" fill="url(#c156)"/><rect x="1077" y="382" width="254" height="2" fill="url(#c157)"/><rect x="1079" y="384" width="250" height="2" fill="url(#c158)"/><rect x="1080" y="386" width="247" height="2" fill="url(#c159)"/><rect x="1081" y="388" width="244" height="2" fill="url(#c160)"/><rect x="1083" y="390" width="240" height="2" fill="url(#c161)"/><rect x="1084" y="392" width="237" height="2" fill="url(#c162)"/><rect x="1086" y="394" width="233" height="2" fill="url(#c163)"/><rect x="1087" y="396" width="230" height="2" fill="url(#c164)"/><rect x="1089" y="398" width="226" height="2" fill="url(#c165)"/><rect x="1090" y="400" width="223" height="2" fill="url(#c166)"/><rect x="1092" y="402" width="219" height="2" fill="url(#c167)"/><rect x="1093" y="404" width="216" height="2" fill="url(#c168)"/><rect x="1095" y="406" width="213" height="2" fill="url(#c169)"/><rect x="1096" y="408" width="210" height="2" fill="url(#c170)"/><rect x="1098" y="410" width="206" height="2" fill="url(#c171)"/><rect x="1100" y="412" width="202" height="2" fill="url(#c172)"/><rect x="1101" y="414" width="199" height="2" fill="url(#c173)"/><rect x="1103" y="416" width="195" height="2" fill="url(#c174)"/><rect x="1104" y="418" width="192" height="2" fill="url(#c175)"/><rect x="1106" y="420" width="188" height="2" fill="url(#c176)"/><rect x="1108" y="422" width="184" height="2" fill="url(#c177)"/><rect x="1109" y="424" width="181" height="2" fill="url(#c178)"/><rect x="1111" y="426" width="177" height="2" fill="url(#c179)"/><rect x="1113" y="428" width="173" height="2" fill="url(#c180)"/><rect x="1115" y="430" width="169" height="2" fill="url(#c181)"/><rect x="1116" y="432" width="166" height="2" fill="url(#c182)"/><rect x="1118" y="434" width="162" height="2" fill="url(#c183)"/><rect x="1120" y="436" width="158" height="2" fill="url(#c184)"/><rect x="1122" y="438" width="154" height="2" fill="url(#c185)"/><rect x="1124" y="440" width="150" height="2" fill="url(#c186)"/><rect x="1126" y="442" width="147" height="2" fill="url(#c187)"/><rect x="1128" y="444" width="143" height="2" fill="url(#c188)"/><rect x="1130" y="446" width="139" height="2" fill="url(#c189)"/><rect x="1132" y="448" width="135" height="2" fill="url(#c190)"/><rect x="1134" y="450" width="131" height="2" fill="url(#c191)"/><rect x="1136" y="452" width="127" height="2" fill="url(#c192)"/><rect x="1138" y="454" width="123" height="2" fill="url(#c193)"/><rect x="1140" y="456" width="119" height="2" fill="url(#c194)"/><rect x="1142" y="458" width="115" height="2" fill="url(#c195)"/><rect x="1144" y="460" width="111" height="2" fill="url(#c196)"/><rect x="1147" y="462" width="106" height="2" fill="url(#c197)"/><rect x="1149" y="464" width="102" height="2" fill="url(#c198)"/><rect x="1151" y="466" width="98" height="2" fill="url(#c199)"/><rect x="1154" y="468" width="93" height="2" fill="url(#c200)"/><rect x="1156" y="470" width="89" height="2" fill="url(#c201)"/><rect x="1158" y="472" width="85" height="2" fill="url(#c202)"/><rect x="1161" y="474" width="80" height="2" fill="url(#c203)"/><rect x="1163" y="476" width="76" height="2" fill="url(#c204)"/><rect x="1166" y="478" width="72" height="2" fill="url(#c205)"/><rect x="1168" y="480" width="68" height="2" fill="url(#c206)"/><rect x="1170" y="482" width="64" height="2" fill="url(#c207)"/><rect x="1173" y="484" width="59" height="2" fill="url(#c208)"/><rect x="1175" y="486" width="55" height="2" fill="url(#c209)"/><rect x="1178" y="488" width="50" height="2" fill="url(#c210)"/><rect x="1180" y="490" width="46" height="2" fill="url(#c211)"/><rect x="1182" y="492" width="42" height="2" fill="url(#c212)"/><rect x="1185" y="494" width="37" height="2" fill="url(#c213)"/><rect x="1187" y="496" width="33" height="2" fill="url(#c214)"/><rect x="1189" y="498" width="29" height="2" fill="url(#c215)"/><rect x="1192" y="500" width="24" height="2" fill="url(#c216)"/><rect x="1194" y="502" width="20" height="2" fill="url(#c217)"/><rect x="1197" y="504" width="15" height="2" fill="url(#c218)"/><rect x="1200" y="506" width="10" height="2" fill="url(#c219)"/></g><path d="M1207.5 507.3 L1207.4 507.3 L1207.4 507.3 L1207.4 507.3 L1207.3 507.3 L1207.3 507.3 L1207.2 507.3 L1207.2 507.4 L1207.2 507.4 L1207.1 507.5 L1207.0 507.5 L1206.9 507.4 L1206.8 507.4 L1206.7 507.4 L1206.7 507.4 L1206.6 507.5 L1206.6 507.5 L1206.5 507.6 L1206.5 507.7 L1206.4 507.7 L1206.4 507.8 L1206.3 507.8 L1206.2 507.8 L1206.1 507.8 L1206.0 507.8 L1205.9 507.8 L1205.7 507.8 L1205.6 507.8 L1205.4 507.8 L1205.3 507.8 L1205.1 507.8 L1205.0 507.8 L1204.8 507.8 L1204.6 507.8 L1204.5 507.7 L1204.3 507.7 L1204.1 507.6 L1203.8 507.6 L1203.6 507.4 L1203.2 507.3 L1202.8 507.0 L1202.4 506.8 L1201.9 506.5 L1201.4 506.1 L1200.8 505.7 L1200.3 505.3 L1199.6 504.9 L1199.0 504.4 L1198.3 503.8 L1197.5 503.3 L1196.7 502.6 L1195.8 501.9 L1194.9 501.2 L1193.9 500.4 L1192.8 499.6 L1191.7 498.6 L1190.6 497.7 L1189.4 496.6 L1188.1 495.5 L1186.8 494.4 L1185.4 493.2 L1183.9 492.0 L1182.4 490.7 L1180.8 489.4 L1179.1 488.0 L1177.3 486.5 L1175.4 484.9 L1173.4 483.2 L1171.3 481.5 L1169.1 479.7 L1166.8 477.8 L1164.4 475.8 L1162.0 473.8 L1159.4 471.7 L1156.7 469.4 L1154.0 467.1 L1151.1 464.6 L1148.1 462.0 L1144.9 459.2 L1141.7 456.2 L1138.4 453.1 L1135.0 449.8 L1131.4 446.3 L1127.7 442.6 L1123.8 438.6 L1119.7 434.1 L1115.3 429.1 L1110.6 423.6 L1105.6 417.5 L1100.3 411.0 L1094.9 404.0 L1089.3 396.7 L1083.6 388.9 L1077.7 380.7 L1071.7 372.1 L1065.5 363.0 L1059.2 353.5 L1052.9 343.5 L1046.5 333.3 L1040.1 322.7 L1033.7 312.0 L1027.3 301.1 L1021.0 290.1 L1014.8 279.1 L1008.8 267.9 L1003.1 256.8 L997.6 245.8 L992.5 234.9 L987.8 224.3 L983.3 213.9 L979.1 203.8 L975.2 194.1 L971.6 184.7 L968.4 175.7 L965.4 167.2 L962.9 159.2 L960.6 151.6 L958.6 144.5 L957.0 137.9 L955.6 131.7 L954.5 126.0 L953.6 120.6 L952.9 115.6 L952.5 111.0 L952.4 106.8 L952.4 102.9 L952.7 99.2 L953.1 95.8 L953.8 92.6 L954.6 89.7 L955.6 87.0 L956.8 84.5 L958.2 82.3 L959.7 80.3 L961.4 78.5 L963.3 76.9 L965.2 75.5 L967.3 74.3 L969.5 73.3 L971.7 72.5 L974.1 71.7 L976.5 71.2 L979.0 70.7 L981.6 70.4 L984.2 70.1 L986.9 69.8 L989.7 69.7 L992.5 69.5 L995.3 69.5 L998.2 69.4 L1001.0 69.4 L1003.8 69.4 L1006.7 69.4 L1009.5 69.4 L1012.3 69.5 L1015.2 69.5 L1018.1 69.6 L1021.1 69.8 L1024.0 69.9 L1027.1 70.1 L1030.1 70.2 L1033.2 70.4 L1036.4 70.7 L1039.6 70.9 L1042.8 71.1 L1046.1 71.4 L1049.5 71.7 L1052.9 72.0 L1056.4 72.3 L1059.9 72.6 L1063.5 73.0 L1067.2 73.3 L1071.0 73.7 L1074.8 74.1 L1078.7 74.5 L1082.7 74.9 L1086.8 75.3 L1090.9 75.8 L1095.1 76.2 L1099.5 76.7 L1103.9 77.2 L1108.4 77.7 L1113.0 78.2 L1117.7 78.7 L1122.5 79.2 L1127.3 79.8 L1132.3 80.4 L1137.4 80.9 L1142.6 81.5 L1147.9 82.1 L1153.3 82.7 L1158.8 83.4 L1164.4 84.0 L1170.1 84.7 L1175.9 85.3 L1181.8 86.0 L1187.8 86.7 L1194.0 87.4 L1200.2 88.1 L1206.5 88.8 L1212.9 89.6 L1219.5 90.3 L1226.1 91.1 L1232.8 91.9 L1239.6 92.6 L1246.5 93.4 L1253.5 94.2 L1260.5 95.0 L1267.6 95.9 L1274.8 96.7 L1282.0 97.5 L1289.3 98.3 L1296.6 99.2 L1303.9 100.0 L1311.3 100.9 L1318.5 101.7 L1325.7 102.6 L1332.8 103.4 L1339.9 104.2 L1346.9 105.0 L1353.9 105.8 L1360.9 106.6 L1367.9 107.4 L1374.8 108.2 L1381.6 109.0 L1388.3 109.7 L1394.8 110.5 L1401.2 111.2 L1407.4 111.9 L1413.5 112.6 L1419.4 113.3 L1425.2 114.0 L1430.9 114.6 L1436.4 115.2 L1441.8 115.9 L1447.0 116.5 L1452.0 117.0 L1456.8 117.6 L1461.5 118.1 L1466.1 118.7 L1470.4 119.2 L1474.6 119.7 L1478.7 120.1 L1482.7 120.6 L1486.5 121.0 L1490.1 121.4 L1493.6 121.8 L1497.0 122.2 L1500.3 122.6 L1503.5 123.0 L1506.7 123.3 L1509.7 123.7 L1512.7 124.0 L1515.5 124.3 L1518.3 124.7 L1521.0 125.0 L1523.6 125.3 L1526.1 125.6 L1528.6 125.8 L1530.9 126.1 L1533.1 126.4 L1535.3 126.6 L1537.4 126.9 L1539.4 127.1 L1541.3 127.3 L1543.1 127.5 L1544.8 127.7 L1546.4 127.9 L1547.8 128.1 L1549.2 128.2 L1550.6 128.4 L1551.9 128.5 L1553.1 128.7 L1554.3 128.8 L1555.4 128.9 L1556.5 129.1 L1557.5 129.2 L1558.4 129.3 L1559.3 129.4 L1560.1 129.5 L1560.9 129.6 L1561.6 129.6 L1562.2 129.7 L1562.8 129.8 L1563.3 129.8 L1563.8 129.9 L1564.3 130.0 L1564.8 130.0 L1565.3 130.1 L1565.8 130.1 L1566.2 130.2 L1566.6 130.2 L1567.0 130.3 L1567.4 130.3 L1567.8 130.4 L1568.1 130.4 L1568.5 130.4 L1568.9 130.5 L1569.3 130.5 L1569.6 130.6 L1570.0 130.6 L1570.4 130.7 L1570.7 130.7 L1571.1 130.7 L1571.4 130.8 L1571.7 130.8 L1572.0 130.8 L1572.2 130.9 L1572.3 130.9 L1572.5 130.9 L1572.6 130.9 L1572.8 130.9 L1572.9 130.9 L1573.0 131.0 L1573.1 131.0 L1573.2 131.0 L1573.2 131.0 L1573.3 131.0 L1573.4 131.0 L1573.4 131.0 L1573.4 131.0ZM1401.0 118.4 L1075.8 88.0 L1126.2 398.7Z" fill="#000" fill-opacity="0.4" fill-rule="evenodd" clip-path="url(#plotclip)"/><path d="M1207.5 507.3 L1207.4 507.3 L1207.4 507.3 L1207.4 507.3 L1207.3 507.3 L1207.3 507.3 L1207.2 507.3 L1207.2 507.4 L1207.2 507.4 L1207.1 507.5 L1207.0 507.5 L1206.9 507.4 L1206.8 507.4 L1206.7 507.4 L1206.7 507.4 L1206.6 507.5 L1206.6 507.5 L1206.5 507.6 L1206.5 507.7 L1206.4 507.7 L1206.4 507.8 L1206.3 507.8 L1206.2 507.8 L1206.1 507.8 L1206.0 507.8 L1205.9 507.8 L1205.7 507.8 L1205.6 507.8 L1205.4 507.8 L1205.3 507.8 L1205.1 507.8 L1205.0 507.8 L1204.8 507.8 L1204.6 507.8 L1204.5 507.7 L1204.3 507.7 L1204.1 507.6 L1203.8 507.6 L1203.6 507.4 L1203.2 507.3 L1202.8 507.0 L1202.4 506.8 L1201.9 506.5 L1201.4 506.1 L1200.8 505.7 L1200.3 505.3 L1199.6 504.9 L1199.0 504.4 L1198.3 503.8 L1197.5 503.3 L1196.7 502.6 L1195.8 501.9 L1194.9 501.2 L1193.9 500.4 L1192.8 499.6 L1191.7 498.6 L1190.6 497.7 L1189.4 496.6 L1188.1 495.5 L1186.8 494.4 L1185.4 493.2 L1183.9 492.0 L1182.4 490.7 L1180.8 489.4 L1179.1 488.0 L1177.3 486.5 L1175.4 484.9 L1173.4 483.2 L1171.3 481.5 L1169.1 479.7 L1166.8 477.8 L1164.4 475.8 L1162.0 473.8 L1159.4 471.7 L1156.7 469.4 L1154.0 467.1 L1151.1 464.6 L1148.1 462.0 L1144.9 459.2 L1141.7 456.2 L1138.4 453.1 L1135.0 449.8 L1131.4 446.3 L1127.7 442.6 L1123.8 438.6 L1119.7 434.1 L1115.3 429.1 L1110.6 423.6 L1105.6 417.5 L1100.3 411.0 L1094.9 404.0 L1089.3 396.7 L1083.6 388.9 L1077.7 380.7 L1071.7 372.1 L1065.5 363.0 L1059.2 353.5 L1052.9 343.5 L1046.5 333.3 L1040.1 322.7 L1033.7 312.0 L1027.3 301.1 L1021.0 290.1 L1014.8 279.1 L1008.8 267.9 L1003.1 256.8 L997.6 245.8 L992.5 234.9 L987.8 224.3 L983.3 213.9 L979.1 203.8 L975.2 194.1 L971.6 184.7 L968.4 175.7 L965.4 167.2 L962.9 159.2 L960.6 151.6 L958.6 144.5 L957.0 137.9 L955.6 131.7 L954.5 126.0 L953.6 120.6 L952.9 115.6 L952.5 111.0 L952.4 106.8 L952.4 102.9 L952.7 99.2 L953.1 95.8 L953.8 92.6 L954.6 89.7 L955.6 87.0 L956.8 84.5 L958.2 82.3 L959.7 80.3 L961.4 78.5 L963.3 76.9 L965.2 75.5 L967.3 74.3 L969.5 73.3 L971.7 72.5 L974.1 71.7 L976.5 71.2 L979.0 70.7 L981.6 70.4 L984.2 70.1 L986.9 69.8 L989.7 69.7 L992.5 69.5 L995.3 69.5 L998.2 69.4 L1001.0 69.4 L1003.8 69.4 L1006.7 69.4 L1009.5 69.4 L1012.3 69.5 L1015.2 69.5 L1018.1 69.6 L1021.1 69.8 L1024.0 69.9 L1027.1 70.1 L1030.1 70.2 L1033.2 70.4 L1036.4 70.7 L1039.6 70.9 L1042.8 71.1 L1046.1 71.4 L1049.5 71.7 L1052.9 72.0 L1056.4 72.3 L1059.9 72.6 L1063.5 73.0 L1067.2 73.3 L1071.0 73.7 L1074.8 74.1 L1078.7 74.5 L1082.7 74.9 L1086.8 75.3 L1090.9 75.8 L1095.1 76.2 L1099.5 76.7 L1103.9 77.2 L1108.4 77.7 L1113.0 78.2 L1117.7 78.7 L1122.5 79.2 L1127.3 79.8 L1132.3 80.4 L1137.4 80.9 L1142.6 81.5 L1147.9 82.1 L1153.3 82.7 L1158.8 83.4 L1164.4 84.0 L1170.1 84.7 L1175.9 85.3 L1181.8 86.0 L1187.8 86.7 L1194.0 87.4 L1200.2 88.1 L1206.5 88.8 L1212.9 89.6 L1219.5 90.3 L1226.1 91.1 L1232.8 91.9 L1239.6 92.6 L1246.5 93.4 L1253.5 94.2 L1260.5 95.0 L1267.6 95.9 L1274.8 96.7 L1282.0 97.5 L1289.3 98.3 L1296.6 99.2 L1303.9 100.0 L1311.3 100.9 L1318.5 101.7 L1325.7 102.6 L1332.8 103.4 L1339.9 104.2 L1346.9 105.0 L1353.9 105.8 L1360.9 106.6 L1367.9 107.4 L1374.8 108.2 L1381.6 109.0 L1388.3 109.7 L1394.8 110.5 L1401.2 111.2 L1407.4 111.9 L1413.5 112.6 L1419.4 113.3 L1425.2 114.0 L1430.9 114.6 L1436.4 115.2 L1441.8 115.9 L1447.0 116.5 L1452.0 117.0 L1456.8 117.6 L1461.5 118.1 L1466.1 118.7 L1470.4 119.2 L1474.6 119.7 L1478.7 120.1 L1482.7 120.6 L1486.5 121.0 L1490.1 121.4 L1493.6 121.8 L1497.0 122.2 L1500.3 122.6 L1503.5 123.0 L1506.7 123.3 L1509.7 123.7 L1512.7 124.0 L1515.5 124.3 L1518.3 124.7 L1521.0 125.0 L1523.6 125.3 L1526.1 125.6 L1528.6 125.8 L1530.9 126.1 L1533.1 126.4 L1535.3 126.6 L1537.4 126.9 L1539.4 127.1 L1541.3 127.3 L1543.1 127.5 L1544.8 127.7 L1546.4 127.9 L1547.8 128.1 L1549.2 128.2 L1550.6 128.4 L1551.9 128.5 L1553.1 128.7 L1554.3 128.8 L1555.4 128.9 L1556.5 129.1 L1557.5 129.2 L1558.4 129.3 L1559.3 129.4 L1560.1 129.5 L1560.9 129.6 L1561.6 129.6 L1562.2 129.7 L1562.8 129.8 L1563.3 129.8 L1563.8 129.9 L1564.3 130.0 L1564.8 130.0 L1565.3 130.1 L1565.8 130.1 L1566.2 130.2 L1566.6 130.2 L1567.0 130.3 L1567.4 130.3 L1567.8 130.4 L1568.1 130.4 L1568.5 130.4 L1568.9 130.5 L1569.3 130.5 L1569.6 130.6 L1570.0 130.6 L1570.4 130.7 L1570.7 130.7 L1571.1 130.7 L1571.4 130.8 L1571.7 130.8 L1572.0 130.8 L1572.2 130.9 L1572.3 130.9 L1572.5 130.9 L1572.6 130.9 L1572.8 130.9 L1572.9 130.9 L1573.0 131.0 L1573.1 131.0 L1573.2 131.0 L1573.2 131.0 L1573.3 131.0 L1573.4 131.0 L1573.4 131.0 L1573.4 131.0Z" fill="none" stroke="#252525" stroke-width="2.6" stroke-linejoin="round" clip-path="url(#plotclip)"/><path d="M951.5 521.5V59.5H1551.5V521.5" stroke="#a4a4a4" stroke-width="1.3" fill="none"/><path d="M951.5 521.5H1551.5" stroke="#a4a4a4" stroke-width="1.5" fill="none"/><text x="1235.0" y="54.5" font-size="12.6" fill="#d6d6d6" text-anchor="middle" textLength="79.0" lengthAdjust="spacingAndGlyphs">CIE 1976 u'v'</text><path d="M952.0 521.5v6" stroke="#d8d8d8" stroke-width="1.8"/><text x="951.5" y="541.4" font-size="12.2" fill="#d6d6d6" text-anchor="middle" textLength="7.6" lengthAdjust="spacingAndGlyphs">0</text><path d="M946 521.3H951.5" stroke="#d8d8d8" stroke-width="1.8"/><text x="945.5" y="525.7" font-size="12.2" fill="#d6d6d6" text-anchor="end" textLength="7.6" lengthAdjust="spacingAndGlyphs">0</text><path d="M1001.0 521.5v6" stroke="#d8d8d8" stroke-width="1.8"/><text x="1001.4" y="541.4" font-size="12.2" fill="#d6d6d6" text-anchor="middle" textLength="26.6" lengthAdjust="spacingAndGlyphs">0,05</text><path d="M946 483.3H951.5" stroke="#d8d8d8" stroke-width="1.8"/><text x="945.5" y="487.3" font-size="12.2" fill="#d6d6d6" text-anchor="end" textLength="26.6" lengthAdjust="spacingAndGlyphs">0,05</text><path d="M1051.0 521.5v6" stroke="#d8d8d8" stroke-width="1.8"/><text x="1051.3" y="541.4" font-size="12.2" fill="#d6d6d6" text-anchor="middle" textLength="19.0" lengthAdjust="spacingAndGlyphs">0,1</text><path d="M946 444.3H951.5" stroke="#d8d8d8" stroke-width="1.8"/><text x="945.5" y="448.9" font-size="12.2" fill="#d6d6d6" text-anchor="end" textLength="19.0" lengthAdjust="spacingAndGlyphs">0,1</text><path d="M1101.0 521.5v6" stroke="#d8d8d8" stroke-width="1.8"/><text x="1101.2" y="541.4" font-size="12.2" fill="#d6d6d6" text-anchor="middle" textLength="26.6" lengthAdjust="spacingAndGlyphs">0,15</text><path d="M946 406.3H951.5" stroke="#d8d8d8" stroke-width="1.8"/><text x="945.5" y="410.5" font-size="12.2" fill="#d6d6d6" text-anchor="end" textLength="26.6" lengthAdjust="spacingAndGlyphs">0,15</text><path d="M1151.0 521.5v6" stroke="#d8d8d8" stroke-width="1.8"/><text x="1151.2" y="541.4" font-size="12.2" fill="#d6d6d6" text-anchor="middle" textLength="19.0" lengthAdjust="spacingAndGlyphs">0,2</text><path d="M946 368.3H951.5" stroke="#d8d8d8" stroke-width="1.8"/><text x="945.5" y="372.1" font-size="12.2" fill="#d6d6d6" text-anchor="end" textLength="19.0" lengthAdjust="spacingAndGlyphs">0,2</text><path d="M1201.0 521.5v6" stroke="#d8d8d8" stroke-width="1.8"/><text x="1201.1" y="541.4" font-size="12.2" fill="#d6d6d6" text-anchor="middle" textLength="26.6" lengthAdjust="spacingAndGlyphs">0,25</text><path d="M946 329.3H951.5" stroke="#d8d8d8" stroke-width="1.8"/><text x="945.5" y="333.7" font-size="12.2" fill="#d6d6d6" text-anchor="end" textLength="26.6" lengthAdjust="spacingAndGlyphs">0,25</text><path d="M1251.0 521.5v6" stroke="#d8d8d8" stroke-width="1.8"/><text x="1251.0" y="541.4" font-size="12.2" fill="#d6d6d6" text-anchor="middle" textLength="19.0" lengthAdjust="spacingAndGlyphs">0,3</text><path d="M946 291.3H951.5" stroke="#d8d8d8" stroke-width="1.8"/><text x="945.5" y="295.3" font-size="12.2" fill="#d6d6d6" text-anchor="end" textLength="19.0" lengthAdjust="spacingAndGlyphs">0,3</text><path d="M1301.0 521.5v6" stroke="#d8d8d8" stroke-width="1.8"/><text x="1300.9" y="541.4" font-size="12.2" fill="#d6d6d6" text-anchor="middle" textLength="26.6" lengthAdjust="spacingAndGlyphs">0,35</text><path d="M946 252.3H951.5" stroke="#d8d8d8" stroke-width="1.8"/><text x="945.5" y="256.9" font-size="12.2" fill="#d6d6d6" text-anchor="end" textLength="26.6" lengthAdjust="spacingAndGlyphs">0,35</text><path d="M1351.0 521.5v6" stroke="#d8d8d8" stroke-width="1.8"/><text x="1350.8" y="541.4" font-size="12.2" fill="#d6d6d6" text-anchor="middle" textLength="19.0" lengthAdjust="spacingAndGlyphs">0,4</text><path d="M946 214.3H951.5" stroke="#d8d8d8" stroke-width="1.8"/><text x="945.5" y="218.5" font-size="12.2" fill="#d6d6d6" text-anchor="end" textLength="19.0" lengthAdjust="spacingAndGlyphs">0,4</text><path d="M1401.0 521.5v6" stroke="#d8d8d8" stroke-width="1.8"/><text x="1400.7" y="541.4" font-size="12.2" fill="#d6d6d6" text-anchor="middle" textLength="26.6" lengthAdjust="spacingAndGlyphs">0,45</text><path d="M946 176.3H951.5" stroke="#d8d8d8" stroke-width="1.8"/><text x="945.5" y="180.1" font-size="12.2" fill="#d6d6d6" text-anchor="end" textLength="26.6" lengthAdjust="spacingAndGlyphs">0,45</text><path d="M1451.0 521.5v6" stroke="#d8d8d8" stroke-width="1.8"/><text x="1450.7" y="541.4" font-size="12.2" fill="#d6d6d6" text-anchor="middle" textLength="19.0" lengthAdjust="spacingAndGlyphs">0,5</text><path d="M946 137.3H951.5" stroke="#d8d8d8" stroke-width="1.8"/><text x="945.5" y="141.7" font-size="12.2" fill="#d6d6d6" text-anchor="end" textLength="19.0" lengthAdjust="spacingAndGlyphs">0,5</text><path d="M1501.0 521.5v6" stroke="#d8d8d8" stroke-width="1.8"/><text x="1500.6" y="541.4" font-size="12.2" fill="#d6d6d6" text-anchor="middle" textLength="26.6" lengthAdjust="spacingAndGlyphs">0,55</text><path d="M946 99.3H951.5" stroke="#d8d8d8" stroke-width="1.8"/><text x="945.5" y="103.3" font-size="12.2" fill="#d6d6d6" text-anchor="end" textLength="26.6" lengthAdjust="spacingAndGlyphs">0,55</text><rect x="1122.7" y="133.8" width="12.4" height="12.4" fill="none" stroke="#fff" stroke-width="1.15" stroke-opacity=".92"/><rect x="1106.7" y="118.5" width="12.4" height="12.4" fill="none" stroke="#fff" stroke-width="1.15" stroke-opacity=".92"/><rect x="1092.2" y="104.7" width="12.4" height="12.4" fill="none" stroke="#fff" stroke-width="1.15" stroke-opacity=".92"/><rect x="1081.0" y="92.6" width="12.4" height="12.4" fill="none" stroke="#fff" stroke-width="1.15" stroke-opacity=".92"/><rect x="1069.6" y="81.8" width="12.4" height="12.4" fill="none" stroke="#fff" stroke-width="1.15" stroke-opacity=".92"/><rect x="1145.2" y="137.7" width="12.4" height="12.4" fill="none" stroke="#fff" stroke-width="1.15" stroke-opacity=".92"/><rect x="1146.4" y="123.2" width="12.4" height="12.4" fill="none" stroke="#fff" stroke-width="1.15" stroke-opacity=".92"/><rect x="1147.4" y="110.8" width="12.4" height="12.4" fill="none" stroke="#fff" stroke-width="1.15" stroke-opacity=".92"/><rect x="1148.3" y="100.1" width="12.4" height="12.4" fill="none" stroke="#fff" stroke-width="1.15" stroke-opacity=".92"/><rect x="1149.2" y="89.0" width="12.4" height="12.4" fill="none" stroke="#fff" stroke-width="1.15" stroke-opacity=".92"/><rect x="1130.6" y="156.0" width="12.4" height="12.4" fill="none" stroke="#fff" stroke-width="1.15" stroke-opacity=".92"/><rect x="1118.8" y="158.0" width="12.4" height="12.4" fill="none" stroke="#fff" stroke-width="1.15" stroke-opacity=".92"/><rect x="1106.7" y="160.8" width="12.4" height="12.4" fill="none" stroke="#fff" stroke-width="1.15" stroke-opacity=".92"/><rect x="1094.5" y="161.9" width="12.4" height="12.4" fill="none" stroke="#fff" stroke-width="1.15" stroke-opacity=".92"/><rect x="1083.5" y="165.0" width="12.4" height="12.4" fill="none" stroke="#fff" stroke-width="1.15" stroke-opacity=".92"/><rect x="1187.9" y="147.0" width="12.4" height="12.4" fill="none" stroke="#fff" stroke-width="1.15" stroke-opacity=".92"/><rect x="1238.0" y="137.7" width="12.4" height="12.4" fill="none" stroke="#fff" stroke-width="1.15" stroke-opacity=".92"/><rect x="1283.7" y="130.6" width="12.4" height="12.4" fill="none" stroke="#fff" stroke-width="1.15" stroke-opacity=".92"/><rect x="1334.7" y="121.6" width="12.4" height="12.4" fill="none" stroke="#fff" stroke-width="1.15" stroke-opacity=".92"/><rect x="1394.8" y="111.8" width="12.4" height="12.4" fill="none" stroke="#fff" stroke-width="1.15" stroke-opacity=".92"/><rect x="1159.1" y="169.7" width="12.4" height="12.4" fill="none" stroke="#fff" stroke-width="1.15" stroke-opacity=".92"/><rect x="1176.8" y="187.9" width="12.4" height="12.4" fill="none" stroke="#fff" stroke-width="1.15" stroke-opacity=".92"/><rect x="1194.8" y="206.9" width="12.4" height="12.4" fill="none" stroke="#fff" stroke-width="1.15" stroke-opacity=".92"/><rect x="1218.8" y="230.8" width="12.4" height="12.4" fill="none" stroke="#fff" stroke-width="1.15" stroke-opacity=".92"/><rect x="1249.9" y="259.7" width="12.4" height="12.4" fill="none" stroke="#fff" stroke-width="1.15" stroke-opacity=".92"/><rect x="1139.7" y="181.9" width="12.4" height="12.4" fill="none" stroke="#fff" stroke-width="1.15" stroke-opacity=".92"/><rect x="1136.9" y="216.8" width="12.4" height="12.4" fill="none" stroke="#fff" stroke-width="1.15" stroke-opacity=".92"/><rect x="1132.9" y="258.7" width="12.4" height="12.4" fill="none" stroke="#fff" stroke-width="1.15" stroke-opacity=".92"/><rect x="1127.7" y="312.8" width="12.4" height="12.4" fill="none" stroke="#fff" stroke-width="1.15" stroke-opacity=".92"/><rect x="1120.8" y="392.8" width="12.4" height="12.4" fill="none" stroke="#fff" stroke-width="1.15" stroke-opacity=".92"/><rect x="1142" y="153.8" width="12" height="12" fill="none" stroke="#000" stroke-width="1.6"/><circle cx="1122.5" cy="141.4" r="3.85" fill="#9cb89c" stroke="#000" stroke-width="1.25"/><circle cx="1107.5" cy="123.4" r="3.85" fill="#81b881" stroke="#000" stroke-width="1.25"/><circle cx="1093.4" cy="108.4" r="3.85" fill="#67b867" stroke="#000" stroke-width="1.25"/><circle cx="1080.6" cy="95.4" r="3.85" fill="#4bb84b" stroke="#000" stroke-width="1.25"/><circle cx="1069.6" cy="83.4" r="3.85" fill="#00b800" stroke="#000" stroke-width="1.25"/><circle cx="1143.5" cy="145.3" r="3.85" fill="#b8b89c" stroke="#000" stroke-width="1.25"/><circle cx="1144.1" cy="130.0" r="3.85" fill="#b8b881" stroke="#000" stroke-width="1.25"/><circle cx="1144.5" cy="116.2" r="3.85" fill="#b8b867" stroke="#000" stroke-width="1.25"/><circle cx="1144.9" cy="104.4" r="3.85" fill="#b8b84b" stroke="#000" stroke-width="1.25"/><circle cx="1145.4" cy="91.6" r="3.85" fill="#b8b800" stroke="#000" stroke-width="1.25"/><circle cx="1130.5" cy="164.5" r="3.85" fill="#9cb8b8" stroke="#000" stroke-width="1.25"/><circle cx="1120.4" cy="165.4" r="3.85" fill="#81b8b8" stroke="#000" stroke-width="1.25"/><circle cx="1110.0" cy="168.4" r="3.85" fill="#67b8b8" stroke="#000" stroke-width="1.25"/><circle cx="1098.7" cy="169.4" r="3.85" fill="#4bb8b8" stroke="#000" stroke-width="1.25"/><circle cx="1087.2" cy="171.6" r="3.85" fill="#00b8b8" stroke="#000" stroke-width="1.25"/><circle cx="1184.5" cy="155.5" r="3.85" fill="#b88888" stroke="#000" stroke-width="1.25"/><circle cx="1233.4" cy="146.5" r="3.85" fill="#b87272" stroke="#000" stroke-width="1.25"/><circle cx="1281.4" cy="138.6" r="3.85" fill="#b85c5c" stroke="#000" stroke-width="1.25"/><circle cx="1335.5" cy="128.4" r="3.85" fill="#b84242" stroke="#000" stroke-width="1.25"/><circle cx="1399.5" cy="118.5" r="3.85" fill="#b80000" stroke="#000" stroke-width="1.25"/><circle cx="1158.6" cy="179.4" r="3.85" fill="#b89cb8" stroke="#000" stroke-width="1.25"/><circle cx="1175.7" cy="197.5" r="3.85" fill="#b881b8" stroke="#000" stroke-width="1.25"/><circle cx="1193.0" cy="217.5" r="3.85" fill="#b867b8" stroke="#000" stroke-width="1.25"/><circle cx="1218.5" cy="244.5" r="3.85" fill="#b84bb8" stroke="#000" stroke-width="1.25"/><circle cx="1250.5" cy="279.5" r="3.85" fill="#b800b8" stroke="#000" stroke-width="1.25"/><circle cx="1141.5" cy="192.3" r="3.85" fill="#9c9cb8" stroke="#000" stroke-width="1.25"/><circle cx="1140.6" cy="226.5" r="3.85" fill="#8181b8" stroke="#000" stroke-width="1.25"/><circle cx="1138.2" cy="270.6" r="3.85" fill="#6767b8" stroke="#000" stroke-width="1.25"/><circle cx="1136.6" cy="325.2" r="3.85" fill="#4b4bb8" stroke="#000" stroke-width="1.25"/><circle cx="1132.8" cy="404.7" r="3.85" fill="#0000b8" stroke="#000" stroke-width="1.25"/><circle cx="1141.5" cy="164.6" r="3.9" fill="#fff" stroke="#000" stroke-width="1"/><rect x="1347" y="379" width="199" height="135" fill="#808080"/><rect x="1348" y="380" width="197" height="3" fill="url(#i0)"/><rect x="1348" y="383" width="197" height="3" fill="url(#i1)"/><rect x="1348" y="386" width="197" height="3" fill="url(#i2)"/><rect x="1348" y="389" width="197" height="3" fill="url(#i3)"/><rect x="1348" y="392" width="197" height="3" fill="url(#i4)"/><rect x="1348" y="395" width="197" height="3" fill="url(#i5)"/><rect x="1348" y="398" width="197" height="3" fill="url(#i6)"/><rect x="1348" y="401" width="197" height="3" fill="url(#i7)"/><rect x="1348" y="404" width="197" height="3" fill="url(#i8)"/><rect x="1348" y="407" width="197" height="3" fill="url(#i9)"/><rect x="1348" y="410" width="197" height="3" fill="url(#i10)"/><rect x="1348" y="413" width="197" height="3" fill="url(#i11)"/><rect x="1348" y="416" width="197" height="3" fill="url(#i12)"/><rect x="1348" y="419" width="197" height="3" fill="url(#i13)"/><rect x="1348" y="422" width="197" height="3" fill="url(#i14)"/><rect x="1348" y="425" width="197" height="3" fill="url(#i15)"/><rect x="1348" y="428" width="197" height="3" fill="url(#i16)"/><rect x="1348" y="431" width="197" height="3" fill="url(#i17)"/><rect x="1348" y="434" width="197" height="3" fill="url(#i18)"/><rect x="1348" y="437" width="197" height="3" fill="url(#i19)"/><rect x="1348" y="440" width="197" height="3" fill="url(#i20)"/><rect x="1348" y="443" width="197" height="3" fill="url(#i21)"/><rect x="1348" y="446" width="197" height="3" fill="url(#i22)"/><rect x="1348" y="449" width="197" height="3" fill="url(#i23)"/><rect x="1348" y="452" width="197" height="3" fill="url(#i24)"/><rect x="1348" y="455" width="197" height="3" fill="url(#i25)"/><rect x="1348" y="458" width="197" height="3" fill="url(#i26)"/><rect x="1348" y="461" width="197" height="3" fill="url(#i27)"/><rect x="1348" y="464" width="197" height="3" fill="url(#i28)"/><rect x="1348" y="467" width="197" height="3" fill="url(#i29)"/><rect x="1348" y="470" width="197" height="3" fill="url(#i30)"/><rect x="1348" y="473" width="197" height="3" fill="url(#i31)"/><rect x="1348" y="476" width="197" height="3" fill="url(#i32)"/><rect x="1348" y="479" width="197" height="3" fill="url(#i33)"/><rect x="1348" y="482" width="197" height="3" fill="url(#i34)"/><rect x="1348" y="485" width="197" height="3" fill="url(#i35)"/><rect x="1348" y="488" width="197" height="3" fill="url(#i36)"/><rect x="1348" y="491" width="197" height="3" fill="url(#i37)"/><rect x="1348" y="494" width="197" height="3" fill="url(#i38)"/><rect x="1348" y="497" width="197" height="3" fill="url(#i39)"/><rect x="1348" y="500" width="197" height="3" fill="url(#i40)"/><rect x="1348" y="503" width="197" height="3" fill="url(#i41)"/><rect x="1348" y="506" width="197" height="3" fill="url(#i42)"/><rect x="1348" y="509" width="197" height="3" fill="url(#i43)"/><rect x="1348" y="512" width="197" height="1" fill="url(#i44)"/><path d="M1016.0 203.1L2240.0 897.0L2240.0 -2796.9L1016.0 -2796.9Z" fill="#000" fill-opacity="0.4" clip-path="url(#insclip)"/><rect x="1347.5" y="379.5" width="198" height="134" fill="none" stroke="#7c7c7c" stroke-width="2"/><rect x="1438.5" y="439.5" width="13" height="13" fill="none" stroke="#fff" stroke-width="1.3"/><circle cx="1422.4" cy="390.5" r="3.9" fill="#b8b800" stroke="#000" stroke-width="1"/>
<text x="44.0" y="585.3" font-size="27" fill="#f2f2f2" textLength="218.0" lengthAdjust="spacingAndGlyphs" stroke="#f2f2f2" stroke-width=".3">Avg dE2000: 2,64</text>
<text x="40.0" y="621.8" font-size="27" fill="#f2f2f2" textLength="227.0" lengthAdjust="spacingAndGlyphs" stroke="#f2f2f2" stroke-width=".3">Max dE2000: 6,58</text>
<text x="10.5" y="668.3" font-size="27.6" fill="#f2f2f2" textLength="205.0" lengthAdjust="spacingAndGlyphs" stroke="#f2f2f2" stroke-width=".3">Current Reading</text>
<text x="10.5" y="700.8" font-size="23" fill="#f2f2f2" textLength="82.0" lengthAdjust="spacingAndGlyphs" stroke="#f2f2f2" stroke-width=".3">x: 0,413</text>
<text x="158.0" y="700.8" font-size="23" fill="#f2f2f2" textLength="95.5" lengthAdjust="spacingAndGlyphs" stroke="#f2f2f2" stroke-width=".3">y: 0,5269</text>
<text x="10.5" y="739.0" font-size="23" fill="#f2f2f2" textLength="90.0" lengthAdjust="spacingAndGlyphs" stroke="#f2f2f2" stroke-width=".3">fL: 56,69</text>
<text x="10.5" y="771.0" font-size="23" fill="#f2f2f2" textLength="149.0" lengthAdjust="spacingAndGlyphs" stroke="#f2f2f2" stroke-width=".3">cd/m²: 194,24</text>
<rect x="331.5" y="591.5" width="234.0" height="169.0" fill="#252525"/><path d="M331.5 634.5H565.5" stroke="#8e8e8e" stroke-width="1"/><path d="M331.5 676.5H565.5" stroke="#8e8e8e" stroke-width="1"/><path d="M331.5 718.5H565.5" stroke="#8e8e8e" stroke-width="1"/><path d="M331.5 760.5V591.5H565.5V760.5" stroke="#a4a4a4" stroke-width="1.8" fill="none"/><path d="M325.5 760.5H565.5" stroke="#a4a4a4" stroke-width="1.8" fill="none"/><path d="M331.5 760.5v6M565.5 760.5v6" stroke="#d8d8d8" stroke-width="2"/><path d="M326.0 592.5H331.0" stroke="#d8d8d8" stroke-width="2"/><text x="324.7" y="596.9" font-size="12.2" fill="#d6d6d6" text-anchor="end" textLength="22.0" lengthAdjust="spacingAndGlyphs">120</text><path d="M326.0 634.5H331.0" stroke="#d8d8d8" stroke-width="2"/><text x="324.7" y="638.9" font-size="12.2" fill="#d6d6d6" text-anchor="end" textLength="21.0" lengthAdjust="spacingAndGlyphs">110</text><path d="M326.0 676.5H331.0" stroke="#d8d8d8" stroke-width="2"/><text x="324.7" y="680.9" font-size="12.2" fill="#d6d6d6" text-anchor="end" textLength="22.0" lengthAdjust="spacingAndGlyphs">100</text><path d="M326.0 718.5H331.0" stroke="#d8d8d8" stroke-width="2"/><text x="324.7" y="722.9" font-size="12.2" fill="#d6d6d6" text-anchor="end" textLength="14.7" lengthAdjust="spacingAndGlyphs">90</text><text x="324.7" y="764.9" font-size="12.2" fill="#d6d6d6" text-anchor="end" textLength="14.7" lengthAdjust="spacingAndGlyphs">80</text><text x="434.0" y="585.5" font-size="12.6" fill="#d6d6d6" text-anchor="middle" textLength="78.0" lengthAdjust="spacingAndGlyphs">RGB Balance</text><text x="448.5" y="774.7" font-size="12.2" fill="#d6d6d6" text-anchor="middle" textLength="33.7" lengthAdjust="spacingAndGlyphs">100%</text><rect x="354.8" y="704.7" width="60.4" height="55.8" fill="url(#rr)" stroke="#000" stroke-width="1.2"/><rect x="416.4" y="682.5" width="61.6" height="78.0" fill="url(#rg)" stroke="#000" stroke-width="1.2"/><rect x="479.4" y="736.8" width="61.2" height="23.7" fill="url(#rb)" stroke="#000" stroke-width="1.2"/><path d="M325.5 760.5H565.5" stroke="#a4a4a4" stroke-width="1.8" fill="none"/>
<rect x="584.5" y="560.5" width="684" height="222.4" fill="#111"/><rect x="586" y="562" width="682" height="26.7" fill="url(#th)"/><text x="818.3" y="580.8" font-size="12.5" fill="#f4f4f4" text-anchor="middle" font-weight="bold" font-family='"DejaVu Sans", "Liberation Sans", sans-serif' textLength="35.9" lengthAdjust="spacingAndGlyphs">20%</text><text x="918.2" y="580.8" font-size="12.5" fill="#f4f4f4" text-anchor="middle" font-weight="bold" font-family='"DejaVu Sans", "Liberation Sans", sans-serif' textLength="35.9" lengthAdjust="spacingAndGlyphs">40%</text><text x="1018.1" y="580.8" font-size="12.5" fill="#f4f4f4" text-anchor="middle" font-weight="bold" font-family='"DejaVu Sans", "Liberation Sans", sans-serif' textLength="35.9" lengthAdjust="spacingAndGlyphs">60%</text><text x="1118.0" y="580.8" font-size="12.5" fill="#f4f4f4" text-anchor="middle" font-weight="bold" font-family='"DejaVu Sans", "Liberation Sans", sans-serif' textLength="35.9" lengthAdjust="spacingAndGlyphs">80%</text><text x="1217.9" y="580.8" font-size="12.5" fill="#f4f4f4" text-anchor="middle" font-weight="bold" font-family='"DejaVu Sans", "Liberation Sans", sans-serif' textLength="46.3" lengthAdjust="spacingAndGlyphs">100%</text><rect x="586" y="588.70" width="682" height="24.25" fill="#484848"/><text x="603.0" y="607.0" font-size="14.5" fill="#f4f4f4" font-weight="bold" font-family='"DejaVu Sans", "Liberation Sans", sans-serif' textLength="83.6" lengthAdjust="spacingAndGlyphs">x: CIE31</text><text x="774.5" y="607.0" font-size="14.5" fill="#ececec" font-family='"DejaVu Sans", "Liberation Sans", sans-serif' textLength="63.9" lengthAdjust="spacingAndGlyphs">0,3240</text><text x="874.2" y="607.0" font-size="14.5" fill="#ececec" font-family='"DejaVu Sans", "Liberation Sans", sans-serif' textLength="63.9" lengthAdjust="spacingAndGlyphs">0,3453</text><text x="974.0" y="607.0" font-size="14.5" fill="#ececec" font-family='"DejaVu Sans", "Liberation Sans", sans-serif' textLength="63.9" lengthAdjust="spacingAndGlyphs">0,3670</text><text x="1073.8" y="607.0" font-size="14.5" fill="#ececec" font-family='"DejaVu Sans", "Liberation Sans", sans-serif' textLength="63.9" lengthAdjust="spacingAndGlyphs">0,3881</text><text x="1173.5" y="607.0" font-size="14.5" fill="#ececec" font-family='"DejaVu Sans", "Liberation Sans", sans-serif' textLength="63.9" lengthAdjust="spacingAndGlyphs">0,4130</text><rect x="586" y="612.85" width="682" height="24.25" fill="#808080"/><text x="603.0" y="631.1" font-size="14.5" fill="#f4f4f4" font-weight="bold" font-family='"DejaVu Sans", "Liberation Sans", sans-serif' textLength="83.7" lengthAdjust="spacingAndGlyphs">y: CIE31</text><text x="774.5" y="631.1" font-size="14.5" fill="#ececec" font-family='"DejaVu Sans", "Liberation Sans", sans-serif' textLength="63.9" lengthAdjust="spacingAndGlyphs">0,3656</text><text x="874.2" y="631.1" font-size="14.5" fill="#ececec" font-family='"DejaVu Sans", "Liberation Sans", sans-serif' textLength="63.9" lengthAdjust="spacingAndGlyphs">0,4042</text><text x="974.0" y="631.1" font-size="14.5" fill="#ececec" font-family='"DejaVu Sans", "Liberation Sans", sans-serif' textLength="63.9" lengthAdjust="spacingAndGlyphs">0,4436</text><text x="1073.8" y="631.1" font-size="14.5" fill="#ececec" font-family='"DejaVu Sans", "Liberation Sans", sans-serif' textLength="63.9" lengthAdjust="spacingAndGlyphs">0,4818</text><text x="1173.5" y="631.1" font-size="14.5" fill="#ececec" font-family='"DejaVu Sans", "Liberation Sans", sans-serif' textLength="63.9" lengthAdjust="spacingAndGlyphs">0,5269</text><rect x="586" y="637.00" width="682" height="24.25" fill="#484848"/><text x="603.0" y="655.3" font-size="14.5" fill="#f4f4f4" font-weight="bold" font-family='"DejaVu Sans", "Liberation Sans", sans-serif' textLength="13.2" lengthAdjust="spacingAndGlyphs">Y</text><text x="774.5" y="655.3" font-size="14.5" fill="#ececec" font-family='"DejaVu Sans", "Liberation Sans", sans-serif' textLength="87.2" lengthAdjust="spacingAndGlyphs">214,8720</text><text x="874.2" y="655.3" font-size="14.5" fill="#ececec" font-family='"DejaVu Sans", "Liberation Sans", sans-serif' textLength="87.2" lengthAdjust="spacingAndGlyphs">210,3384</text><text x="974.0" y="655.3" font-size="14.5" fill="#ececec" font-family='"DejaVu Sans", "Liberation Sans", sans-serif' textLength="87.2" lengthAdjust="spacingAndGlyphs">206,3747</text><text x="1073.8" y="655.3" font-size="14.5" fill="#ececec" font-family='"DejaVu Sans", "Liberation Sans", sans-serif' textLength="87.2" lengthAdjust="spacingAndGlyphs">202,9679</text><text x="1173.5" y="655.3" font-size="14.5" fill="#ececec" font-family='"DejaVu Sans", "Liberation Sans", sans-serif' textLength="87.2" lengthAdjust="spacingAndGlyphs">194,2360</text><rect x="586" y="661.15" width="682" height="24.25" fill="#808080"/><text x="603.0" y="679.5" font-size="14.5" fill="#f4f4f4" font-weight="bold" font-family='"DejaVu Sans", "Liberation Sans", sans-serif' textLength="149.2" lengthAdjust="spacingAndGlyphs">Target x:CIE31</text><text x="774.5" y="679.5" font-size="14.5" fill="#ececec" font-family='"DejaVu Sans", "Liberation Sans", sans-serif' textLength="63.9" lengthAdjust="spacingAndGlyphs">0,3344</text><text x="874.2" y="679.5" font-size="14.5" fill="#ececec" font-family='"DejaVu Sans", "Liberation Sans", sans-serif' textLength="63.9" lengthAdjust="spacingAndGlyphs">0,3564</text><text x="974.0" y="679.5" font-size="14.5" fill="#ececec" font-family='"DejaVu Sans", "Liberation Sans", sans-serif' textLength="63.9" lengthAdjust="spacingAndGlyphs">0,3773</text><text x="1073.8" y="679.5" font-size="14.5" fill="#ececec" font-family='"DejaVu Sans", "Liberation Sans", sans-serif' textLength="63.9" lengthAdjust="spacingAndGlyphs">0,3969</text><text x="1173.5" y="679.5" font-size="14.5" fill="#ececec" font-family='"DejaVu Sans", "Liberation Sans", sans-serif' textLength="63.9" lengthAdjust="spacingAndGlyphs">0,4193</text><rect x="586" y="685.30" width="682" height="24.25" fill="#484848"/><text x="603.0" y="703.6" font-size="14.5" fill="#f4f4f4" font-weight="bold" font-family='"DejaVu Sans", "Liberation Sans", sans-serif' textLength="149.3" lengthAdjust="spacingAndGlyphs">Target y:CIE31</text><text x="774.5" y="703.6" font-size="14.5" fill="#ececec" font-family='"DejaVu Sans", "Liberation Sans", sans-serif' textLength="63.9" lengthAdjust="spacingAndGlyphs">0,3648</text><text x="874.2" y="703.6" font-size="14.5" fill="#ececec" font-family='"DejaVu Sans", "Liberation Sans", sans-serif' textLength="63.9" lengthAdjust="spacingAndGlyphs">0,4013</text><text x="974.0" y="703.6" font-size="14.5" fill="#ececec" font-family='"DejaVu Sans", "Liberation Sans", sans-serif' textLength="63.9" lengthAdjust="spacingAndGlyphs">0,4358</text><text x="1073.8" y="703.6" font-size="14.5" fill="#ececec" font-family='"DejaVu Sans", "Liberation Sans", sans-serif' textLength="63.9" lengthAdjust="spacingAndGlyphs">0,4682</text><text x="1173.5" y="703.6" font-size="14.5" fill="#ececec" font-family='"DejaVu Sans", "Liberation Sans", sans-serif' textLength="63.9" lengthAdjust="spacingAndGlyphs">0,5053</text><rect x="586" y="709.45" width="682" height="24.25" fill="#808080"/><text x="603.0" y="727.8" font-size="14.5" fill="#f4f4f4" font-weight="bold" font-family='"DejaVu Sans", "Liberation Sans", sans-serif' textLength="85.2" lengthAdjust="spacingAndGlyphs">Target Y</text><text x="774.5" y="727.8" font-size="14.5" fill="#ececec" font-family='"DejaVu Sans", "Liberation Sans", sans-serif' textLength="87.2" lengthAdjust="spacingAndGlyphs">224,3758</text><text x="874.2" y="727.8" font-size="14.5" fill="#ececec" font-family='"DejaVu Sans", "Liberation Sans", sans-serif' textLength="87.2" lengthAdjust="spacingAndGlyphs">220,4373</text><text x="974.0" y="727.8" font-size="14.5" fill="#ececec" font-family='"DejaVu Sans", "Liberation Sans", sans-serif' textLength="87.2" lengthAdjust="spacingAndGlyphs">217,4112</text><text x="1073.8" y="727.8" font-size="14.5" fill="#ececec" font-family='"DejaVu Sans", "Liberation Sans", sans-serif' textLength="87.2" lengthAdjust="spacingAndGlyphs">215,0363</text><text x="1173.5" y="727.8" font-size="14.5" fill="#ececec" font-family='"DejaVu Sans", "Liberation Sans", sans-serif' textLength="87.2" lengthAdjust="spacingAndGlyphs">212,7403</text><rect x="586" y="733.60" width="682" height="24.25" fill="#484848"/><text x="603.0" y="751.9" font-size="14.5" fill="#f4f4f4" font-weight="bold" font-family='"DejaVu Sans", "Liberation Sans", sans-serif' textLength="83.8" lengthAdjust="spacingAndGlyphs">ΔE 2000</text><text x="774.5" y="751.9" font-size="14.5" fill="#ececec" font-family='"DejaVu Sans", "Liberation Sans", sans-serif' textLength="63.9" lengthAdjust="spacingAndGlyphs">4,7553</text><text x="874.2" y="751.9" font-size="14.5" fill="#ececec" font-family='"DejaVu Sans", "Liberation Sans", sans-serif' textLength="63.9" lengthAdjust="spacingAndGlyphs">3,8458</text><text x="974.0" y="751.9" font-size="14.5" fill="#ececec" font-family='"DejaVu Sans", "Liberation Sans", sans-serif' textLength="63.9" lengthAdjust="spacingAndGlyphs">3,5807</text><text x="1073.8" y="751.9" font-size="14.5" fill="#ececec" font-family='"DejaVu Sans", "Liberation Sans", sans-serif' textLength="63.9" lengthAdjust="spacingAndGlyphs">3,4344</text><text x="1173.5" y="751.9" font-size="14.5" fill="#ececec" font-family='"DejaVu Sans", "Liberation Sans", sans-serif' textLength="63.9" lengthAdjust="spacingAndGlyphs">3,4940</text><rect x="586" y="757.75" width="682" height="24.25" fill="#808080"/><text x="603.0" y="776.0" font-size="14.5" fill="#f4f4f4" font-weight="bold" font-family='"DejaVu Sans", "Liberation Sans", sans-serif' textLength="65.6" lengthAdjust="spacingAndGlyphs">ΔE ITP</text><text x="774.5" y="776.0" font-size="14.5" fill="#ececec" font-family='"DejaVu Sans", "Liberation Sans", sans-serif' textLength="63.9" lengthAdjust="spacingAndGlyphs">7,5053</text><text x="874.2" y="776.0" font-size="14.5" fill="#ececec" font-family='"DejaVu Sans", "Liberation Sans", sans-serif' textLength="63.9" lengthAdjust="spacingAndGlyphs">7,9664</text><text x="974.0" y="776.0" font-size="14.5" fill="#ececec" font-family='"DejaVu Sans", "Liberation Sans", sans-serif' textLength="63.9" lengthAdjust="spacingAndGlyphs">8,3386</text><text x="1073.8" y="776.0" font-size="14.5" fill="#ececec" font-family='"DejaVu Sans", "Liberation Sans", sans-serif' textLength="63.9" lengthAdjust="spacingAndGlyphs">9,3099</text><text x="1173.5" y="776.0" font-size="14.5" fill="#ececec" font-family='"DejaVu Sans", "Liberation Sans", sans-serif' textLength="75.6" lengthAdjust="spacingAndGlyphs">13,7651</text>
<rect x="0" y="803" width="1558" height="63" fill="url(#bbg)"/><path d="M0 864.0V807.5a4 4 0 0 1 4 -4H38a4 4 0 0 1 4 4V864.0Z" fill="url(#btn)"/><circle cx="19.6" cy="812.6" r="7" fill="url(#circ)"/><path d="M15.6 814.6l4-4.6 4 4.6z" fill="#111"/><rect x="3" y="830" width="34" height="30.5" rx="3" fill="#ffff00" stroke="#b4b400" stroke-width="1"/><path d="M48 864.0V807.5a4 4 0 0 1 4 -4H194a4 4 0 0 1 4 4V864.0Z" fill="url(#btn)"/><rect x="53.5" y="809.5" width="139" height="36" rx="3.5" fill="#c0c0a2" stroke="#7e7e72" stroke-width="1"/><text x="123.0" y="859.6" font-size="10.2" fill="#1e1e1e" text-anchor="middle" font-weight="bold">20%</text><path d="M200 864.0V807.5a4 4 0 0 1 4 -4H346a4 4 0 0 1 4 4V864.0Z" fill="url(#btn)"/><rect x="205.5" y="809.5" width="139" height="36" rx="3.5" fill="#c0c087" stroke="#7e7e72" stroke-width="1"/><text x="275.0" y="859.6" font-size="10.2" fill="#1e1e1e" text-anchor="middle" font-weight="bold">40%</text><path d="M352 864.0V807.5a4 4 0 0 1 4 -4H498a4 4 0 0 1 4 4V864.0Z" fill="url(#btn)"/><rect x="357.5" y="809.5" width="139" height="36" rx="3.5" fill="#c0c06e" stroke="#7e7e72" stroke-width="1"/><text x="427.0" y="859.6" font-size="10.2" fill="#1e1e1e" text-anchor="middle" font-weight="bold">60%</text><path d="M504 864.0V807.5a4 4 0 0 1 4 -4H650a4 4 0 0 1 4 4V864.0Z" fill="url(#btn)"/><rect x="509.5" y="809.5" width="139" height="36" rx="3.5" fill="#c1c050" stroke="#7e7e72" stroke-width="1"/><text x="579.0" y="859.6" font-size="10.2" fill="#1e1e1e" text-anchor="middle" font-weight="bold">80%</text><path d="M656 864.0V807.5a4 4 0 0 1 4 -4H802a4 4 0 0 1 4 4V864.0Z" fill="#0c0c0c"/><rect x="661.5" y="809.5" width="139" height="36" rx="3.5" fill="#c4be00" stroke="#8c8800" stroke-width="1"/><text x="731.0" y="859.6" font-size="10.2" fill="#fff" text-anchor="middle" font-weight="bold">100%</text><path d="M1239 864.0V807.5a4 4 0 0 1 4 -4H1283a4 4 0 0 1 4 4V864.0Z" fill="url(#btn2)"/><path d="M1239 822.5H1287" stroke="#5a5a5a" stroke-width="1.2"/><circle cx="1263" cy="812.6" r="7" fill="url(#circ)"/><path d="M1259 814.6l4-4.6 4 4.6z" fill="#111"/><rect x="1248" y="829.3" width="30" height="29.5" rx="4" fill="url(#stp)" stroke="#111" stroke-width="2.2"/><rect x="1256" y="837" width="13.8" height="13.8" fill="#000"/><path d="M1288.5 833.5V807a3 3 0 0 1 3 -3H1331.0a3 3 0 0 1 3 3V833.5Z" fill="url(#btn2)"/><circle cx="1311.2" cy="818.8" r="10" fill="url(#circ)"/><rect x="1307.0" y="814.6" width="8.4" height="8.4" fill="#1c1c1c"/><path d="M1334.8 833.5V807a3 3 0 0 1 3 -3H1376.0a3 3 0 0 1 3 3V833.5Z" fill="url(#btn2)"/><circle cx="1356.9" cy="818.8" r="10" fill="url(#circ)"/><path d="M1353.5 813.6l8.2 5.2l-8.2 5.2z" fill="#1c1c1c"/><path d="M1379.8 833.5V807a3 3 0 0 1 3 -3H1421.2a3 3 0 0 1 3 3V833.5Z" fill="url(#btn2)"/><circle cx="1402.0" cy="818.8" r="10" fill="url(#circ)"/><path d="M1398.4 814.3h-2.2v9h2.2M1405.6 814.3h2.2v9h-2.2" fill="none" stroke="#1c1c1c" stroke-width="1.3"/><path d="M1398.7 818.8h1.6m1 0h1.6m1 0h1.6" stroke="#1c1c1c" stroke-width="1.2"/><path d="M1425 833.5V807a3 3 0 0 1 3 -3H1466.2a3 3 0 0 1 3 3V833.5Z" fill="url(#btn2)"/><circle cx="1447.1" cy="818.8" r="10" fill="url(#circ)"/><path d="M1447.1 818.8c-1.6-3.4-6-3.4-6 0s4.4 3.4 6 0s6-3.4 6 0s-4.4 3.4-6 0z" fill="none" stroke="#1c1c1c" stroke-width="1.25"/><path d="M1470 833.5V807a3 3 0 0 1 3 -3H1511.0a3 3 0 0 1 3 3V833.5Z" fill="url(#btn2)"/><circle cx="1492.0" cy="818.8" r="10" fill="url(#circ)"/><path d="M1487.0 818a5 5 0 0 1 8.6-3.2M1497.0 819.6a5 5 0 0 1 -8.6 3.2" fill="none" stroke="#1c1c1c" stroke-width="2"/><path d="M1497.6 812.4v4.6h-4.6zM1486.4 825.2v-4.6h4.6z" fill="#1c1c1c"/><path d="M1514.8 833.5V807a3 3 0 0 1 3 -3H1558.2a3 3 0 0 1 3 3V833.5Z" fill="url(#btn2)"/><circle cx="1537.0" cy="818.8" r="10" fill="url(#circ)"/><path d="M1288.5 864.0V838.3a3 3 0 0 1 3 -3H1421.0a3 3 0 0 1 3 3V864.0Z" fill="url(#btn2)"/><path d="M1425 864.0V838.3a3 3 0 0 1 3 -3H1559a3 3 0 0 1 3 3V864.0Z" fill="url(#btn2)"/><circle cx="1318.8" cy="850.2" r="9.6" fill="url(#circ)"/><circle cx="1532" cy="850.2" r="9.6" fill="url(#circ)"/><path d="M1318 845.6l-3.6 4.6 3.6 4.6M1322.6 845.6l-3.6 4.6 3.6 4.6" fill="none" stroke="#222" stroke-width="1.5"/><path d="M1528.2 845.6l3.6 4.6 -3.6 4.6M1532.8 845.6l3.6 4.6 -3.6 4.6" fill="none" stroke="#222" stroke-width="1.5"/><text x="1345.5" y="857.6" font-size="21.5" fill="#2e2e2e" textLength="50.5" lengthAdjust="spacingAndGlyphs" stroke="#2e2e2e" stroke-width=".4">Back</text><text x="1452.5" y="857.6" font-size="21.5" fill="#2e2e2e" textLength="51.5" lengthAdjust="spacingAndGlyphs" stroke="#2e2e2e" stroke-width=".4">Next</text>
</svg>
</body></html>
